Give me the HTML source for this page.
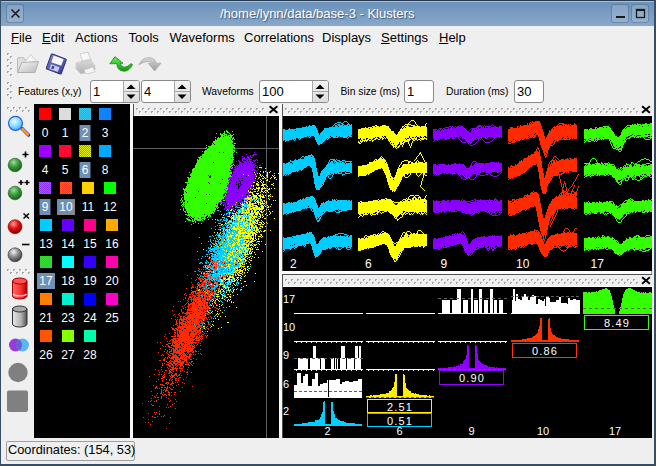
<!DOCTYPE html><html><head><meta charset="utf-8"><style>
*{margin:0;padding:0;box-sizing:border-box}
html,body{width:656px;height:466px;overflow:hidden;background:#efefef;font-family:"Liberation Sans", sans-serif;}
.a{position:absolute}
.t{position:absolute;white-space:pre;line-height:1}
</style></head><body>
<div class="a" style="left:0;top:0;width:656px;height:1px;background:#2a3a4e"></div><div class="a" style="left:0;top:0;width:1px;height:466px;background:#3a4d66"></div><div class="a" style="left:654px;top:0;width:2px;height:466px;background:#3a4d66"></div><div class="a" style="left:0;top:464px;width:656px;height:2px;background:#3a4d66"></div><div class="a" style="left:1px;top:1px;width:653px;height:25px;background:linear-gradient(#6a91ba,#88a8ca)"></div><div class="a" style="left:1px;top:1px;width:653px;height:1px;background:#a6bfda"></div><div class="a" style="left:6px;top:4px;width:18px;height:19px;border-radius:3px;background:rgba(255,255,255,0.15);border:1px solid rgba(40,60,90,0.35)"></div><div class="a" style="left:611px;top:4px;width:18px;height:19px;border-radius:3px;background:rgba(255,255,255,0.15);border:1px solid rgba(40,60,90,0.35)"></div><div class="a" style="left:631px;top:4px;width:18px;height:19px;border-radius:3px;background:rgba(255,255,255,0.15);border:1px solid rgba(40,60,90,0.35)"></div><svg class="a" style="left:0;top:0" width="656" height="26"><path d="M11.5 9.5 L19.5 17.5 M19.5 9.5 L11.5 17.5" stroke="#1a1a1a" stroke-width="1.6"/><rect x="616" y="16" width="9" height="2" fill="#1a1a1a"/><rect x="636.5" y="9.5" width="8" height="8" fill="none" stroke="#1a1a1a" stroke-width="1.3"/><rect x="636" y="9" width="9" height="2" fill="#1a1a1a"/></svg><div class="t" style="left:220px;top:7px;font-size:13px;color:#fff;text-shadow:1px 1px 1px rgba(0,0,0,0.45)">/home/lynn/data/base-3 - Klusters</div><div class="t" style="left:11px;top:31px;font-size:13px;color:#000"><u style="text-decoration:underline;text-underline-offset:1px">F</u>ile</div><div class="t" style="left:42px;top:31px;font-size:13px;color:#000"><u style="text-decoration:underline;text-underline-offset:1px">E</u>dit</div><div class="t" style="left:75px;top:31px;font-size:13px;color:#000">Actions</div><div class="t" style="left:128.5px;top:31px;font-size:13px;color:#000">Tools</div><div class="t" style="left:169.5px;top:31px;font-size:13px;color:#000">Waveforms</div><div class="t" style="left:244px;top:31px;font-size:13px;color:#000">Correlations</div><div class="t" style="left:322px;top:31px;font-size:13px;color:#000">Displays</div><div class="t" style="left:381px;top:31px;font-size:13px;color:#000"><u style="text-decoration:underline;text-underline-offset:1px">S</u>ettings</div><div class="t" style="left:439px;top:31px;font-size:13px;color:#000"><u style="text-decoration:underline;text-underline-offset:1px">H</u>elp</div><svg class="a" style="left:0;top:0" width="656" height="466"><path d="M7 53h2v1h-1v1h-1z" fill="#a4a4a4"/><path d="M8 55h1v-1h1v1h-1z" fill="#ffffff"/><path d="M10 56h2v1h-1v1h-1z" fill="#a4a4a4"/><path d="M11 58h1v-1h1v1h-1z" fill="#ffffff"/><path d="M7 59h2v1h-1v1h-1z" fill="#a4a4a4"/><path d="M8 61h1v-1h1v1h-1z" fill="#ffffff"/><path d="M10 62h2v1h-1v1h-1z" fill="#a4a4a4"/><path d="M11 64h1v-1h1v1h-1z" fill="#ffffff"/><path d="M7 65h2v1h-1v1h-1z" fill="#a4a4a4"/><path d="M8 67h1v-1h1v1h-1z" fill="#ffffff"/><path d="M10 68h2v1h-1v1h-1z" fill="#a4a4a4"/><path d="M11 70h1v-1h1v1h-1z" fill="#ffffff"/><path d="M7 71h2v1h-1v1h-1z" fill="#a4a4a4"/><path d="M8 73h1v-1h1v1h-1z" fill="#ffffff"/><path d="M10 74h2v1h-1v1h-1z" fill="#a4a4a4"/><path d="M11 76h1v-1h1v1h-1z" fill="#ffffff"/><path d="M7 82h2v1h-1v1h-1z" fill="#a4a4a4"/><path d="M8 84h1v-1h1v1h-1z" fill="#ffffff"/><path d="M10 85h2v1h-1v1h-1z" fill="#a4a4a4"/><path d="M11 87h1v-1h1v1h-1z" fill="#ffffff"/><path d="M7 88h2v1h-1v1h-1z" fill="#a4a4a4"/><path d="M8 90h1v-1h1v1h-1z" fill="#ffffff"/><path d="M10 91h2v1h-1v1h-1z" fill="#a4a4a4"/><path d="M11 93h1v-1h1v1h-1z" fill="#ffffff"/><path d="M7 94h2v1h-1v1h-1z" fill="#a4a4a4"/><path d="M8 96h1v-1h1v1h-1z" fill="#ffffff"/><path d="M10 97h2v1h-1v1h-1z" fill="#a4a4a4"/><path d="M11 99h1v-1h1v1h-1z" fill="#ffffff"/><path d="M7 107h2v1h-1v1h-1z" fill="#a4a4a4"/><path d="M8 109h1v-1h1v1h-1z" fill="#ffffff"/><path d="M10 110h2v1h-1v1h-1z" fill="#a4a4a4"/><path d="M11 112h1v-1h1v1h-1z" fill="#ffffff"/><path d="M13 107h2v1h-1v1h-1z" fill="#a4a4a4"/><path d="M14 109h1v-1h1v1h-1z" fill="#ffffff"/><path d="M16 110h2v1h-1v1h-1z" fill="#a4a4a4"/><path d="M17 112h1v-1h1v1h-1z" fill="#ffffff"/><path d="M19 107h2v1h-1v1h-1z" fill="#a4a4a4"/><path d="M20 109h1v-1h1v1h-1z" fill="#ffffff"/><path d="M22 110h2v1h-1v1h-1z" fill="#a4a4a4"/><path d="M23 112h1v-1h1v1h-1z" fill="#ffffff"/><path d="M25 107h2v1h-1v1h-1z" fill="#a4a4a4"/><path d="M26 109h1v-1h1v1h-1z" fill="#ffffff"/><path d="M28 110h2v1h-1v1h-1z" fill="#a4a4a4"/><path d="M29 112h1v-1h1v1h-1z" fill="#ffffff"/><path d="M7 269h2v1h-1v1h-1z" fill="#a4a4a4"/><path d="M8 271h1v-1h1v1h-1z" fill="#ffffff"/><path d="M10 272h2v1h-1v1h-1z" fill="#a4a4a4"/><path d="M11 274h1v-1h1v1h-1z" fill="#ffffff"/><path d="M13 269h2v1h-1v1h-1z" fill="#a4a4a4"/><path d="M14 271h1v-1h1v1h-1z" fill="#ffffff"/><path d="M16 272h2v1h-1v1h-1z" fill="#a4a4a4"/><path d="M17 274h1v-1h1v1h-1z" fill="#ffffff"/><path d="M19 269h2v1h-1v1h-1z" fill="#a4a4a4"/><path d="M20 271h1v-1h1v1h-1z" fill="#ffffff"/><path d="M22 272h2v1h-1v1h-1z" fill="#a4a4a4"/><path d="M23 274h1v-1h1v1h-1z" fill="#ffffff"/><path d="M25 269h2v1h-1v1h-1z" fill="#a4a4a4"/><path d="M26 271h1v-1h1v1h-1z" fill="#ffffff"/><path d="M28 272h2v1h-1v1h-1z" fill="#a4a4a4"/><path d="M29 274h1v-1h1v1h-1z" fill="#ffffff"/></svg><svg class="a" style="left:0;top:0" width="180" height="80">
<defs>
<linearGradient id="gfold" x1="0" y1="0" x2="1" y2="1"><stop offset="0" stop-color="#fafafa"/><stop offset="1" stop-color="#b8b8b8"/></linearGradient>
<linearGradient id="gflop" x1="0" y1="0" x2="1" y2="1"><stop offset="0" stop-color="#7b7fc8"/><stop offset="1" stop-color="#3a3f96"/></linearGradient>
<linearGradient id="ggreen" x1="0" y1="0" x2="0" y2="1"><stop offset="0" stop-color="#66ee55"/><stop offset="1" stop-color="#109a10"/></linearGradient>
<linearGradient id="ggray" x1="0" y1="0" x2="0" y2="1"><stop offset="0" stop-color="#d6d6d6"/><stop offset="1" stop-color="#9d9d9d"/></linearGradient>
</defs>
<!-- open folder -->
<path d="M17.5 58 L23.5 57.5 L25 60 L33 60 L33 72.5 L17.5 72.5 Z" fill="#dedede" stroke="#bdbdbd" stroke-width="1"/>
<path d="M23 64 L31 54.5 L35.5 60.5 L27 67 Z" fill="#f6f6f6" stroke="#c6c6c6" stroke-width="0.8"/>
<path d="M17.5 72.5 L22 62.5 L38.5 61.5 L35 72.5 Z" fill="url(#gfold)" stroke="#b0b0b0" stroke-width="1"/>
<!-- floppy -->
<g transform="rotate(20 56.3 64)">
<rect x="48.3" y="56" width="16" height="16" rx="1" fill="url(#gflop)" stroke="#2c2f78" stroke-width="1"/>
<rect x="51" y="57" width="10.5" height="7" fill="#f6f6fc"/>
<rect x="51.5" y="66" width="9" height="5" fill="#c9cbe8"/>
<rect x="53" y="67" width="2.5" height="3" fill="#40448f"/>
</g>
<!-- printer -->
<path d="M80 54 L88 52 L91 60 L83 62 Z" fill="#f7f7f7" stroke="#c8c8c8" stroke-width="0.8"/>
<path d="M76 63 L90 59 L95 66 L95 70 L81 74 L76 69 Z" fill="url(#ggray)" opacity="0.75" stroke="#c0c0c0" stroke-width="0.8"/>
<path d="M84 70 L93 67 L95 72 L86 74 Z" fill="#f5f5f5" stroke="#c8c8c8" stroke-width="0.8"/>
<!-- undo green -->
<path d="M109.8 63.8 L115 56.6 L123 63.2 L120.5 63.4 Q120.8 67.2 124.5 67.2 Q128 67 131 63.6 L132.6 64.6 Q129.5 71.2 124 71.2 Q117.2 71 116.8 63.6 Z" fill="url(#ggreen)" stroke="#0c7a0c" stroke-width="0.7"/>
<!-- redo gray -->
<path d="M139 64.8 Q142 57.6 149 57.6 Q155 57.8 156.2 63.2 L161 63.2 L154.6 71 L148.2 63.2 L152 63.2 Q151 61.3 148.6 61.3 Q143.5 61.5 139 64.8 Z" fill="url(#ggray)" stroke="#a8a8a8" stroke-width="0.7"/>
</svg><div class="t" style="left:18px;top:87px;font-size:10.3px;color:#000">Features (x,y)</div><div class="t" style="left:202px;top:87px;font-size:10.3px;color:#000">Waveforms</div><div class="t" style="left:340.5px;top:87px;font-size:10.3px;color:#000">Bin size (ms)</div><div class="t" style="left:446px;top:87px;font-size:10.3px;color:#000">Duration (ms)</div><div class="a" style="left:90px;top:80px;width:50px;height:23px;background:#fff;border:1px solid #8a8a8a;border-radius:3px"></div><div class="a" style="left:123px;top:81px;width:16px;height:21px;background:linear-gradient(#f4f4f4,#dcdcdc);border-left:1px solid #a8a8a8;border-radius:0 2px 2px 0"></div><div class="a" style="left:123px;top:91px;width:16px;height:1px;background:#a8a8a8"></div><svg class="a" style="left:0;top:0" width="656" height="110"><path d="M126.5 89 L135.5 89 L131 84.5 Z" fill="#000"/><path d="M126.5 94.5 L135.5 94.5 L131 99 Z" fill="#000"/></svg><div class="t" style="left:93px;top:85px;font-size:13px;color:#000">1</div><div class="a" style="left:141px;top:80px;width:50px;height:23px;background:#fff;border:1px solid #8a8a8a;border-radius:3px"></div><div class="a" style="left:174px;top:81px;width:16px;height:21px;background:linear-gradient(#f4f4f4,#dcdcdc);border-left:1px solid #a8a8a8;border-radius:0 2px 2px 0"></div><div class="a" style="left:174px;top:91px;width:16px;height:1px;background:#a8a8a8"></div><svg class="a" style="left:0;top:0" width="656" height="110"><path d="M177.5 89 L186.5 89 L182 84.5 Z" fill="#000"/><path d="M177.5 94.5 L186.5 94.5 L182 99 Z" fill="#000"/></svg><div class="t" style="left:144px;top:85px;font-size:13px;color:#000">4</div><div class="a" style="left:259px;top:80px;width:70px;height:23px;background:#fff;border:1px solid #8a8a8a;border-radius:3px"></div><div class="a" style="left:312px;top:81px;width:16px;height:21px;background:linear-gradient(#f4f4f4,#dcdcdc);border-left:1px solid #a8a8a8;border-radius:0 2px 2px 0"></div><div class="a" style="left:312px;top:91px;width:16px;height:1px;background:#a8a8a8"></div><svg class="a" style="left:0;top:0" width="656" height="110"><path d="M315.5 89 L324.5 89 L320 84.5 Z" fill="#000"/><path d="M315.5 94.5 L324.5 94.5 L320 99 Z" fill="#000"/></svg><div class="t" style="left:262px;top:85px;font-size:13px;color:#000">100</div><div class="a" style="left:404px;top:80px;width:30px;height:23px;background:#fff;border:1px solid #8a8a8a;border-radius:3px"></div><div class="t" style="left:407px;top:85px;font-size:13px;color:#000">1</div><div class="a" style="left:514px;top:80px;width:30px;height:23px;background:#fff;border:1px solid #8a8a8a;border-radius:3px"></div><div class="t" style="left:517px;top:85px;font-size:13px;color:#000">30</div><div class="a" style="left:6px;top:441px;width:129px;height:20px;border:1px solid #a0a0a0;border-radius:2px"></div><div class="t" style="left:8px;top:444px;font-size:12.8px;color:#000">Coordinates: (154, 53)</div><div class="a" style="left:34px;top:104px;width:96px;height:334px;background:#000"></div><svg class="a" style="left:0;top:0" width="140" height="440"><defs><pattern id="p2" x="0" y="0" width="2" height="2" patternUnits="userSpaceOnUse"><rect width="2" height="2" fill="#7890a8"/><rect width="1" height="1" fill="#33c8f0"/><rect x="1" y="1" width="1" height="1" fill="#33c8f0"/></pattern><pattern id="p6" x="0" y="0" width="2" height="2" patternUnits="userSpaceOnUse"><rect width="2" height="2" fill="#7890a8"/><rect width="1" height="1" fill="#e6f000"/><rect x="1" y="1" width="1" height="1" fill="#e6f000"/></pattern><pattern id="p9" x="0" y="0" width="2" height="2" patternUnits="userSpaceOnUse"><rect width="2" height="2" fill="#7890a8"/><rect width="1" height="1" fill="#8a2cff"/><rect x="1" y="1" width="1" height="1" fill="#8a2cff"/></pattern><pattern id="p10" x="0" y="0" width="2" height="2" patternUnits="userSpaceOnUse"><rect width="2" height="2" fill="#7890a8"/><rect width="1" height="1" fill="#ff3a1a"/><rect x="1" y="1" width="1" height="1" fill="#ff3a1a"/></pattern><pattern id="p17" x="0" y="0" width="2" height="2" patternUnits="userSpaceOnUse"><rect width="2" height="2" fill="#7890a8"/><rect width="1" height="1" fill="#33dd33"/><rect x="1" y="1" width="1" height="1" fill="#33dd33"/></pattern></defs><rect x="39.0" y="108" width="12" height="12" fill="#ff0000"/><rect x="59.0" y="108" width="12" height="12" fill="#dcdcdc"/><rect x="79.0" y="108" width="12" height="12" fill="url(#p2)"/><rect x="79.5" y="125" width="11" height="16" fill="#6f8fb4"/><rect x="99.0" y="108" width="12" height="12" fill="#0a84ff"/><rect x="39.0" y="145" width="12" height="12" fill="#a000ff"/><rect x="59.0" y="145" width="12" height="12" fill="#ff0a32"/><rect x="79.0" y="145" width="12" height="12" fill="url(#p6)"/><rect x="79.5" y="162" width="11" height="16" fill="#6f8fb4"/><rect x="99.0" y="145" width="12" height="12" fill="#00aaff"/><rect x="39.0" y="182" width="12" height="12" fill="url(#p9)"/><rect x="39.5" y="199" width="11" height="16" fill="#6f8fb4"/><rect x="60.0" y="182" width="12" height="12" fill="url(#p10)"/><rect x="57.0" y="199" width="18" height="16" fill="#6f8fb4"/><rect x="57.5" y="199.5" width="17" height="15" fill="none" stroke="#c07030" stroke-width="1" stroke-dasharray="1 1"/><rect x="82.0" y="182" width="12" height="12" fill="#ffd000"/><rect x="104.0" y="182" width="12" height="12" fill="#00ff00"/><rect x="40.0" y="219" width="12" height="12" fill="#00ccff"/><rect x="62.0" y="219" width="12" height="12" fill="#6400ff"/><rect x="84.0" y="219" width="12" height="12" fill="#ff0088"/><rect x="106.0" y="219" width="12" height="12" fill="#ffaa00"/><rect x="40.0" y="256" width="12" height="12" fill="url(#p17)"/><rect x="37.0" y="273" width="18" height="16" fill="#6f8fb4"/><rect x="62.0" y="256" width="12" height="12" fill="#00ffff"/><rect x="84.0" y="256" width="12" height="12" fill="#3300ff"/><rect x="106.0" y="256" width="12" height="12" fill="#ff00aa"/><rect x="40.0" y="293" width="12" height="12" fill="#ff8000"/><rect x="62.0" y="293" width="12" height="12" fill="#00f0d0"/><rect x="84.0" y="293" width="12" height="12" fill="#0000ff"/><rect x="106.0" y="293" width="12" height="12" fill="#ff00cc"/><rect x="40.0" y="330" width="12" height="12" fill="#ff5500"/><rect x="62.0" y="330" width="12" height="12" fill="#88ff00"/><rect x="84.0" y="330" width="12" height="12" fill="#00ffaa"/></svg><div class="t" style="left:25.0px;width:40px;text-align:center;top:127px;font-size:12px;color:#fff">0</div><div class="t" style="left:45.0px;width:40px;text-align:center;top:127px;font-size:12px;color:#fff">1</div><div class="t" style="left:65.0px;width:40px;text-align:center;top:127px;font-size:12px;color:#fff">2</div><div class="t" style="left:85.0px;width:40px;text-align:center;top:127px;font-size:12px;color:#fff">3</div><div class="t" style="left:25.0px;width:40px;text-align:center;top:164px;font-size:12px;color:#fff">4</div><div class="t" style="left:45.0px;width:40px;text-align:center;top:164px;font-size:12px;color:#fff">5</div><div class="t" style="left:65.0px;width:40px;text-align:center;top:164px;font-size:12px;color:#fff">6</div><div class="t" style="left:85.0px;width:40px;text-align:center;top:164px;font-size:12px;color:#fff">8</div><div class="t" style="left:25.0px;width:40px;text-align:center;top:201px;font-size:12px;color:#fff">9</div><div class="t" style="left:46.0px;width:40px;text-align:center;top:201px;font-size:12px;color:#fff">10</div><div class="t" style="left:68.0px;width:40px;text-align:center;top:201px;font-size:12px;color:#fff">11</div><div class="t" style="left:90.0px;width:40px;text-align:center;top:201px;font-size:12px;color:#fff">12</div><div class="t" style="left:26.0px;width:40px;text-align:center;top:238px;font-size:12px;color:#fff">13</div><div class="t" style="left:48.0px;width:40px;text-align:center;top:238px;font-size:12px;color:#fff">14</div><div class="t" style="left:70.0px;width:40px;text-align:center;top:238px;font-size:12px;color:#fff">15</div><div class="t" style="left:92.0px;width:40px;text-align:center;top:238px;font-size:12px;color:#fff">16</div><div class="t" style="left:26.0px;width:40px;text-align:center;top:275px;font-size:12px;color:#fff">17</div><div class="t" style="left:48.0px;width:40px;text-align:center;top:275px;font-size:12px;color:#fff">18</div><div class="t" style="left:70.0px;width:40px;text-align:center;top:275px;font-size:12px;color:#fff">19</div><div class="t" style="left:92.0px;width:40px;text-align:center;top:275px;font-size:12px;color:#fff">20</div><div class="t" style="left:26.0px;width:40px;text-align:center;top:312px;font-size:12px;color:#fff">21</div><div class="t" style="left:48.0px;width:40px;text-align:center;top:312px;font-size:12px;color:#fff">23</div><div class="t" style="left:70.0px;width:40px;text-align:center;top:312px;font-size:12px;color:#fff">24</div><div class="t" style="left:92.0px;width:40px;text-align:center;top:312px;font-size:12px;color:#fff">25</div><div class="t" style="left:26.0px;width:40px;text-align:center;top:349px;font-size:12px;color:#fff">26</div><div class="t" style="left:48.0px;width:40px;text-align:center;top:349px;font-size:12px;color:#fff">27</div><div class="t" style="left:70.0px;width:40px;text-align:center;top:349px;font-size:12px;color:#fff">28</div><svg class="a" style="left:0;top:100px" width="34" height="320">
<defs>
<radialGradient id="gball" cx="0.4" cy="0.3" r="0.7"><stop offset="0" stop-color="#9fdc9f"/><stop offset="0.5" stop-color="#3a9a3a"/><stop offset="1" stop-color="#1d5e1d"/></radialGradient>
<radialGradient id="rball" cx="0.4" cy="0.3" r="0.7"><stop offset="0" stop-color="#ff9a9a"/><stop offset="0.5" stop-color="#e01010"/><stop offset="1" stop-color="#8a0000"/></radialGradient>
<radialGradient id="wball" cx="0.4" cy="0.3" r="0.7"><stop offset="0" stop-color="#f4f4f4"/><stop offset="0.5" stop-color="#8c8c8c"/><stop offset="1" stop-color="#3c3c3c"/></radialGradient>
<radialGradient id="mag" cx="0.4" cy="0.35" r="0.7"><stop offset="0" stop-color="#e8fbff"/><stop offset="0.6" stop-color="#7fd6ff"/><stop offset="1" stop-color="#3aa0f0"/></radialGradient>
<linearGradient id="cylr" x1="0" x2="1"><stop offset="0" stop-color="#ff6a6a"/><stop offset="0.6" stop-color="#ff2a2a"/><stop offset="1" stop-color="#a00000"/></linearGradient>
<linearGradient id="cylg" x1="0" x2="1"><stop offset="0" stop-color="#e8e8e8"/><stop offset="0.6" stop-color="#b0b0b0"/><stop offset="1" stop-color="#505050"/></linearGradient>
</defs>
<!-- magnifier (y offset 100) -->
<line x1="22" y1="28.5" x2="28.5" y2="35" stroke="#2a2ae0" stroke-width="3.5" stroke-linecap="round"/>
<line x1="22.5" y1="29" x2="28" y2="34.5" stroke="#f0a020" stroke-width="2.5" stroke-linecap="round"/>
<circle cx="15.5" cy="23.3" r="7" fill="url(#mag)" stroke="#2a5ae8" stroke-width="1.2"/>
<!-- + -->
<path d="M25.5 51.5 V57.5 M22.5 54.5 H28.5" stroke="#000" stroke-width="1.6"/>
<circle cx="15" cy="65" r="6.8" fill="url(#gball)" stroke="#1a5a1a" stroke-width="0.6"/>
<!-- ++ -->
<path d="M21 80 V85 M18.5 82.5 H23.5 M27 80 V85 M24.5 82.5 H29.5" stroke="#000" stroke-width="1.5"/>
<circle cx="15" cy="93" r="6.8" fill="url(#gball)" stroke="#1a5a1a" stroke-width="0.6"/>
<!-- x -->
<path d="M23.5 113.5 L29 118.5 M29 113.5 L23.5 118.5" stroke="#000" stroke-width="1.5"/>
<circle cx="15" cy="126.7" r="7" fill="url(#rball)" stroke="#8a0000" stroke-width="0.6"/>
<!-- - -->
<path d="M22 144.5 H29.5" stroke="#000" stroke-width="1.6"/>
<circle cx="15" cy="154.8" r="7" fill="url(#wball)" stroke="#333" stroke-width="0.6"/>
<!-- red cylinder y 277.8-299.5 -->
<path d="M12.5 181 V196 A7.2 3 0 0 0 27 196 V181 Z" fill="url(#cylr)" stroke="#a00000" stroke-width="1"/>
<ellipse cx="19.75" cy="181" rx="7.2" ry="3" fill="#ff5050" stroke="#a00000" stroke-width="1"/>
<path d="M13 194 A7 2.5 0 0 0 26.5 194" fill="none" stroke="#ffd0d0" stroke-width="1.5"/>
<!-- gray cylinder -->
<path d="M12.5 209 V224 A7.2 3 0 0 0 27 224 V209 Z" fill="url(#cylg)" stroke="#303030" stroke-width="1"/>
<ellipse cx="19.75" cy="209" rx="7.2" ry="3" fill="#a8a8a8" stroke="#303030" stroke-width="1"/>
<!-- venn -->
<circle cx="15.5" cy="245" r="6.5" fill="#9a3ad8"/>
<circle cx="22.5" cy="245" r="6.5" fill="#4aaef0" opacity="0.9"/>
<path d="M19 239.5 A6.5 6.5 0 0 1 19 250.5 A6.5 6.5 0 0 1 19 239.5 Z" fill="#6a60d0"/>
<!-- gray circle -->
<circle cx="18" cy="272.5" r="9.7" fill="#808080"/>
<!-- gray rounded square -->
<rect x="7" y="290.4" width="21" height="21.5" rx="2" fill="#808080"/>
</svg><svg class="a" style="left:0;top:0" width="656" height="466"><rect x="133" y="104" width="1" height="334" fill="#505050"/><rect x="134" y="115" width="145" height="1" fill="#ffffff"/><path d="M136 108h2v1h-1v1h-1z" fill="#a4a4a4"/><path d="M137 110h1v-1h1v1h-1z" fill="#ffffff"/><path d="M142 108h2v1h-1v1h-1z" fill="#a4a4a4"/><path d="M143 110h1v-1h1v1h-1z" fill="#ffffff"/><path d="M148 108h2v1h-1v1h-1z" fill="#a4a4a4"/><path d="M149 110h1v-1h1v1h-1z" fill="#ffffff"/><path d="M154 108h2v1h-1v1h-1z" fill="#a4a4a4"/><path d="M155 110h1v-1h1v1h-1z" fill="#ffffff"/><path d="M160 108h2v1h-1v1h-1z" fill="#a4a4a4"/><path d="M161 110h1v-1h1v1h-1z" fill="#ffffff"/><path d="M166 108h2v1h-1v1h-1z" fill="#a4a4a4"/><path d="M167 110h1v-1h1v1h-1z" fill="#ffffff"/><path d="M172 108h2v1h-1v1h-1z" fill="#a4a4a4"/><path d="M173 110h1v-1h1v1h-1z" fill="#ffffff"/><path d="M178 108h2v1h-1v1h-1z" fill="#a4a4a4"/><path d="M179 110h1v-1h1v1h-1z" fill="#ffffff"/><path d="M184 108h2v1h-1v1h-1z" fill="#a4a4a4"/><path d="M185 110h1v-1h1v1h-1z" fill="#ffffff"/><path d="M190 108h2v1h-1v1h-1z" fill="#a4a4a4"/><path d="M191 110h1v-1h1v1h-1z" fill="#ffffff"/><path d="M196 108h2v1h-1v1h-1z" fill="#a4a4a4"/><path d="M197 110h1v-1h1v1h-1z" fill="#ffffff"/><path d="M202 108h2v1h-1v1h-1z" fill="#a4a4a4"/><path d="M203 110h1v-1h1v1h-1z" fill="#ffffff"/><path d="M208 108h2v1h-1v1h-1z" fill="#a4a4a4"/><path d="M209 110h1v-1h1v1h-1z" fill="#ffffff"/><path d="M214 108h2v1h-1v1h-1z" fill="#a4a4a4"/><path d="M215 110h1v-1h1v1h-1z" fill="#ffffff"/><path d="M220 108h2v1h-1v1h-1z" fill="#a4a4a4"/><path d="M221 110h1v-1h1v1h-1z" fill="#ffffff"/><path d="M226 108h2v1h-1v1h-1z" fill="#a4a4a4"/><path d="M227 110h1v-1h1v1h-1z" fill="#ffffff"/><path d="M232 108h2v1h-1v1h-1z" fill="#a4a4a4"/><path d="M233 110h1v-1h1v1h-1z" fill="#ffffff"/><path d="M238 108h2v1h-1v1h-1z" fill="#a4a4a4"/><path d="M239 110h1v-1h1v1h-1z" fill="#ffffff"/><path d="M244 108h2v1h-1v1h-1z" fill="#a4a4a4"/><path d="M245 110h1v-1h1v1h-1z" fill="#ffffff"/><path d="M250 108h2v1h-1v1h-1z" fill="#a4a4a4"/><path d="M251 110h1v-1h1v1h-1z" fill="#ffffff"/><path d="M256 108h2v1h-1v1h-1z" fill="#a4a4a4"/><path d="M257 110h1v-1h1v1h-1z" fill="#ffffff"/><path d="M262 108h2v1h-1v1h-1z" fill="#a4a4a4"/><path d="M263 110h1v-1h1v1h-1z" fill="#ffffff"/><path d="M139 111h2v1h-1v1h-1z" fill="#a4a4a4"/><path d="M140 113h1v-1h1v1h-1z" fill="#ffffff"/><path d="M145 111h2v1h-1v1h-1z" fill="#a4a4a4"/><path d="M146 113h1v-1h1v1h-1z" fill="#ffffff"/><path d="M151 111h2v1h-1v1h-1z" fill="#a4a4a4"/><path d="M152 113h1v-1h1v1h-1z" fill="#ffffff"/><path d="M157 111h2v1h-1v1h-1z" fill="#a4a4a4"/><path d="M158 113h1v-1h1v1h-1z" fill="#ffffff"/><path d="M163 111h2v1h-1v1h-1z" fill="#a4a4a4"/><path d="M164 113h1v-1h1v1h-1z" fill="#ffffff"/><path d="M169 111h2v1h-1v1h-1z" fill="#a4a4a4"/><path d="M170 113h1v-1h1v1h-1z" fill="#ffffff"/><path d="M175 111h2v1h-1v1h-1z" fill="#a4a4a4"/><path d="M176 113h1v-1h1v1h-1z" fill="#ffffff"/><path d="M181 111h2v1h-1v1h-1z" fill="#a4a4a4"/><path d="M182 113h1v-1h1v1h-1z" fill="#ffffff"/><path d="M187 111h2v1h-1v1h-1z" fill="#a4a4a4"/><path d="M188 113h1v-1h1v1h-1z" fill="#ffffff"/><path d="M193 111h2v1h-1v1h-1z" fill="#a4a4a4"/><path d="M194 113h1v-1h1v1h-1z" fill="#ffffff"/><path d="M199 111h2v1h-1v1h-1z" fill="#a4a4a4"/><path d="M200 113h1v-1h1v1h-1z" fill="#ffffff"/><path d="M205 111h2v1h-1v1h-1z" fill="#a4a4a4"/><path d="M206 113h1v-1h1v1h-1z" fill="#ffffff"/><path d="M211 111h2v1h-1v1h-1z" fill="#a4a4a4"/><path d="M212 113h1v-1h1v1h-1z" fill="#ffffff"/><path d="M217 111h2v1h-1v1h-1z" fill="#a4a4a4"/><path d="M218 113h1v-1h1v1h-1z" fill="#ffffff"/><path d="M223 111h2v1h-1v1h-1z" fill="#a4a4a4"/><path d="M224 113h1v-1h1v1h-1z" fill="#ffffff"/><path d="M229 111h2v1h-1v1h-1z" fill="#a4a4a4"/><path d="M230 113h1v-1h1v1h-1z" fill="#ffffff"/><path d="M235 111h2v1h-1v1h-1z" fill="#a4a4a4"/><path d="M236 113h1v-1h1v1h-1z" fill="#ffffff"/><path d="M241 111h2v1h-1v1h-1z" fill="#a4a4a4"/><path d="M242 113h1v-1h1v1h-1z" fill="#ffffff"/><path d="M247 111h2v1h-1v1h-1z" fill="#a4a4a4"/><path d="M248 113h1v-1h1v1h-1z" fill="#ffffff"/><path d="M253 111h2v1h-1v1h-1z" fill="#a4a4a4"/><path d="M254 113h1v-1h1v1h-1z" fill="#ffffff"/><path d="M259 111h2v1h-1v1h-1z" fill="#a4a4a4"/><path d="M260 113h1v-1h1v1h-1z" fill="#ffffff"/><path d="M270.3 106.8 L276.7 112.2 M276.7 106.8 L270.3 112.2" stroke="#000" stroke-width="1.9" stroke-linecap="square" fill="none"/><rect x="282" y="104" width="1" height="167" fill="#505050"/><rect x="283" y="115" width="369" height="1" fill="#ffffff"/><path d="M285 108h2v1h-1v1h-1z" fill="#a4a4a4"/><path d="M286 110h1v-1h1v1h-1z" fill="#ffffff"/><path d="M291 108h2v1h-1v1h-1z" fill="#a4a4a4"/><path d="M292 110h1v-1h1v1h-1z" fill="#ffffff"/><path d="M297 108h2v1h-1v1h-1z" fill="#a4a4a4"/><path d="M298 110h1v-1h1v1h-1z" fill="#ffffff"/><path d="M303 108h2v1h-1v1h-1z" fill="#a4a4a4"/><path d="M304 110h1v-1h1v1h-1z" fill="#ffffff"/><path d="M309 108h2v1h-1v1h-1z" fill="#a4a4a4"/><path d="M310 110h1v-1h1v1h-1z" fill="#ffffff"/><path d="M315 108h2v1h-1v1h-1z" fill="#a4a4a4"/><path d="M316 110h1v-1h1v1h-1z" fill="#ffffff"/><path d="M321 108h2v1h-1v1h-1z" fill="#a4a4a4"/><path d="M322 110h1v-1h1v1h-1z" fill="#ffffff"/><path d="M327 108h2v1h-1v1h-1z" fill="#a4a4a4"/><path d="M328 110h1v-1h1v1h-1z" fill="#ffffff"/><path d="M333 108h2v1h-1v1h-1z" fill="#a4a4a4"/><path d="M334 110h1v-1h1v1h-1z" fill="#ffffff"/><path d="M339 108h2v1h-1v1h-1z" fill="#a4a4a4"/><path d="M340 110h1v-1h1v1h-1z" fill="#ffffff"/><path d="M345 108h2v1h-1v1h-1z" fill="#a4a4a4"/><path d="M346 110h1v-1h1v1h-1z" fill="#ffffff"/><path d="M351 108h2v1h-1v1h-1z" fill="#a4a4a4"/><path d="M352 110h1v-1h1v1h-1z" fill="#ffffff"/><path d="M357 108h2v1h-1v1h-1z" fill="#a4a4a4"/><path d="M358 110h1v-1h1v1h-1z" fill="#ffffff"/><path d="M363 108h2v1h-1v1h-1z" fill="#a4a4a4"/><path d="M364 110h1v-1h1v1h-1z" fill="#ffffff"/><path d="M369 108h2v1h-1v1h-1z" fill="#a4a4a4"/><path d="M370 110h1v-1h1v1h-1z" fill="#ffffff"/><path d="M375 108h2v1h-1v1h-1z" fill="#a4a4a4"/><path d="M376 110h1v-1h1v1h-1z" fill="#ffffff"/><path d="M381 108h2v1h-1v1h-1z" fill="#a4a4a4"/><path d="M382 110h1v-1h1v1h-1z" fill="#ffffff"/><path d="M387 108h2v1h-1v1h-1z" fill="#a4a4a4"/><path d="M388 110h1v-1h1v1h-1z" fill="#ffffff"/><path d="M393 108h2v1h-1v1h-1z" fill="#a4a4a4"/><path d="M394 110h1v-1h1v1h-1z" fill="#ffffff"/><path d="M399 108h2v1h-1v1h-1z" fill="#a4a4a4"/><path d="M400 110h1v-1h1v1h-1z" fill="#ffffff"/><path d="M405 108h2v1h-1v1h-1z" fill="#a4a4a4"/><path d="M406 110h1v-1h1v1h-1z" fill="#ffffff"/><path d="M411 108h2v1h-1v1h-1z" fill="#a4a4a4"/><path d="M412 110h1v-1h1v1h-1z" fill="#ffffff"/><path d="M417 108h2v1h-1v1h-1z" fill="#a4a4a4"/><path d="M418 110h1v-1h1v1h-1z" fill="#ffffff"/><path d="M423 108h2v1h-1v1h-1z" fill="#a4a4a4"/><path d="M424 110h1v-1h1v1h-1z" fill="#ffffff"/><path d="M429 108h2v1h-1v1h-1z" fill="#a4a4a4"/><path d="M430 110h1v-1h1v1h-1z" fill="#ffffff"/><path d="M435 108h2v1h-1v1h-1z" fill="#a4a4a4"/><path d="M436 110h1v-1h1v1h-1z" fill="#ffffff"/><path d="M441 108h2v1h-1v1h-1z" fill="#a4a4a4"/><path d="M442 110h1v-1h1v1h-1z" fill="#ffffff"/><path d="M447 108h2v1h-1v1h-1z" fill="#a4a4a4"/><path d="M448 110h1v-1h1v1h-1z" fill="#ffffff"/><path d="M453 108h2v1h-1v1h-1z" fill="#a4a4a4"/><path d="M454 110h1v-1h1v1h-1z" fill="#ffffff"/><path d="M459 108h2v1h-1v1h-1z" fill="#a4a4a4"/><path d="M460 110h1v-1h1v1h-1z" fill="#ffffff"/><path d="M465 108h2v1h-1v1h-1z" fill="#a4a4a4"/><path d="M466 110h1v-1h1v1h-1z" fill="#ffffff"/><path d="M471 108h2v1h-1v1h-1z" fill="#a4a4a4"/><path d="M472 110h1v-1h1v1h-1z" fill="#ffffff"/><path d="M477 108h2v1h-1v1h-1z" fill="#a4a4a4"/><path d="M478 110h1v-1h1v1h-1z" fill="#ffffff"/><path d="M483 108h2v1h-1v1h-1z" fill="#a4a4a4"/><path d="M484 110h1v-1h1v1h-1z" fill="#ffffff"/><path d="M489 108h2v1h-1v1h-1z" fill="#a4a4a4"/><path d="M490 110h1v-1h1v1h-1z" fill="#ffffff"/><path d="M495 108h2v1h-1v1h-1z" fill="#a4a4a4"/><path d="M496 110h1v-1h1v1h-1z" fill="#ffffff"/><path d="M501 108h2v1h-1v1h-1z" fill="#a4a4a4"/><path d="M502 110h1v-1h1v1h-1z" fill="#ffffff"/><path d="M507 108h2v1h-1v1h-1z" fill="#a4a4a4"/><path d="M508 110h1v-1h1v1h-1z" fill="#ffffff"/><path d="M513 108h2v1h-1v1h-1z" fill="#a4a4a4"/><path d="M514 110h1v-1h1v1h-1z" fill="#ffffff"/><path d="M519 108h2v1h-1v1h-1z" fill="#a4a4a4"/><path d="M520 110h1v-1h1v1h-1z" fill="#ffffff"/><path d="M525 108h2v1h-1v1h-1z" fill="#a4a4a4"/><path d="M526 110h1v-1h1v1h-1z" fill="#ffffff"/><path d="M531 108h2v1h-1v1h-1z" fill="#a4a4a4"/><path d="M532 110h1v-1h1v1h-1z" fill="#ffffff"/><path d="M537 108h2v1h-1v1h-1z" fill="#a4a4a4"/><path d="M538 110h1v-1h1v1h-1z" fill="#ffffff"/><path d="M543 108h2v1h-1v1h-1z" fill="#a4a4a4"/><path d="M544 110h1v-1h1v1h-1z" fill="#ffffff"/><path d="M549 108h2v1h-1v1h-1z" fill="#a4a4a4"/><path d="M550 110h1v-1h1v1h-1z" fill="#ffffff"/><path d="M555 108h2v1h-1v1h-1z" fill="#a4a4a4"/><path d="M556 110h1v-1h1v1h-1z" fill="#ffffff"/><path d="M561 108h2v1h-1v1h-1z" fill="#a4a4a4"/><path d="M562 110h1v-1h1v1h-1z" fill="#ffffff"/><path d="M567 108h2v1h-1v1h-1z" fill="#a4a4a4"/><path d="M568 110h1v-1h1v1h-1z" fill="#ffffff"/><path d="M573 108h2v1h-1v1h-1z" fill="#a4a4a4"/><path d="M574 110h1v-1h1v1h-1z" fill="#ffffff"/><path d="M579 108h2v1h-1v1h-1z" fill="#a4a4a4"/><path d="M580 110h1v-1h1v1h-1z" fill="#ffffff"/><path d="M585 108h2v1h-1v1h-1z" fill="#a4a4a4"/><path d="M586 110h1v-1h1v1h-1z" fill="#ffffff"/><path d="M591 108h2v1h-1v1h-1z" fill="#a4a4a4"/><path d="M592 110h1v-1h1v1h-1z" fill="#ffffff"/><path d="M597 108h2v1h-1v1h-1z" fill="#a4a4a4"/><path d="M598 110h1v-1h1v1h-1z" fill="#ffffff"/><path d="M603 108h2v1h-1v1h-1z" fill="#a4a4a4"/><path d="M604 110h1v-1h1v1h-1z" fill="#ffffff"/><path d="M609 108h2v1h-1v1h-1z" fill="#a4a4a4"/><path d="M610 110h1v-1h1v1h-1z" fill="#ffffff"/><path d="M615 108h2v1h-1v1h-1z" fill="#a4a4a4"/><path d="M616 110h1v-1h1v1h-1z" fill="#ffffff"/><path d="M621 108h2v1h-1v1h-1z" fill="#a4a4a4"/><path d="M622 110h1v-1h1v1h-1z" fill="#ffffff"/><path d="M627 108h2v1h-1v1h-1z" fill="#a4a4a4"/><path d="M628 110h1v-1h1v1h-1z" fill="#ffffff"/><path d="M633 108h2v1h-1v1h-1z" fill="#a4a4a4"/><path d="M634 110h1v-1h1v1h-1z" fill="#ffffff"/><path d="M288 111h2v1h-1v1h-1z" fill="#a4a4a4"/><path d="M289 113h1v-1h1v1h-1z" fill="#ffffff"/><path d="M294 111h2v1h-1v1h-1z" fill="#a4a4a4"/><path d="M295 113h1v-1h1v1h-1z" fill="#ffffff"/><path d="M300 111h2v1h-1v1h-1z" fill="#a4a4a4"/><path d="M301 113h1v-1h1v1h-1z" fill="#ffffff"/><path d="M306 111h2v1h-1v1h-1z" fill="#a4a4a4"/><path d="M307 113h1v-1h1v1h-1z" fill="#ffffff"/><path d="M312 111h2v1h-1v1h-1z" fill="#a4a4a4"/><path d="M313 113h1v-1h1v1h-1z" fill="#ffffff"/><path d="M318 111h2v1h-1v1h-1z" fill="#a4a4a4"/><path d="M319 113h1v-1h1v1h-1z" fill="#ffffff"/><path d="M324 111h2v1h-1v1h-1z" fill="#a4a4a4"/><path d="M325 113h1v-1h1v1h-1z" fill="#ffffff"/><path d="M330 111h2v1h-1v1h-1z" fill="#a4a4a4"/><path d="M331 113h1v-1h1v1h-1z" fill="#ffffff"/><path d="M336 111h2v1h-1v1h-1z" fill="#a4a4a4"/><path d="M337 113h1v-1h1v1h-1z" fill="#ffffff"/><path d="M342 111h2v1h-1v1h-1z" fill="#a4a4a4"/><path d="M343 113h1v-1h1v1h-1z" fill="#ffffff"/><path d="M348 111h2v1h-1v1h-1z" fill="#a4a4a4"/><path d="M349 113h1v-1h1v1h-1z" fill="#ffffff"/><path d="M354 111h2v1h-1v1h-1z" fill="#a4a4a4"/><path d="M355 113h1v-1h1v1h-1z" fill="#ffffff"/><path d="M360 111h2v1h-1v1h-1z" fill="#a4a4a4"/><path d="M361 113h1v-1h1v1h-1z" fill="#ffffff"/><path d="M366 111h2v1h-1v1h-1z" fill="#a4a4a4"/><path d="M367 113h1v-1h1v1h-1z" fill="#ffffff"/><path d="M372 111h2v1h-1v1h-1z" fill="#a4a4a4"/><path d="M373 113h1v-1h1v1h-1z" fill="#ffffff"/><path d="M378 111h2v1h-1v1h-1z" fill="#a4a4a4"/><path d="M379 113h1v-1h1v1h-1z" fill="#ffffff"/><path d="M384 111h2v1h-1v1h-1z" fill="#a4a4a4"/><path d="M385 113h1v-1h1v1h-1z" fill="#ffffff"/><path d="M390 111h2v1h-1v1h-1z" fill="#a4a4a4"/><path d="M391 113h1v-1h1v1h-1z" fill="#ffffff"/><path d="M396 111h2v1h-1v1h-1z" fill="#a4a4a4"/><path d="M397 113h1v-1h1v1h-1z" fill="#ffffff"/><path d="M402 111h2v1h-1v1h-1z" fill="#a4a4a4"/><path d="M403 113h1v-1h1v1h-1z" fill="#ffffff"/><path d="M408 111h2v1h-1v1h-1z" fill="#a4a4a4"/><path d="M409 113h1v-1h1v1h-1z" fill="#ffffff"/><path d="M414 111h2v1h-1v1h-1z" fill="#a4a4a4"/><path d="M415 113h1v-1h1v1h-1z" fill="#ffffff"/><path d="M420 111h2v1h-1v1h-1z" fill="#a4a4a4"/><path d="M421 113h1v-1h1v1h-1z" fill="#ffffff"/><path d="M426 111h2v1h-1v1h-1z" fill="#a4a4a4"/><path d="M427 113h1v-1h1v1h-1z" fill="#ffffff"/><path d="M432 111h2v1h-1v1h-1z" fill="#a4a4a4"/><path d="M433 113h1v-1h1v1h-1z" fill="#ffffff"/><path d="M438 111h2v1h-1v1h-1z" fill="#a4a4a4"/><path d="M439 113h1v-1h1v1h-1z" fill="#ffffff"/><path d="M444 111h2v1h-1v1h-1z" fill="#a4a4a4"/><path d="M445 113h1v-1h1v1h-1z" fill="#ffffff"/><path d="M450 111h2v1h-1v1h-1z" fill="#a4a4a4"/><path d="M451 113h1v-1h1v1h-1z" fill="#ffffff"/><path d="M456 111h2v1h-1v1h-1z" fill="#a4a4a4"/><path d="M457 113h1v-1h1v1h-1z" fill="#ffffff"/><path d="M462 111h2v1h-1v1h-1z" fill="#a4a4a4"/><path d="M463 113h1v-1h1v1h-1z" fill="#ffffff"/><path d="M468 111h2v1h-1v1h-1z" fill="#a4a4a4"/><path d="M469 113h1v-1h1v1h-1z" fill="#ffffff"/><path d="M474 111h2v1h-1v1h-1z" fill="#a4a4a4"/><path d="M475 113h1v-1h1v1h-1z" fill="#ffffff"/><path d="M480 111h2v1h-1v1h-1z" fill="#a4a4a4"/><path d="M481 113h1v-1h1v1h-1z" fill="#ffffff"/><path d="M486 111h2v1h-1v1h-1z" fill="#a4a4a4"/><path d="M487 113h1v-1h1v1h-1z" fill="#ffffff"/><path d="M492 111h2v1h-1v1h-1z" fill="#a4a4a4"/><path d="M493 113h1v-1h1v1h-1z" fill="#ffffff"/><path d="M498 111h2v1h-1v1h-1z" fill="#a4a4a4"/><path d="M499 113h1v-1h1v1h-1z" fill="#ffffff"/><path d="M504 111h2v1h-1v1h-1z" fill="#a4a4a4"/><path d="M505 113h1v-1h1v1h-1z" fill="#ffffff"/><path d="M510 111h2v1h-1v1h-1z" fill="#a4a4a4"/><path d="M511 113h1v-1h1v1h-1z" fill="#ffffff"/><path d="M516 111h2v1h-1v1h-1z" fill="#a4a4a4"/><path d="M517 113h1v-1h1v1h-1z" fill="#ffffff"/><path d="M522 111h2v1h-1v1h-1z" fill="#a4a4a4"/><path d="M523 113h1v-1h1v1h-1z" fill="#ffffff"/><path d="M528 111h2v1h-1v1h-1z" fill="#a4a4a4"/><path d="M529 113h1v-1h1v1h-1z" fill="#ffffff"/><path d="M534 111h2v1h-1v1h-1z" fill="#a4a4a4"/><path d="M535 113h1v-1h1v1h-1z" fill="#ffffff"/><path d="M540 111h2v1h-1v1h-1z" fill="#a4a4a4"/><path d="M541 113h1v-1h1v1h-1z" fill="#ffffff"/><path d="M546 111h2v1h-1v1h-1z" fill="#a4a4a4"/><path d="M547 113h1v-1h1v1h-1z" fill="#ffffff"/><path d="M552 111h2v1h-1v1h-1z" fill="#a4a4a4"/><path d="M553 113h1v-1h1v1h-1z" fill="#ffffff"/><path d="M558 111h2v1h-1v1h-1z" fill="#a4a4a4"/><path d="M559 113h1v-1h1v1h-1z" fill="#ffffff"/><path d="M564 111h2v1h-1v1h-1z" fill="#a4a4a4"/><path d="M565 113h1v-1h1v1h-1z" fill="#ffffff"/><path d="M570 111h2v1h-1v1h-1z" fill="#a4a4a4"/><path d="M571 113h1v-1h1v1h-1z" fill="#ffffff"/><path d="M576 111h2v1h-1v1h-1z" fill="#a4a4a4"/><path d="M577 113h1v-1h1v1h-1z" fill="#ffffff"/><path d="M582 111h2v1h-1v1h-1z" fill="#a4a4a4"/><path d="M583 113h1v-1h1v1h-1z" fill="#ffffff"/><path d="M588 111h2v1h-1v1h-1z" fill="#a4a4a4"/><path d="M589 113h1v-1h1v1h-1z" fill="#ffffff"/><path d="M594 111h2v1h-1v1h-1z" fill="#a4a4a4"/><path d="M595 113h1v-1h1v1h-1z" fill="#ffffff"/><path d="M600 111h2v1h-1v1h-1z" fill="#a4a4a4"/><path d="M601 113h1v-1h1v1h-1z" fill="#ffffff"/><path d="M606 111h2v1h-1v1h-1z" fill="#a4a4a4"/><path d="M607 113h1v-1h1v1h-1z" fill="#ffffff"/><path d="M612 111h2v1h-1v1h-1z" fill="#a4a4a4"/><path d="M613 113h1v-1h1v1h-1z" fill="#ffffff"/><path d="M618 111h2v1h-1v1h-1z" fill="#a4a4a4"/><path d="M619 113h1v-1h1v1h-1z" fill="#ffffff"/><path d="M624 111h2v1h-1v1h-1z" fill="#a4a4a4"/><path d="M625 113h1v-1h1v1h-1z" fill="#ffffff"/><path d="M630 111h2v1h-1v1h-1z" fill="#a4a4a4"/><path d="M631 113h1v-1h1v1h-1z" fill="#ffffff"/><path d="M636 111h2v1h-1v1h-1z" fill="#a4a4a4"/><path d="M637 113h1v-1h1v1h-1z" fill="#ffffff"/><path d="M642.8 106.8 L649.2 112.2 M649.2 106.8 L642.8 112.2" stroke="#000" stroke-width="1.9" stroke-linecap="square" fill="none"/><rect x="282" y="271" width="370" height="3" fill="#ffffff"/><rect x="282" y="274" width="370" height="1" fill="#505050"/><rect x="651" y="271" width="1" height="3" fill="#909090"/><rect x="282" y="274" width="1" height="164" fill="#505050"/><rect x="283" y="286" width="369" height="1" fill="#ffffff"/><path d="M285 279h2v1h-1v1h-1z" fill="#a4a4a4"/><path d="M286 281h1v-1h1v1h-1z" fill="#ffffff"/><path d="M291 279h2v1h-1v1h-1z" fill="#a4a4a4"/><path d="M292 281h1v-1h1v1h-1z" fill="#ffffff"/><path d="M297 279h2v1h-1v1h-1z" fill="#a4a4a4"/><path d="M298 281h1v-1h1v1h-1z" fill="#ffffff"/><path d="M303 279h2v1h-1v1h-1z" fill="#a4a4a4"/><path d="M304 281h1v-1h1v1h-1z" fill="#ffffff"/><path d="M309 279h2v1h-1v1h-1z" fill="#a4a4a4"/><path d="M310 281h1v-1h1v1h-1z" fill="#ffffff"/><path d="M315 279h2v1h-1v1h-1z" fill="#a4a4a4"/><path d="M316 281h1v-1h1v1h-1z" fill="#ffffff"/><path d="M321 279h2v1h-1v1h-1z" fill="#a4a4a4"/><path d="M322 281h1v-1h1v1h-1z" fill="#ffffff"/><path d="M327 279h2v1h-1v1h-1z" fill="#a4a4a4"/><path d="M328 281h1v-1h1v1h-1z" fill="#ffffff"/><path d="M333 279h2v1h-1v1h-1z" fill="#a4a4a4"/><path d="M334 281h1v-1h1v1h-1z" fill="#ffffff"/><path d="M339 279h2v1h-1v1h-1z" fill="#a4a4a4"/><path d="M340 281h1v-1h1v1h-1z" fill="#ffffff"/><path d="M345 279h2v1h-1v1h-1z" fill="#a4a4a4"/><path d="M346 281h1v-1h1v1h-1z" fill="#ffffff"/><path d="M351 279h2v1h-1v1h-1z" fill="#a4a4a4"/><path d="M352 281h1v-1h1v1h-1z" fill="#ffffff"/><path d="M357 279h2v1h-1v1h-1z" fill="#a4a4a4"/><path d="M358 281h1v-1h1v1h-1z" fill="#ffffff"/><path d="M363 279h2v1h-1v1h-1z" fill="#a4a4a4"/><path d="M364 281h1v-1h1v1h-1z" fill="#ffffff"/><path d="M369 279h2v1h-1v1h-1z" fill="#a4a4a4"/><path d="M370 281h1v-1h1v1h-1z" fill="#ffffff"/><path d="M375 279h2v1h-1v1h-1z" fill="#a4a4a4"/><path d="M376 281h1v-1h1v1h-1z" fill="#ffffff"/><path d="M381 279h2v1h-1v1h-1z" fill="#a4a4a4"/><path d="M382 281h1v-1h1v1h-1z" fill="#ffffff"/><path d="M387 279h2v1h-1v1h-1z" fill="#a4a4a4"/><path d="M388 281h1v-1h1v1h-1z" fill="#ffffff"/><path d="M393 279h2v1h-1v1h-1z" fill="#a4a4a4"/><path d="M394 281h1v-1h1v1h-1z" fill="#ffffff"/><path d="M399 279h2v1h-1v1h-1z" fill="#a4a4a4"/><path d="M400 281h1v-1h1v1h-1z" fill="#ffffff"/><path d="M405 279h2v1h-1v1h-1z" fill="#a4a4a4"/><path d="M406 281h1v-1h1v1h-1z" fill="#ffffff"/><path d="M411 279h2v1h-1v1h-1z" fill="#a4a4a4"/><path d="M412 281h1v-1h1v1h-1z" fill="#ffffff"/><path d="M417 279h2v1h-1v1h-1z" fill="#a4a4a4"/><path d="M418 281h1v-1h1v1h-1z" fill="#ffffff"/><path d="M423 279h2v1h-1v1h-1z" fill="#a4a4a4"/><path d="M424 281h1v-1h1v1h-1z" fill="#ffffff"/><path d="M429 279h2v1h-1v1h-1z" fill="#a4a4a4"/><path d="M430 281h1v-1h1v1h-1z" fill="#ffffff"/><path d="M435 279h2v1h-1v1h-1z" fill="#a4a4a4"/><path d="M436 281h1v-1h1v1h-1z" fill="#ffffff"/><path d="M441 279h2v1h-1v1h-1z" fill="#a4a4a4"/><path d="M442 281h1v-1h1v1h-1z" fill="#ffffff"/><path d="M447 279h2v1h-1v1h-1z" fill="#a4a4a4"/><path d="M448 281h1v-1h1v1h-1z" fill="#ffffff"/><path d="M453 279h2v1h-1v1h-1z" fill="#a4a4a4"/><path d="M454 281h1v-1h1v1h-1z" fill="#ffffff"/><path d="M459 279h2v1h-1v1h-1z" fill="#a4a4a4"/><path d="M460 281h1v-1h1v1h-1z" fill="#ffffff"/><path d="M465 279h2v1h-1v1h-1z" fill="#a4a4a4"/><path d="M466 281h1v-1h1v1h-1z" fill="#ffffff"/><path d="M471 279h2v1h-1v1h-1z" fill="#a4a4a4"/><path d="M472 281h1v-1h1v1h-1z" fill="#ffffff"/><path d="M477 279h2v1h-1v1h-1z" fill="#a4a4a4"/><path d="M478 281h1v-1h1v1h-1z" fill="#ffffff"/><path d="M483 279h2v1h-1v1h-1z" fill="#a4a4a4"/><path d="M484 281h1v-1h1v1h-1z" fill="#ffffff"/><path d="M489 279h2v1h-1v1h-1z" fill="#a4a4a4"/><path d="M490 281h1v-1h1v1h-1z" fill="#ffffff"/><path d="M495 279h2v1h-1v1h-1z" fill="#a4a4a4"/><path d="M496 281h1v-1h1v1h-1z" fill="#ffffff"/><path d="M501 279h2v1h-1v1h-1z" fill="#a4a4a4"/><path d="M502 281h1v-1h1v1h-1z" fill="#ffffff"/><path d="M507 279h2v1h-1v1h-1z" fill="#a4a4a4"/><path d="M508 281h1v-1h1v1h-1z" fill="#ffffff"/><path d="M513 279h2v1h-1v1h-1z" fill="#a4a4a4"/><path d="M514 281h1v-1h1v1h-1z" fill="#ffffff"/><path d="M519 279h2v1h-1v1h-1z" fill="#a4a4a4"/><path d="M520 281h1v-1h1v1h-1z" fill="#ffffff"/><path d="M525 279h2v1h-1v1h-1z" fill="#a4a4a4"/><path d="M526 281h1v-1h1v1h-1z" fill="#ffffff"/><path d="M531 279h2v1h-1v1h-1z" fill="#a4a4a4"/><path d="M532 281h1v-1h1v1h-1z" fill="#ffffff"/><path d="M537 279h2v1h-1v1h-1z" fill="#a4a4a4"/><path d="M538 281h1v-1h1v1h-1z" fill="#ffffff"/><path d="M543 279h2v1h-1v1h-1z" fill="#a4a4a4"/><path d="M544 281h1v-1h1v1h-1z" fill="#ffffff"/><path d="M549 279h2v1h-1v1h-1z" fill="#a4a4a4"/><path d="M550 281h1v-1h1v1h-1z" fill="#ffffff"/><path d="M555 279h2v1h-1v1h-1z" fill="#a4a4a4"/><path d="M556 281h1v-1h1v1h-1z" fill="#ffffff"/><path d="M561 279h2v1h-1v1h-1z" fill="#a4a4a4"/><path d="M562 281h1v-1h1v1h-1z" fill="#ffffff"/><path d="M567 279h2v1h-1v1h-1z" fill="#a4a4a4"/><path d="M568 281h1v-1h1v1h-1z" fill="#ffffff"/><path d="M573 279h2v1h-1v1h-1z" fill="#a4a4a4"/><path d="M574 281h1v-1h1v1h-1z" fill="#ffffff"/><path d="M579 279h2v1h-1v1h-1z" fill="#a4a4a4"/><path d="M580 281h1v-1h1v1h-1z" fill="#ffffff"/><path d="M585 279h2v1h-1v1h-1z" fill="#a4a4a4"/><path d="M586 281h1v-1h1v1h-1z" fill="#ffffff"/><path d="M591 279h2v1h-1v1h-1z" fill="#a4a4a4"/><path d="M592 281h1v-1h1v1h-1z" fill="#ffffff"/><path d="M597 279h2v1h-1v1h-1z" fill="#a4a4a4"/><path d="M598 281h1v-1h1v1h-1z" fill="#ffffff"/><path d="M603 279h2v1h-1v1h-1z" fill="#a4a4a4"/><path d="M604 281h1v-1h1v1h-1z" fill="#ffffff"/><path d="M609 279h2v1h-1v1h-1z" fill="#a4a4a4"/><path d="M610 281h1v-1h1v1h-1z" fill="#ffffff"/><path d="M615 279h2v1h-1v1h-1z" fill="#a4a4a4"/><path d="M616 281h1v-1h1v1h-1z" fill="#ffffff"/><path d="M621 279h2v1h-1v1h-1z" fill="#a4a4a4"/><path d="M622 281h1v-1h1v1h-1z" fill="#ffffff"/><path d="M627 279h2v1h-1v1h-1z" fill="#a4a4a4"/><path d="M628 281h1v-1h1v1h-1z" fill="#ffffff"/><path d="M633 279h2v1h-1v1h-1z" fill="#a4a4a4"/><path d="M634 281h1v-1h1v1h-1z" fill="#ffffff"/><path d="M288 282h2v1h-1v1h-1z" fill="#a4a4a4"/><path d="M289 284h1v-1h1v1h-1z" fill="#ffffff"/><path d="M294 282h2v1h-1v1h-1z" fill="#a4a4a4"/><path d="M295 284h1v-1h1v1h-1z" fill="#ffffff"/><path d="M300 282h2v1h-1v1h-1z" fill="#a4a4a4"/><path d="M301 284h1v-1h1v1h-1z" fill="#ffffff"/><path d="M306 282h2v1h-1v1h-1z" fill="#a4a4a4"/><path d="M307 284h1v-1h1v1h-1z" fill="#ffffff"/><path d="M312 282h2v1h-1v1h-1z" fill="#a4a4a4"/><path d="M313 284h1v-1h1v1h-1z" fill="#ffffff"/><path d="M318 282h2v1h-1v1h-1z" fill="#a4a4a4"/><path d="M319 284h1v-1h1v1h-1z" fill="#ffffff"/><path d="M324 282h2v1h-1v1h-1z" fill="#a4a4a4"/><path d="M325 284h1v-1h1v1h-1z" fill="#ffffff"/><path d="M330 282h2v1h-1v1h-1z" fill="#a4a4a4"/><path d="M331 284h1v-1h1v1h-1z" fill="#ffffff"/><path d="M336 282h2v1h-1v1h-1z" fill="#a4a4a4"/><path d="M337 284h1v-1h1v1h-1z" fill="#ffffff"/><path d="M342 282h2v1h-1v1h-1z" fill="#a4a4a4"/><path d="M343 284h1v-1h1v1h-1z" fill="#ffffff"/><path d="M348 282h2v1h-1v1h-1z" fill="#a4a4a4"/><path d="M349 284h1v-1h1v1h-1z" fill="#ffffff"/><path d="M354 282h2v1h-1v1h-1z" fill="#a4a4a4"/><path d="M355 284h1v-1h1v1h-1z" fill="#ffffff"/><path d="M360 282h2v1h-1v1h-1z" fill="#a4a4a4"/><path d="M361 284h1v-1h1v1h-1z" fill="#ffffff"/><path d="M366 282h2v1h-1v1h-1z" fill="#a4a4a4"/><path d="M367 284h1v-1h1v1h-1z" fill="#ffffff"/><path d="M372 282h2v1h-1v1h-1z" fill="#a4a4a4"/><path d="M373 284h1v-1h1v1h-1z" fill="#ffffff"/><path d="M378 282h2v1h-1v1h-1z" fill="#a4a4a4"/><path d="M379 284h1v-1h1v1h-1z" fill="#ffffff"/><path d="M384 282h2v1h-1v1h-1z" fill="#a4a4a4"/><path d="M385 284h1v-1h1v1h-1z" fill="#ffffff"/><path d="M390 282h2v1h-1v1h-1z" fill="#a4a4a4"/><path d="M391 284h1v-1h1v1h-1z" fill="#ffffff"/><path d="M396 282h2v1h-1v1h-1z" fill="#a4a4a4"/><path d="M397 284h1v-1h1v1h-1z" fill="#ffffff"/><path d="M402 282h2v1h-1v1h-1z" fill="#a4a4a4"/><path d="M403 284h1v-1h1v1h-1z" fill="#ffffff"/><path d="M408 282h2v1h-1v1h-1z" fill="#a4a4a4"/><path d="M409 284h1v-1h1v1h-1z" fill="#ffffff"/><path d="M414 282h2v1h-1v1h-1z" fill="#a4a4a4"/><path d="M415 284h1v-1h1v1h-1z" fill="#ffffff"/><path d="M420 282h2v1h-1v1h-1z" fill="#a4a4a4"/><path d="M421 284h1v-1h1v1h-1z" fill="#ffffff"/><path d="M426 282h2v1h-1v1h-1z" fill="#a4a4a4"/><path d="M427 284h1v-1h1v1h-1z" fill="#ffffff"/><path d="M432 282h2v1h-1v1h-1z" fill="#a4a4a4"/><path d="M433 284h1v-1h1v1h-1z" fill="#ffffff"/><path d="M438 282h2v1h-1v1h-1z" fill="#a4a4a4"/><path d="M439 284h1v-1h1v1h-1z" fill="#ffffff"/><path d="M444 282h2v1h-1v1h-1z" fill="#a4a4a4"/><path d="M445 284h1v-1h1v1h-1z" fill="#ffffff"/><path d="M450 282h2v1h-1v1h-1z" fill="#a4a4a4"/><path d="M451 284h1v-1h1v1h-1z" fill="#ffffff"/><path d="M456 282h2v1h-1v1h-1z" fill="#a4a4a4"/><path d="M457 284h1v-1h1v1h-1z" fill="#ffffff"/><path d="M462 282h2v1h-1v1h-1z" fill="#a4a4a4"/><path d="M463 284h1v-1h1v1h-1z" fill="#ffffff"/><path d="M468 282h2v1h-1v1h-1z" fill="#a4a4a4"/><path d="M469 284h1v-1h1v1h-1z" fill="#ffffff"/><path d="M474 282h2v1h-1v1h-1z" fill="#a4a4a4"/><path d="M475 284h1v-1h1v1h-1z" fill="#ffffff"/><path d="M480 282h2v1h-1v1h-1z" fill="#a4a4a4"/><path d="M481 284h1v-1h1v1h-1z" fill="#ffffff"/><path d="M486 282h2v1h-1v1h-1z" fill="#a4a4a4"/><path d="M487 284h1v-1h1v1h-1z" fill="#ffffff"/><path d="M492 282h2v1h-1v1h-1z" fill="#a4a4a4"/><path d="M493 284h1v-1h1v1h-1z" fill="#ffffff"/><path d="M498 282h2v1h-1v1h-1z" fill="#a4a4a4"/><path d="M499 284h1v-1h1v1h-1z" fill="#ffffff"/><path d="M504 282h2v1h-1v1h-1z" fill="#a4a4a4"/><path d="M505 284h1v-1h1v1h-1z" fill="#ffffff"/><path d="M510 282h2v1h-1v1h-1z" fill="#a4a4a4"/><path d="M511 284h1v-1h1v1h-1z" fill="#ffffff"/><path d="M516 282h2v1h-1v1h-1z" fill="#a4a4a4"/><path d="M517 284h1v-1h1v1h-1z" fill="#ffffff"/><path d="M522 282h2v1h-1v1h-1z" fill="#a4a4a4"/><path d="M523 284h1v-1h1v1h-1z" fill="#ffffff"/><path d="M528 282h2v1h-1v1h-1z" fill="#a4a4a4"/><path d="M529 284h1v-1h1v1h-1z" fill="#ffffff"/><path d="M534 282h2v1h-1v1h-1z" fill="#a4a4a4"/><path d="M535 284h1v-1h1v1h-1z" fill="#ffffff"/><path d="M540 282h2v1h-1v1h-1z" fill="#a4a4a4"/><path d="M541 284h1v-1h1v1h-1z" fill="#ffffff"/><path d="M546 282h2v1h-1v1h-1z" fill="#a4a4a4"/><path d="M547 284h1v-1h1v1h-1z" fill="#ffffff"/><path d="M552 282h2v1h-1v1h-1z" fill="#a4a4a4"/><path d="M553 284h1v-1h1v1h-1z" fill="#ffffff"/><path d="M558 282h2v1h-1v1h-1z" fill="#a4a4a4"/><path d="M559 284h1v-1h1v1h-1z" fill="#ffffff"/><path d="M564 282h2v1h-1v1h-1z" fill="#a4a4a4"/><path d="M565 284h1v-1h1v1h-1z" fill="#ffffff"/><path d="M570 282h2v1h-1v1h-1z" fill="#a4a4a4"/><path d="M571 284h1v-1h1v1h-1z" fill="#ffffff"/><path d="M576 282h2v1h-1v1h-1z" fill="#a4a4a4"/><path d="M577 284h1v-1h1v1h-1z" fill="#ffffff"/><path d="M582 282h2v1h-1v1h-1z" fill="#a4a4a4"/><path d="M583 284h1v-1h1v1h-1z" fill="#ffffff"/><path d="M588 282h2v1h-1v1h-1z" fill="#a4a4a4"/><path d="M589 284h1v-1h1v1h-1z" fill="#ffffff"/><path d="M594 282h2v1h-1v1h-1z" fill="#a4a4a4"/><path d="M595 284h1v-1h1v1h-1z" fill="#ffffff"/><path d="M600 282h2v1h-1v1h-1z" fill="#a4a4a4"/><path d="M601 284h1v-1h1v1h-1z" fill="#ffffff"/><path d="M606 282h2v1h-1v1h-1z" fill="#a4a4a4"/><path d="M607 284h1v-1h1v1h-1z" fill="#ffffff"/><path d="M612 282h2v1h-1v1h-1z" fill="#a4a4a4"/><path d="M613 284h1v-1h1v1h-1z" fill="#ffffff"/><path d="M618 282h2v1h-1v1h-1z" fill="#a4a4a4"/><path d="M619 284h1v-1h1v1h-1z" fill="#ffffff"/><path d="M624 282h2v1h-1v1h-1z" fill="#a4a4a4"/><path d="M625 284h1v-1h1v1h-1z" fill="#ffffff"/><path d="M630 282h2v1h-1v1h-1z" fill="#a4a4a4"/><path d="M631 284h1v-1h1v1h-1z" fill="#ffffff"/><path d="M636 282h2v1h-1v1h-1z" fill="#a4a4a4"/><path d="M637 284h1v-1h1v1h-1z" fill="#ffffff"/><path d="M642.8 277.8 L649.2 283.2 M649.2 277.8 L642.8 283.2" stroke="#000" stroke-width="1.9" stroke-linecap="square" fill="none"/><rect x="130" y="104" width="3" height="334" fill="#f8f8f8"/><rect x="279" y="104" width="3" height="334" fill="#f8f8f8"/></svg><div class="a" style="left:133px;top:116px;width:146px;height:322px;background:#000"></div><div class="a" style="left:283px;top:116px;width:369px;height:155px;background:#000"></div><div class="a" style="left:283px;top:287px;width:369px;height:151px;background:#000"></div><svg class="a" style="left:0;top:0" width="656" height="466" shape-rendering="crispEdges"><rect x="133" y="148" width="146" height="1" fill="#606060"/><rect x="266" y="116" width="1" height="322" fill="#606060"/><path fill="#ffff00" d="M411 120h3v1h-3zM410 121h1v1h-1zM414 121h1v1h-1zM409 122h1v1h-1zM415 122h1v1h-1zM408 123h1v1h-1zM415 123h1v1h-1zM426 123h1v1h-1zM405 124h6v1h-6zM416 124h1v1h-1zM425 124h1v1h-1zM375 125h2v1h-2zM382 125h4v1h-4zM404 125h1v1h-1zM407 125h1v1h-1zM411 125h4v1h-4zM417 125h1v1h-1zM425 125h1v1h-1zM372 126h3v1h-3zM376 126h3v1h-3zM380 126h9v1h-9zM402 126h2v1h-2zM405 126h4v1h-4zM413 126h7v1h-7zM421 126h5v1h-5zM365 127h1v1h-1zM368 127h4v1h-4zM373 127h16v1h-16zM402 127h1v1h-1zM404 127h1v1h-1zM406 127h21v1h-21zM361 128h8v1h-8zM370 128h20v1h-20zM401 128h1v1h-1zM403 128h24v1h-24zM358 129h33v1h-33zM400 129h27v1h-27zM358 130h33v1h-33zM400 130h27v1h-27zM358 131h36v1h-36zM399 131h28v1h-28zM358 132h36v1h-36zM398 132h29v1h-29zM358 133h37v1h-37zM398 133h29v1h-29zM358 134h38v1h-38zM397 134h30v1h-30zM358 135h69v1h-69zM358 136h24v1h-24zM383 136h1v1h-1zM386 136h23v1h-23zM410 136h6v1h-6zM417 136h3v1h-3zM421 136h3v1h-3zM426 136h1v1h-1zM358 137h17v1h-17zM376 137h1v1h-1zM379 137h4v1h-4zM384 137h1v1h-1zM386 137h23v1h-23zM410 137h2v1h-2zM414 137h1v1h-1zM416 137h1v1h-1zM419 137h1v1h-1zM422 137h1v1h-1zM424 137h1v1h-1zM358 138h2v1h-2zM361 138h5v1h-5zM368 138h5v1h-5zM375 138h3v1h-3zM380 138h1v1h-1zM382 138h2v1h-2zM385 138h1v1h-1zM387 138h18v1h-18zM406 138h1v1h-1zM409 138h1v1h-1zM411 138h6v1h-6zM420 138h7v1h-7zM361 139h2v1h-2zM365 139h1v1h-1zM367 139h2v1h-2zM371 139h1v1h-1zM374 139h2v1h-2zM378 139h2v1h-2zM382 139h1v1h-1zM388 139h18v1h-18zM407 139h4v1h-4zM412 139h2v1h-2zM415 139h2v1h-2zM418 139h2v1h-2zM421 139h3v1h-3zM426 139h1v1h-1zM360 140h1v1h-1zM362 140h6v1h-6zM369 140h2v1h-2zM372 140h2v1h-2zM388 140h22v1h-22zM413 140h2v1h-2zM417 140h1v1h-1zM420 140h1v1h-1zM358 141h1v1h-1zM360 141h3v1h-3zM364 141h1v1h-1zM366 141h1v1h-1zM372 141h1v1h-1zM389 141h1v1h-1zM391 141h12v1h-12zM404 141h5v1h-5zM412 141h1v1h-1zM358 142h2v1h-2zM361 142h1v1h-1zM390 142h9v1h-9zM400 142h2v1h-2zM403 142h2v1h-2zM408 142h1v1h-1zM412 142h1v1h-1zM359 143h2v1h-2zM390 143h1v1h-1zM392 143h1v1h-1zM394 143h5v1h-5zM400 143h4v1h-4zM408 143h1v1h-1zM411 143h1v1h-1zM391 144h7v1h-7zM400 144h2v1h-2zM403 144h1v1h-1zM409 144h1v1h-1zM411 144h1v1h-1zM392 145h2v1h-2zM395 145h2v1h-2zM399 145h1v1h-1zM402 145h1v1h-1zM409 145h1v1h-1zM411 145h1v1h-1zM393 146h4v1h-4zM398 146h2v1h-2zM402 146h1v1h-1zM410 146h1v1h-1zM393 147h1v1h-1zM395 147h1v1h-1zM397 147h2v1h-2zM410 147h1v1h-1zM396 148h1v1h-1zM420 152h1v1h-1zM419 153h2v1h-2zM419 154h1v1h-1zM421 154h1v1h-1zM418 155h1v1h-1zM421 155h1v1h-1zM381 156h1v1h-1zM417 156h1v1h-1zM422 156h1v1h-1zM380 157h1v1h-1zM382 157h1v1h-1zM416 157h1v1h-1zM422 157h1v1h-1zM379 158h3v1h-3zM383 158h1v1h-1zM416 158h1v1h-1zM423 158h1v1h-1zM375 159h2v1h-2zM378 159h7v1h-7zM415 159h1v1h-1zM423 159h1v1h-1zM374 160h1v1h-1zM376 160h10v1h-10zM404 160h4v1h-4zM414 160h1v1h-1zM417 160h1v1h-1zM424 160h1v1h-1zM373 161h13v1h-13zM402 161h2v1h-2zM408 161h3v1h-3zM416 161h1v1h-1zM418 161h1v1h-1zM424 161h1v1h-1zM369 162h16v1h-16zM386 162h1v1h-1zM401 162h1v1h-1zM408 162h2v1h-2zM411 162h2v1h-2zM415 162h2v1h-2zM418 162h5v1h-5zM425 162h2v1h-2zM369 163h18v1h-18zM401 163h1v1h-1zM408 163h1v1h-1zM411 163h16v1h-16zM367 164h21v1h-21zM400 164h1v1h-1zM403 164h24v1h-24zM362 165h26v1h-26zM399 165h1v1h-1zM402 165h25v1h-25zM358 166h30v1h-30zM399 166h1v1h-1zM402 166h25v1h-25zM259 167h3v1h-3zM358 167h31v1h-31zM398 167h1v1h-1zM401 167h26v1h-26zM265 168h1v1h-1zM358 168h23v1h-23zM382 168h7v1h-7zM398 168h29v1h-29zM358 169h20v1h-20zM383 169h6v1h-6zM397 169h30v1h-30zM358 170h17v1h-17zM383 170h7v1h-7zM397 170h30v1h-30zM260 171h1v1h-1zM263 171h1v1h-1zM265 171h1v1h-1zM270 171h1v1h-1zM358 171h16v1h-16zM384 171h6v1h-6zM397 171h30v1h-30zM254 172h1v1h-1zM263 172h1v1h-1zM267 172h1v1h-1zM269 172h1v1h-1zM358 172h14v1h-14zM384 172h6v1h-6zM396 172h31v1h-31zM257 173h1v1h-1zM259 173h1v1h-1zM267 173h1v1h-1zM274 173h1v1h-1zM278 173h1v1h-1zM358 173h12v1h-12zM385 173h6v1h-6zM396 173h13v1h-13zM410 173h1v1h-1zM416 173h1v1h-1zM421 173h1v1h-1zM423 173h2v1h-2zM243 174h1v1h-1zM255 174h1v1h-1zM260 174h1v1h-1zM267 174h1v1h-1zM358 174h9v1h-9zM368 174h1v1h-1zM385 174h6v1h-6zM396 174h9v1h-9zM407 174h1v1h-1zM410 174h1v1h-1zM416 174h1v1h-1zM420 174h1v1h-1zM423 174h2v1h-2zM248 175h1v1h-1zM260 175h1v1h-1zM262 175h1v1h-1zM266 175h2v1h-2zM272 175h1v1h-1zM274 175h1v1h-1zM358 175h8v1h-8zM386 175h5v1h-5zM395 175h10v1h-10zM409 175h1v1h-1zM417 175h1v1h-1zM419 175h1v1h-1zM423 175h1v1h-1zM425 175h2v1h-2zM256 176h1v1h-1zM261 176h1v1h-1zM263 176h1v1h-1zM267 176h1v1h-1zM273 176h1v1h-1zM358 176h1v1h-1zM386 176h6v1h-6zM395 176h8v1h-8zM404 176h1v1h-1zM408 176h1v1h-1zM418 176h1v1h-1zM423 176h1v1h-1zM259 177h1v1h-1zM264 177h1v1h-1zM267 177h1v1h-1zM271 177h1v1h-1zM274 177h2v1h-2zM386 177h4v1h-4zM391 177h2v1h-2zM394 177h8v1h-8zM405 177h3v1h-3zM423 177h1v1h-1zM255 178h1v1h-1zM258 178h1v1h-1zM262 178h2v1h-2zM265 178h1v1h-1zM270 178h1v1h-1zM274 178h1v1h-1zM387 178h15v1h-15zM422 178h1v1h-1zM260 179h1v1h-1zM267 179h1v1h-1zM276 179h1v1h-1zM387 179h6v1h-6zM394 179h8v1h-8zM422 179h1v1h-1zM261 180h1v1h-1zM266 180h2v1h-2zM387 180h14v1h-14zM422 180h1v1h-1zM257 181h1v1h-1zM260 181h1v1h-1zM263 181h1v1h-1zM269 181h1v1h-1zM387 181h14v1h-14zM421 181h1v1h-1zM253 182h2v1h-2zM258 182h1v1h-1zM261 182h1v1h-1zM263 182h1v1h-1zM388 182h12v1h-12zM421 182h1v1h-1zM256 183h2v1h-2zM262 183h1v1h-1zM273 183h1v1h-1zM388 183h12v1h-12zM421 183h1v1h-1zM256 184h3v1h-3zM262 184h4v1h-4zM271 184h2v1h-2zM388 184h11v1h-11zM421 184h1v1h-1zM251 185h1v1h-1zM253 185h1v1h-1zM257 185h2v1h-2zM261 185h3v1h-3zM266 185h1v1h-1zM273 185h1v1h-1zM389 185h10v1h-10zM420 185h1v1h-1zM253 186h1v1h-1zM263 186h1v1h-1zM267 186h1v1h-1zM389 186h9v1h-9zM420 186h1v1h-1zM256 187h1v1h-1zM258 187h2v1h-2zM262 187h1v1h-1zM264 187h1v1h-1zM389 187h8v1h-8zM421 187h1v1h-1zM250 188h1v1h-1zM253 188h1v1h-1zM256 188h4v1h-4zM261 188h5v1h-5zM267 188h1v1h-1zM269 188h1v1h-1zM271 188h1v1h-1zM274 188h1v1h-1zM390 188h7v1h-7zM422 188h1v1h-1zM252 189h1v1h-1zM254 189h2v1h-2zM258 189h1v1h-1zM261 189h2v1h-2zM268 189h2v1h-2zM390 189h6v1h-6zM423 189h1v1h-1zM248 190h1v1h-1zM258 190h1v1h-1zM261 190h1v1h-1zM265 190h3v1h-3zM392 190h4v1h-4zM424 190h1v1h-1zM248 191h1v1h-1zM250 191h1v1h-1zM254 191h2v1h-2zM257 191h1v1h-1zM261 191h2v1h-2zM264 191h1v1h-1zM267 191h1v1h-1zM392 191h1v1h-1zM394 191h1v1h-1zM249 192h4v1h-4zM260 192h1v1h-1zM263 192h1v1h-1zM265 192h1v1h-1zM268 192h1v1h-1zM252 193h1v1h-1zM256 193h3v1h-3zM252 194h2v1h-2zM257 194h1v1h-1zM260 194h1v1h-1zM262 194h1v1h-1zM270 194h1v1h-1zM249 195h2v1h-2zM253 195h4v1h-4zM258 195h3v1h-3zM263 195h1v1h-1zM265 195h1v1h-1zM268 195h2v1h-2zM410 195h4v1h-4zM415 195h4v1h-4zM426 195h1v1h-1zM247 196h1v1h-1zM253 196h4v1h-4zM259 196h5v1h-5zM268 196h1v1h-1zM270 196h1v1h-1zM272 196h1v1h-1zM409 196h1v1h-1zM414 196h1v1h-1zM419 196h1v1h-1zM425 196h1v1h-1zM247 197h2v1h-2zM251 197h1v1h-1zM254 197h4v1h-4zM260 197h1v1h-1zM262 197h3v1h-3zM408 197h1v1h-1zM413 197h3v1h-3zM418 197h3v1h-3zM425 197h1v1h-1zM245 198h7v1h-7zM253 198h2v1h-2zM256 198h1v1h-1zM260 198h1v1h-1zM268 198h1v1h-1zM385 198h2v1h-2zM406 198h1v1h-1zM408 198h1v1h-1zM412 198h2v1h-2zM415 198h2v1h-2zM418 198h1v1h-1zM420 198h1v1h-1zM424 198h1v1h-1zM248 199h2v1h-2zM252 199h1v1h-1zM256 199h1v1h-1zM260 199h2v1h-2zM269 199h1v1h-1zM378 199h1v1h-1zM381 199h4v1h-4zM386 199h5v1h-5zM403 199h3v1h-3zM407 199h4v1h-4zM412 199h2v1h-2zM415 199h4v1h-4zM420 199h6v1h-6zM247 200h1v1h-1zM250 200h1v1h-1zM255 200h1v1h-1zM257 200h1v1h-1zM260 200h2v1h-2zM264 200h1v1h-1zM273 200h1v1h-1zM275 200h1v1h-1zM373 200h5v1h-5zM379 200h13v1h-13zM402 200h1v1h-1zM405 200h3v1h-3zM410 200h17v1h-17zM244 201h1v1h-1zM246 201h1v1h-1zM249 201h1v1h-1zM254 201h1v1h-1zM256 201h3v1h-3zM262 201h1v1h-1zM264 201h1v1h-1zM266 201h1v1h-1zM360 201h2v1h-2zM368 201h26v1h-26zM400 201h2v1h-2zM403 201h24v1h-24zM236 202h1v1h-1zM246 202h2v1h-2zM249 202h2v1h-2zM255 202h1v1h-1zM257 202h4v1h-4zM262 202h1v1h-1zM266 202h1v1h-1zM358 202h2v1h-2zM361 202h32v1h-32zM394 202h30v1h-30zM425 202h2v1h-2zM240 203h1v1h-1zM242 203h1v1h-1zM244 203h1v1h-1zM247 203h1v1h-1zM249 203h2v1h-2zM252 203h4v1h-4zM258 203h1v1h-1zM260 203h5v1h-5zM266 203h1v1h-1zM358 203h36v1h-36zM398 203h29v1h-29zM235 204h1v1h-1zM241 204h3v1h-3zM248 204h5v1h-5zM258 204h1v1h-1zM260 204h1v1h-1zM271 204h1v1h-1zM358 204h37v1h-37zM397 204h30v1h-30zM242 205h3v1h-3zM247 205h4v1h-4zM252 205h5v1h-5zM261 205h2v1h-2zM264 205h1v1h-1zM267 205h1v1h-1zM358 205h69v1h-69zM232 206h1v1h-1zM245 206h1v1h-1zM247 206h1v1h-1zM249 206h4v1h-4zM256 206h2v1h-2zM261 206h3v1h-3zM265 206h1v1h-1zM268 206h1v1h-1zM270 206h1v1h-1zM358 206h69v1h-69zM242 207h2v1h-2zM248 207h2v1h-2zM253 207h5v1h-5zM259 207h1v1h-1zM261 207h3v1h-3zM267 207h2v1h-2zM358 207h69v1h-69zM241 208h3v1h-3zM247 208h2v1h-2zM250 208h5v1h-5zM256 208h8v1h-8zM358 208h69v1h-69zM231 209h1v1h-1zM242 209h1v1h-1zM247 209h2v1h-2zM250 209h2v1h-2zM253 209h10v1h-10zM266 209h1v1h-1zM268 209h1v1h-1zM358 209h69v1h-69zM230 210h2v1h-2zM239 210h1v1h-1zM242 210h2v1h-2zM245 210h2v1h-2zM248 210h2v1h-2zM252 210h1v1h-1zM254 210h2v1h-2zM259 210h1v1h-1zM264 210h1v1h-1zM358 210h20v1h-20zM379 210h48v1h-48zM234 211h1v1h-1zM238 211h3v1h-3zM242 211h1v1h-1zM246 211h1v1h-1zM248 211h1v1h-1zM251 211h2v1h-2zM254 211h2v1h-2zM257 211h2v1h-2zM260 211h2v1h-2zM263 211h1v1h-1zM269 211h1v1h-1zM272 211h1v1h-1zM358 211h22v1h-22zM384 211h3v1h-3zM388 211h15v1h-15zM405 211h22v1h-22zM229 212h1v1h-1zM236 212h1v1h-1zM239 212h1v1h-1zM242 212h8v1h-8zM251 212h1v1h-1zM254 212h5v1h-5zM261 212h2v1h-2zM270 212h1v1h-1zM358 212h17v1h-17zM377 212h2v1h-2zM380 212h1v1h-1zM382 212h2v1h-2zM389 212h14v1h-14zM404 212h2v1h-2zM408 212h1v1h-1zM414 212h1v1h-1zM416 212h3v1h-3zM421 212h1v1h-1zM424 212h1v1h-1zM426 212h1v1h-1zM229 213h1v1h-1zM232 213h2v1h-2zM235 213h1v1h-1zM238 213h1v1h-1zM241 213h2v1h-2zM245 213h1v1h-1zM247 213h1v1h-1zM250 213h4v1h-4zM255 213h3v1h-3zM259 213h1v1h-1zM266 213h1v1h-1zM270 213h1v1h-1zM358 213h6v1h-6zM365 213h2v1h-2zM368 213h1v1h-1zM370 213h3v1h-3zM376 213h2v1h-2zM381 213h1v1h-1zM390 213h12v1h-12zM403 213h2v1h-2zM406 213h2v1h-2zM409 213h1v1h-1zM411 213h1v1h-1zM413 213h1v1h-1zM417 213h1v1h-1zM419 213h1v1h-1zM421 213h3v1h-3zM425 213h1v1h-1zM221 214h1v1h-1zM235 214h1v1h-1zM246 214h1v1h-1zM249 214h4v1h-4zM255 214h3v1h-3zM259 214h2v1h-2zM262 214h1v1h-1zM265 214h1v1h-1zM269 214h1v1h-1zM359 214h2v1h-2zM363 214h5v1h-5zM370 214h1v1h-1zM372 214h4v1h-4zM377 214h1v1h-1zM392 214h8v1h-8zM401 214h3v1h-3zM405 214h1v1h-1zM409 214h2v1h-2zM412 214h1v1h-1zM420 214h1v1h-1zM422 214h1v1h-1zM426 214h1v1h-1zM223 215h1v1h-1zM232 215h2v1h-2zM236 215h1v1h-1zM238 215h2v1h-2zM241 215h2v1h-2zM244 215h1v1h-1zM246 215h1v1h-1zM248 215h1v1h-1zM251 215h2v1h-2zM254 215h1v1h-1zM260 215h1v1h-1zM262 215h1v1h-1zM267 215h1v1h-1zM360 215h2v1h-2zM363 215h1v1h-1zM371 215h1v1h-1zM393 215h6v1h-6zM402 215h1v1h-1zM228 216h2v1h-2zM231 216h1v1h-1zM233 216h1v1h-1zM236 216h1v1h-1zM238 216h3v1h-3zM243 216h1v1h-1zM245 216h1v1h-1zM249 216h2v1h-2zM252 216h5v1h-5zM259 216h2v1h-2zM263 216h1v1h-1zM359 216h1v1h-1zM362 216h1v1h-1zM394 216h4v1h-4zM402 216h1v1h-1zM222 217h1v1h-1zM232 217h2v1h-2zM236 217h2v1h-2zM239 217h2v1h-2zM242 217h3v1h-3zM246 217h1v1h-1zM249 217h3v1h-3zM253 217h2v1h-2zM256 217h1v1h-1zM260 217h1v1h-1zM262 217h1v1h-1zM358 217h1v1h-1zM394 217h1v1h-1zM396 217h1v1h-1zM400 217h2v1h-2zM231 218h3v1h-3zM235 218h1v1h-1zM238 218h2v1h-2zM242 218h3v1h-3zM246 218h1v1h-1zM249 218h2v1h-2zM252 218h1v1h-1zM254 218h1v1h-1zM258 218h2v1h-2zM264 218h2v1h-2zM274 218h1v1h-1zM395 218h2v1h-2zM399 218h1v1h-1zM215 219h1v1h-1zM233 219h3v1h-3zM237 219h3v1h-3zM241 219h2v1h-2zM244 219h1v1h-1zM246 219h5v1h-5zM253 219h1v1h-1zM255 219h1v1h-1zM257 219h1v1h-1zM397 219h2v1h-2zM238 220h1v1h-1zM241 220h2v1h-2zM244 220h1v1h-1zM247 220h5v1h-5zM255 220h4v1h-4zM261 220h1v1h-1zM397 220h1v1h-1zM229 221h3v1h-3zM239 221h3v1h-3zM243 221h1v1h-1zM246 221h1v1h-1zM250 221h1v1h-1zM252 221h3v1h-3zM256 221h2v1h-2zM262 221h1v1h-1zM228 222h1v1h-1zM233 222h1v1h-1zM238 222h1v1h-1zM243 222h1v1h-1zM245 222h3v1h-3zM250 222h1v1h-1zM252 222h4v1h-4zM257 222h1v1h-1zM259 222h3v1h-3zM263 222h1v1h-1zM266 222h1v1h-1zM225 223h1v1h-1zM232 223h7v1h-7zM240 223h2v1h-2zM243 223h3v1h-3zM249 223h3v1h-3zM253 223h1v1h-1zM256 223h2v1h-2zM261 223h1v1h-1zM264 223h1v1h-1zM221 224h2v1h-2zM230 224h1v1h-1zM235 224h1v1h-1zM237 224h2v1h-2zM243 224h2v1h-2zM246 224h2v1h-2zM249 224h4v1h-4zM254 224h1v1h-1zM258 224h3v1h-3zM262 224h2v1h-2zM227 225h1v1h-1zM231 225h1v1h-1zM235 225h2v1h-2zM238 225h1v1h-1zM240 225h3v1h-3zM244 225h6v1h-6zM251 225h2v1h-2zM255 225h1v1h-1zM231 226h1v1h-1zM233 226h2v1h-2zM237 226h2v1h-2zM240 226h2v1h-2zM243 226h1v1h-1zM245 226h2v1h-2zM249 226h1v1h-1zM251 226h2v1h-2zM255 226h2v1h-2zM260 226h3v1h-3zM265 226h1v1h-1zM228 227h1v1h-1zM233 227h2v1h-2zM237 227h1v1h-1zM239 227h1v1h-1zM242 227h2v1h-2zM247 227h1v1h-1zM249 227h1v1h-1zM251 227h1v1h-1zM253 227h5v1h-5zM262 227h1v1h-1zM232 228h7v1h-7zM240 228h5v1h-5zM247 228h1v1h-1zM249 228h1v1h-1zM251 228h1v1h-1zM253 228h2v1h-2zM256 228h2v1h-2zM259 228h2v1h-2zM220 229h1v1h-1zM223 229h1v1h-1zM226 229h1v1h-1zM229 229h1v1h-1zM231 229h1v1h-1zM233 229h4v1h-4zM238 229h2v1h-2zM242 229h1v1h-1zM245 229h2v1h-2zM248 229h3v1h-3zM252 229h1v1h-1zM254 229h1v1h-1zM256 229h3v1h-3zM223 230h1v1h-1zM225 230h1v1h-1zM227 230h1v1h-1zM229 230h1v1h-1zM236 230h1v1h-1zM239 230h4v1h-4zM244 230h1v1h-1zM247 230h4v1h-4zM253 230h2v1h-2zM256 230h2v1h-2zM260 230h1v1h-1zM264 230h2v1h-2zM270 230h1v1h-1zM418 230h3v1h-3zM227 231h1v1h-1zM234 231h1v1h-1zM238 231h3v1h-3zM245 231h1v1h-1zM247 231h3v1h-3zM251 231h2v1h-2zM255 231h2v1h-2zM258 231h2v1h-2zM261 231h1v1h-1zM263 231h2v1h-2zM382 231h2v1h-2zM407 231h3v1h-3zM417 231h1v1h-1zM421 231h1v1h-1zM214 232h1v1h-1zM217 232h1v1h-1zM220 232h1v1h-1zM228 232h2v1h-2zM232 232h1v1h-1zM238 232h3v1h-3zM242 232h5v1h-5zM248 232h1v1h-1zM250 232h5v1h-5zM256 232h2v1h-2zM259 232h1v1h-1zM381 232h1v1h-1zM384 232h2v1h-2zM403 232h2v1h-2zM406 232h1v1h-1zM410 232h1v1h-1zM417 232h1v1h-1zM422 232h1v1h-1zM224 233h1v1h-1zM232 233h2v1h-2zM235 233h1v1h-1zM238 233h7v1h-7zM246 233h5v1h-5zM252 233h4v1h-4zM378 233h1v1h-1zM380 233h1v1h-1zM382 233h6v1h-6zM402 233h1v1h-1zM405 233h2v1h-2zM411 233h1v1h-1zM413 233h2v1h-2zM416 233h2v1h-2zM423 233h1v1h-1zM227 234h1v1h-1zM230 234h1v1h-1zM236 234h2v1h-2zM239 234h2v1h-2zM243 234h1v1h-1zM248 234h2v1h-2zM252 234h2v1h-2zM255 234h2v1h-2zM260 234h2v1h-2zM373 234h3v1h-3zM377 234h1v1h-1zM379 234h10v1h-10zM402 234h1v1h-1zM405 234h3v1h-3zM410 234h17v1h-17zM219 235h1v1h-1zM225 235h1v1h-1zM227 235h1v1h-1zM230 235h4v1h-4zM235 235h5v1h-5zM242 235h2v1h-2zM245 235h5v1h-5zM251 235h3v1h-3zM255 235h1v1h-1zM261 235h1v1h-1zM365 235h2v1h-2zM370 235h4v1h-4zM375 235h15v1h-15zM401 235h1v1h-1zM404 235h23v1h-23zM227 236h5v1h-5zM236 236h1v1h-1zM238 236h3v1h-3zM242 236h9v1h-9zM255 236h1v1h-1zM258 236h3v1h-3zM262 236h1v1h-1zM364 236h1v1h-1zM367 236h23v1h-23zM401 236h1v1h-1zM404 236h4v1h-4zM409 236h18v1h-18zM226 237h1v1h-1zM228 237h1v1h-1zM231 237h1v1h-1zM234 237h1v1h-1zM238 237h1v1h-1zM244 237h1v1h-1zM246 237h2v1h-2zM250 237h2v1h-2zM253 237h1v1h-1zM364 237h1v1h-1zM366 237h1v1h-1zM368 237h23v1h-23zM400 237h1v1h-1zM402 237h25v1h-25zM214 238h1v1h-1zM220 238h1v1h-1zM228 238h1v1h-1zM233 238h4v1h-4zM238 238h1v1h-1zM241 238h1v1h-1zM243 238h6v1h-6zM250 238h4v1h-4zM255 238h1v1h-1zM258 238h1v1h-1zM358 238h2v1h-2zM361 238h3v1h-3zM365 238h26v1h-26zM400 238h27v1h-27zM219 239h1v1h-1zM224 239h1v1h-1zM227 239h2v1h-2zM234 239h1v1h-1zM237 239h6v1h-6zM250 239h1v1h-1zM252 239h2v1h-2zM256 239h1v1h-1zM258 239h1v1h-1zM358 239h34v1h-34zM399 239h28v1h-28zM224 240h1v1h-1zM227 240h1v1h-1zM229 240h1v1h-1zM232 240h1v1h-1zM235 240h1v1h-1zM237 240h3v1h-3zM244 240h3v1h-3zM248 240h1v1h-1zM251 240h2v1h-2zM254 240h2v1h-2zM358 240h34v1h-34zM399 240h28v1h-28zM228 241h1v1h-1zM233 241h1v1h-1zM238 241h2v1h-2zM241 241h1v1h-1zM243 241h2v1h-2zM247 241h2v1h-2zM250 241h4v1h-4zM257 241h3v1h-3zM261 241h1v1h-1zM358 241h35v1h-35zM398 241h29v1h-29zM222 242h1v1h-1zM228 242h1v1h-1zM231 242h1v1h-1zM234 242h1v1h-1zM236 242h3v1h-3zM241 242h1v1h-1zM246 242h2v1h-2zM249 242h3v1h-3zM358 242h36v1h-36zM396 242h31v1h-31zM216 243h1v1h-1zM226 243h1v1h-1zM229 243h2v1h-2zM233 243h1v1h-1zM235 243h1v1h-1zM237 243h1v1h-1zM239 243h1v1h-1zM243 243h2v1h-2zM248 243h1v1h-1zM252 243h1v1h-1zM258 243h1v1h-1zM358 243h35v1h-35zM394 243h2v1h-2zM397 243h30v1h-30zM214 244h1v1h-1zM220 244h1v1h-1zM225 244h1v1h-1zM228 244h1v1h-1zM232 244h3v1h-3zM237 244h3v1h-3zM241 244h6v1h-6zM248 244h1v1h-1zM251 244h1v1h-1zM254 244h1v1h-1zM256 244h1v1h-1zM259 244h1v1h-1zM265 244h1v1h-1zM358 244h24v1h-24zM385 244h9v1h-9zM396 244h31v1h-31zM215 245h1v1h-1zM227 245h1v1h-1zM229 245h2v1h-2zM232 245h3v1h-3zM238 245h2v1h-2zM242 245h1v1h-1zM246 245h3v1h-3zM250 245h1v1h-1zM252 245h1v1h-1zM254 245h2v1h-2zM358 245h21v1h-21zM387 245h7v1h-7zM396 245h31v1h-31zM211 246h1v1h-1zM218 246h1v1h-1zM224 246h1v1h-1zM227 246h1v1h-1zM230 246h1v1h-1zM232 246h1v1h-1zM240 246h1v1h-1zM243 246h1v1h-1zM246 246h3v1h-3zM253 246h1v1h-1zM358 246h18v1h-18zM387 246h26v1h-26zM414 246h4v1h-4zM419 246h2v1h-2zM423 246h2v1h-2zM221 247h2v1h-2zM225 247h1v1h-1zM231 247h1v1h-1zM233 247h2v1h-2zM236 247h1v1h-1zM239 247h8v1h-8zM251 247h1v1h-1zM255 247h1v1h-1zM257 247h1v1h-1zM358 247h16v1h-16zM388 247h23v1h-23zM423 247h1v1h-1zM231 248h1v1h-1zM233 248h1v1h-1zM236 248h2v1h-2zM239 248h1v1h-1zM241 248h2v1h-2zM244 248h2v1h-2zM247 248h4v1h-4zM252 248h1v1h-1zM358 248h9v1h-9zM368 248h1v1h-1zM388 248h16v1h-16zM203 249h1v1h-1zM211 249h1v1h-1zM222 249h2v1h-2zM230 249h1v1h-1zM233 249h2v1h-2zM236 249h2v1h-2zM239 249h1v1h-1zM242 249h1v1h-1zM244 249h2v1h-2zM248 249h1v1h-1zM250 249h1v1h-1zM252 249h1v1h-1zM256 249h1v1h-1zM258 249h1v1h-1zM358 249h6v1h-6zM389 249h15v1h-15zM224 250h1v1h-1zM226 250h1v1h-1zM232 250h1v1h-1zM235 250h1v1h-1zM238 250h3v1h-3zM243 250h1v1h-1zM245 250h3v1h-3zM250 250h1v1h-1zM358 250h3v1h-3zM389 250h14v1h-14zM226 251h1v1h-1zM229 251h2v1h-2zM232 251h4v1h-4zM237 251h1v1h-1zM239 251h1v1h-1zM241 251h1v1h-1zM243 251h1v1h-1zM245 251h3v1h-3zM249 251h2v1h-2zM252 251h1v1h-1zM262 251h1v1h-1zM389 251h13v1h-13zM230 252h3v1h-3zM236 252h1v1h-1zM239 252h3v1h-3zM243 252h3v1h-3zM249 252h1v1h-1zM251 252h1v1h-1zM254 252h1v1h-1zM389 252h11v1h-11zM401 252h1v1h-1zM211 253h1v1h-1zM217 253h1v1h-1zM219 253h1v1h-1zM224 253h1v1h-1zM228 253h2v1h-2zM232 253h1v1h-1zM237 253h1v1h-1zM239 253h1v1h-1zM241 253h1v1h-1zM245 253h1v1h-1zM247 253h1v1h-1zM249 253h3v1h-3zM390 253h11v1h-11zM215 254h1v1h-1zM225 254h1v1h-1zM228 254h3v1h-3zM232 254h1v1h-1zM235 254h2v1h-2zM244 254h5v1h-5zM255 254h1v1h-1zM390 254h9v1h-9zM400 254h1v1h-1zM222 255h1v1h-1zM227 255h1v1h-1zM230 255h2v1h-2zM233 255h1v1h-1zM235 255h1v1h-1zM237 255h1v1h-1zM242 255h1v1h-1zM245 255h1v1h-1zM391 255h9v1h-9zM223 256h2v1h-2zM228 256h2v1h-2zM233 256h3v1h-3zM238 256h1v1h-1zM241 256h1v1h-1zM243 256h1v1h-1zM246 256h1v1h-1zM250 256h1v1h-1zM252 256h1v1h-1zM391 256h7v1h-7zM399 256h1v1h-1zM209 257h1v1h-1zM221 257h1v1h-1zM225 257h1v1h-1zM227 257h2v1h-2zM233 257h2v1h-2zM236 257h2v1h-2zM239 257h1v1h-1zM241 257h1v1h-1zM245 257h1v1h-1zM249 257h1v1h-1zM254 257h1v1h-1zM258 257h1v1h-1zM392 257h7v1h-7zM227 258h2v1h-2zM230 258h2v1h-2zM238 258h3v1h-3zM243 258h2v1h-2zM247 258h1v1h-1zM251 258h1v1h-1zM393 258h5v1h-5zM217 259h1v1h-1zM225 259h1v1h-1zM230 259h3v1h-3zM239 259h7v1h-7zM249 259h1v1h-1zM393 259h1v1h-1zM396 259h2v1h-2zM221 260h1v1h-1zM224 260h1v1h-1zM228 260h2v1h-2zM231 260h1v1h-1zM234 260h2v1h-2zM238 260h1v1h-1zM240 260h2v1h-2zM245 260h2v1h-2zM250 260h2v1h-2zM394 260h1v1h-1zM396 260h1v1h-1zM219 261h1v1h-1zM226 261h1v1h-1zM231 261h2v1h-2zM234 261h2v1h-2zM238 261h1v1h-1zM245 261h1v1h-1zM394 261h2v1h-2zM234 262h1v1h-1zM237 262h1v1h-1zM242 262h1v1h-1zM249 262h1v1h-1zM214 263h1v1h-1zM217 263h1v1h-1zM239 263h4v1h-4zM246 263h1v1h-1zM209 264h1v1h-1zM219 264h1v1h-1zM226 264h1v1h-1zM228 264h3v1h-3zM234 264h1v1h-1zM240 264h1v1h-1zM242 264h1v1h-1zM244 264h1v1h-1zM250 264h1v1h-1zM221 265h1v1h-1zM228 265h1v1h-1zM232 265h1v1h-1zM240 265h1v1h-1zM205 266h1v1h-1zM221 266h2v1h-2zM227 266h3v1h-3zM239 266h2v1h-2zM242 266h3v1h-3zM247 266h2v1h-2zM208 267h1v1h-1zM224 267h1v1h-1zM226 267h1v1h-1zM229 267h1v1h-1zM231 267h1v1h-1zM233 267h1v1h-1zM235 267h3v1h-3zM239 267h1v1h-1zM247 267h1v1h-1zM207 268h1v1h-1zM217 268h1v1h-1zM225 268h1v1h-1zM229 268h1v1h-1zM233 268h2v1h-2zM236 268h2v1h-2zM244 268h2v1h-2zM249 268h1v1h-1zM217 269h1v1h-1zM227 269h1v1h-1zM230 269h1v1h-1zM234 269h1v1h-1zM237 269h1v1h-1zM239 269h2v1h-2zM243 269h1v1h-1zM245 269h1v1h-1zM247 269h1v1h-1zM223 270h1v1h-1zM229 270h1v1h-1zM233 270h1v1h-1zM236 270h3v1h-3zM240 270h3v1h-3zM245 270h1v1h-1zM248 270h1v1h-1zM206 271h1v1h-1zM208 271h1v1h-1zM213 271h1v1h-1zM219 271h1v1h-1zM232 271h1v1h-1zM235 271h1v1h-1zM239 271h2v1h-2zM242 271h1v1h-1zM213 272h1v1h-1zM227 272h1v1h-1zM231 272h1v1h-1zM233 272h2v1h-2zM236 272h1v1h-1zM238 272h2v1h-2zM242 272h1v1h-1zM244 272h1v1h-1zM247 272h1v1h-1zM201 273h1v1h-1zM204 273h1v1h-1zM215 273h1v1h-1zM218 273h1v1h-1zM223 273h3v1h-3zM228 273h3v1h-3zM237 273h1v1h-1zM240 273h2v1h-2zM255 273h1v1h-1zM213 274h1v1h-1zM219 274h1v1h-1zM221 274h1v1h-1zM226 274h1v1h-1zM228 274h1v1h-1zM231 274h3v1h-3zM235 274h1v1h-1zM238 274h1v1h-1zM242 274h1v1h-1zM208 275h1v1h-1zM221 275h1v1h-1zM235 275h1v1h-1zM238 275h3v1h-3zM245 275h1v1h-1zM219 276h1v1h-1zM221 276h1v1h-1zM227 276h1v1h-1zM229 276h2v1h-2zM232 276h1v1h-1zM241 276h1v1h-1zM244 276h1v1h-1zM229 277h5v1h-5zM237 277h2v1h-2zM240 277h1v1h-1zM223 278h3v1h-3zM228 278h2v1h-2zM233 278h2v1h-2zM237 278h1v1h-1zM241 278h1v1h-1zM213 279h1v1h-1zM220 279h2v1h-2zM224 279h1v1h-1zM226 279h4v1h-4zM231 279h1v1h-1zM234 279h1v1h-1zM236 279h1v1h-1zM238 279h1v1h-1zM221 280h2v1h-2zM225 280h1v1h-1zM229 280h1v1h-1zM231 280h1v1h-1zM234 280h2v1h-2zM237 280h1v1h-1zM240 280h1v1h-1zM221 281h2v1h-2zM229 281h1v1h-1zM232 281h3v1h-3zM244 281h2v1h-2zM254 281h1v1h-1zM227 282h1v1h-1zM229 282h1v1h-1zM220 283h1v1h-1zM228 283h1v1h-1zM230 283h1v1h-1zM233 283h1v1h-1zM238 283h1v1h-1zM241 283h1v1h-1zM211 284h1v1h-1zM219 284h4v1h-4zM227 284h1v1h-1zM230 284h1v1h-1zM234 284h1v1h-1zM207 285h1v1h-1zM214 285h1v1h-1zM224 285h1v1h-1zM235 285h1v1h-1zM246 285h1v1h-1zM223 286h2v1h-2zM227 286h1v1h-1zM243 286h1v1h-1zM224 287h2v1h-2zM227 287h2v1h-2zM233 287h1v1h-1zM225 288h1v1h-1zM228 288h1v1h-1zM199 289h1v1h-1zM221 289h2v1h-2zM228 289h1v1h-1zM230 289h1v1h-1zM234 289h1v1h-1zM236 289h1v1h-1zM241 289h1v1h-1zM198 290h1v1h-1zM216 290h1v1h-1zM218 290h1v1h-1zM220 290h1v1h-1zM223 290h1v1h-1zM228 290h2v1h-2zM233 290h1v1h-1zM219 291h2v1h-2zM223 291h1v1h-1zM233 291h1v1h-1zM206 292h1v1h-1zM218 292h1v1h-1zM226 292h1v1h-1zM232 292h1v1h-1zM220 293h1v1h-1zM223 293h1v1h-1zM211 294h1v1h-1zM216 294h3v1h-3zM221 294h1v1h-1zM228 294h1v1h-1zM230 294h1v1h-1zM237 294h1v1h-1zM222 295h2v1h-2zM233 295h1v1h-1zM209 296h1v1h-1zM216 296h3v1h-3zM224 296h2v1h-2zM229 296h2v1h-2zM222 297h1v1h-1zM226 297h2v1h-2zM230 297h1v1h-1zM222 298h1v1h-1zM212 299h1v1h-1zM216 299h2v1h-2zM224 299h1v1h-1zM228 299h1v1h-1zM230 299h1v1h-1zM213 300h1v1h-1zM215 300h1v1h-1zM218 300h1v1h-1zM227 300h1v1h-1zM229 300h1v1h-1zM212 301h1v1h-1zM219 301h1v1h-1zM227 301h1v1h-1zM231 301h1v1h-1zM214 302h1v1h-1zM231 302h1v1h-1zM233 302h1v1h-1zM212 303h1v1h-1zM215 303h1v1h-1zM219 304h1v1h-1zM222 304h1v1h-1zM211 305h1v1h-1zM216 305h1v1h-1zM221 305h1v1h-1zM219 306h1v1h-1zM229 306h1v1h-1zM236 307h1v1h-1zM209 308h1v1h-1zM220 310h1v1h-1zM207 311h1v1h-1zM212 311h1v1h-1zM217 311h1v1h-1zM208 312h1v1h-1zM211 312h1v1h-1zM222 312h1v1h-1zM217 313h1v1h-1zM216 314h1v1h-1zM218 314h1v1h-1zM205 315h1v1h-1zM217 316h1v1h-1zM220 316h1v1h-1zM225 316h1v1h-1zM215 318h1v1h-1zM218 319h1v1h-1zM213 321h1v1h-1zM227 322h2v1h-2zM204 323h1v1h-1zM212 324h1v1h-1zM213 325h1v1h-1zM203 326h2v1h-2zM211 326h1v1h-1zM221 327h1v1h-1zM200 328h1v1h-1zM204 328h1v1h-1zM218 328h1v1h-1zM202 331h1v1h-1zM207 331h1v1h-1z"/><path fill="#00ccff" d="M344 121h3v1h-3zM337 122h4v1h-4zM343 122h1v1h-1zM347 122h1v1h-1zM335 123h2v1h-2zM341 123h2v1h-2zM348 123h1v1h-1zM334 124h1v1h-1zM337 124h3v1h-3zM342 124h2v1h-2zM347 124h3v1h-3zM351 124h1v1h-1zM309 125h1v1h-1zM312 125h3v1h-3zM333 125h1v1h-1zM335 125h2v1h-2zM338 125h5v1h-5zM344 125h4v1h-4zM349 125h3v1h-3zM306 126h1v1h-1zM308 126h8v1h-8zM332 126h1v1h-1zM335 126h3v1h-3zM339 126h13v1h-13zM302 127h14v1h-14zM329 127h23v1h-23zM289 128h1v1h-1zM296 128h21v1h-21zM324 128h28v1h-28zM283 129h2v1h-2zM288 129h29v1h-29zM324 129h28v1h-28zM283 130h12v1h-12zM296 130h22v1h-22zM323 130h29v1h-29zM283 131h35v1h-35zM322 131h30v1h-30zM283 132h35v1h-35zM321 132h31v1h-31zM283 133h36v1h-36zM320 133h32v1h-32zM283 134h36v1h-36zM320 134h32v1h-32zM283 135h68v1h-68zM283 136h24v1h-24zM308 136h1v1h-1zM310 136h1v1h-1zM314 136h16v1h-16zM331 136h5v1h-5zM337 136h2v1h-2zM340 136h8v1h-8zM349 136h3v1h-3zM283 137h21v1h-21zM309 137h1v1h-1zM315 137h16v1h-16zM333 137h5v1h-5zM343 137h4v1h-4zM348 137h1v1h-1zM283 138h13v1h-13zM298 138h1v1h-1zM300 138h1v1h-1zM315 138h12v1h-12zM328 138h1v1h-1zM347 138h1v1h-1zM283 139h9v1h-9zM293 139h1v1h-1zM295 139h1v1h-1zM299 139h1v1h-1zM315 139h11v1h-11zM327 139h1v1h-1zM283 140h1v1h-1zM285 140h4v1h-4zM294 140h1v1h-1zM316 140h9v1h-9zM285 141h1v1h-1zM316 141h8v1h-8zM317 142h6v1h-6zM317 143h5v1h-5zM318 144h2v1h-2zM311 154h1v1h-1zM308 155h5v1h-5zM302 156h2v1h-2zM305 156h6v1h-6zM312 156h2v1h-2zM301 157h1v1h-1zM304 157h10v1h-10zM300 158h1v1h-1zM304 158h11v1h-11zM295 159h1v1h-1zM298 159h17v1h-17zM330 159h5v1h-5zM336 159h1v1h-1zM290 160h1v1h-1zM294 160h21v1h-21zM329 160h1v1h-1zM333 160h3v1h-3zM337 160h3v1h-3zM342 160h3v1h-3zM290 161h25v1h-25zM329 161h1v1h-1zM331 161h2v1h-2zM334 161h3v1h-3zM339 161h3v1h-3zM345 161h7v1h-7zM288 162h2v1h-2zM292 162h24v1h-24zM328 162h1v1h-1zM330 162h3v1h-3zM334 162h1v1h-1zM336 162h3v1h-3zM340 162h1v1h-1zM342 162h2v1h-2zM345 162h1v1h-1zM350 162h1v1h-1zM283 163h2v1h-2zM286 163h6v1h-6zM293 163h23v1h-23zM328 163h6v1h-6zM335 163h10v1h-10zM346 163h6v1h-6zM283 164h33v1h-33zM327 164h25v1h-25zM283 165h33v1h-33zM326 165h26v1h-26zM283 166h24v1h-24zM310 166h6v1h-6zM326 166h26v1h-26zM283 167h23v1h-23zM311 167h5v1h-5zM325 167h27v1h-27zM283 168h21v1h-21zM312 168h5v1h-5zM324 168h28v1h-28zM283 169h20v1h-20zM312 169h5v1h-5zM323 169h29v1h-29zM283 170h16v1h-16zM301 170h1v1h-1zM312 170h5v1h-5zM322 170h30v1h-30zM283 171h13v1h-13zM297 171h1v1h-1zM312 171h5v1h-5zM321 171h24v1h-24zM346 171h6v1h-6zM283 172h9v1h-9zM313 172h5v1h-5zM321 172h18v1h-18zM341 172h1v1h-1zM345 172h1v1h-1zM350 172h2v1h-2zM283 173h8v1h-8zM313 173h5v1h-5zM320 173h10v1h-10zM331 173h3v1h-3zM335 173h2v1h-2zM338 173h4v1h-4zM345 173h5v1h-5zM283 174h2v1h-2zM286 174h1v1h-1zM288 174h1v1h-1zM313 174h5v1h-5zM320 174h11v1h-11zM333 174h1v1h-1zM342 174h3v1h-3zM283 175h1v1h-1zM285 175h1v1h-1zM313 175h5v1h-5zM320 175h8v1h-8zM332 175h1v1h-1zM342 175h1v1h-1zM313 176h14v1h-14zM328 176h1v1h-1zM332 176h1v1h-1zM313 177h13v1h-13zM328 177h1v1h-1zM331 177h1v1h-1zM314 178h12v1h-12zM329 178h2v1h-2zM314 179h12v1h-12zM314 180h11v1h-11zM314 181h11v1h-11zM314 182h10v1h-10zM314 183h10v1h-10zM315 184h7v1h-7zM323 184h1v1h-1zM315 185h8v1h-8zM315 186h7v1h-7zM315 187h6v1h-6zM316 188h4v1h-4zM316 189h4v1h-4zM242 195h1v1h-1zM251 196h2v1h-2zM310 196h3v1h-3zM249 197h2v1h-2zM253 197h1v1h-1zM306 197h8v1h-8zM244 198h1v1h-1zM257 198h3v1h-3zM303 198h1v1h-1zM305 198h10v1h-10zM244 199h4v1h-4zM250 199h2v1h-2zM253 199h3v1h-3zM258 199h1v1h-1zM300 199h1v1h-1zM302 199h13v1h-13zM332 199h1v1h-1zM334 199h1v1h-1zM336 199h1v1h-1zM244 200h1v1h-1zM251 200h2v1h-2zM254 200h1v1h-1zM258 200h1v1h-1zM263 200h1v1h-1zM298 200h18v1h-18zM328 200h1v1h-1zM332 200h4v1h-4zM337 200h10v1h-10zM348 200h2v1h-2zM351 200h1v1h-1zM245 201h1v1h-1zM248 201h1v1h-1zM250 201h2v1h-2zM260 201h2v1h-2zM297 201h19v1h-19zM326 201h26v1h-26zM242 202h1v1h-1zM265 202h1v1h-1zM288 202h2v1h-2zM291 202h1v1h-1zM293 202h23v1h-23zM323 202h1v1h-1zM325 202h27v1h-27zM228 203h1v1h-1zM246 203h1v1h-1zM251 203h1v1h-1zM256 203h1v1h-1zM283 203h2v1h-2zM286 203h31v1h-31zM321 203h31v1h-31zM244 204h4v1h-4zM253 204h1v1h-1zM261 204h1v1h-1zM263 204h1v1h-1zM265 204h1v1h-1zM283 204h34v1h-34zM321 204h31v1h-31zM223 205h1v1h-1zM245 205h2v1h-2zM283 205h35v1h-35zM320 205h32v1h-32zM236 206h1v1h-1zM241 206h2v1h-2zM244 206h1v1h-1zM246 206h1v1h-1zM248 206h1v1h-1zM253 206h1v1h-1zM255 206h1v1h-1zM260 206h1v1h-1zM283 206h25v1h-25zM309 206h9v1h-9zM320 206h32v1h-32zM235 207h1v1h-1zM237 207h3v1h-3zM244 207h1v1h-1zM246 207h2v1h-2zM250 207h1v1h-1zM252 207h1v1h-1zM258 207h1v1h-1zM283 207h35v1h-35zM319 207h33v1h-33zM240 208h1v1h-1zM244 208h2v1h-2zM249 208h1v1h-1zM255 208h1v1h-1zM283 208h22v1h-22zM306 208h1v1h-1zM310 208h1v1h-1zM312 208h40v1h-40zM227 209h1v1h-1zM232 209h1v1h-1zM235 209h1v1h-1zM238 209h4v1h-4zM243 209h4v1h-4zM249 209h1v1h-1zM283 209h19v1h-19zM311 209h1v1h-1zM313 209h25v1h-25zM339 209h13v1h-13zM217 210h2v1h-2zM226 210h1v1h-1zM228 210h1v1h-1zM233 210h1v1h-1zM237 210h2v1h-2zM240 210h2v1h-2zM244 210h1v1h-1zM247 210h1v1h-1zM251 210h1v1h-1zM256 210h1v1h-1zM261 210h1v1h-1zM283 210h18v1h-18zM311 210h1v1h-1zM313 210h22v1h-22zM338 210h1v1h-1zM341 210h6v1h-6zM220 211h1v1h-1zM241 211h1v1h-1zM243 211h2v1h-2zM247 211h1v1h-1zM249 211h1v1h-1zM283 211h13v1h-13zM312 211h14v1h-14zM328 211h5v1h-5zM335 211h1v1h-1zM339 211h3v1h-3zM228 212h1v1h-1zM230 212h1v1h-1zM232 212h1v1h-1zM237 212h2v1h-2zM240 212h2v1h-2zM252 212h2v1h-2zM283 212h9v1h-9zM293 212h1v1h-1zM314 212h9v1h-9zM324 212h1v1h-1zM336 212h4v1h-4zM226 213h2v1h-2zM234 213h1v1h-1zM237 213h1v1h-1zM239 213h1v1h-1zM243 213h2v1h-2zM246 213h1v1h-1zM248 213h2v1h-2zM258 213h1v1h-1zM283 213h3v1h-3zM287 213h2v1h-2zM314 213h10v1h-10zM224 214h1v1h-1zM226 214h1v1h-1zM229 214h1v1h-1zM233 214h1v1h-1zM236 214h1v1h-1zM238 214h1v1h-1zM243 214h3v1h-3zM248 214h1v1h-1zM253 214h1v1h-1zM283 214h1v1h-1zM286 214h1v1h-1zM314 214h9v1h-9zM229 215h1v1h-1zM234 215h2v1h-2zM237 215h1v1h-1zM240 215h1v1h-1zM243 215h1v1h-1zM245 215h1v1h-1zM247 215h1v1h-1zM249 215h2v1h-2zM256 215h2v1h-2zM315 215h7v1h-7zM227 216h1v1h-1zM234 216h2v1h-2zM237 216h1v1h-1zM241 216h2v1h-2zM244 216h1v1h-1zM246 216h3v1h-3zM251 216h1v1h-1zM258 216h1v1h-1zM315 216h5v1h-5zM321 216h1v1h-1zM223 217h2v1h-2zM230 217h2v1h-2zM234 217h2v1h-2zM238 217h1v1h-1zM241 217h1v1h-1zM245 217h1v1h-1zM247 217h2v1h-2zM255 217h1v1h-1zM257 217h1v1h-1zM315 217h2v1h-2zM318 217h1v1h-1zM320 217h1v1h-1zM224 218h1v1h-1zM226 218h1v1h-1zM234 218h1v1h-1zM236 218h2v1h-2zM241 218h1v1h-1zM248 218h1v1h-1zM251 218h1v1h-1zM253 218h1v1h-1zM316 218h2v1h-2zM319 218h2v1h-2zM212 219h1v1h-1zM217 219h1v1h-1zM220 219h2v1h-2zM223 219h1v1h-1zM226 219h2v1h-2zM231 219h1v1h-1zM236 219h1v1h-1zM240 219h1v1h-1zM243 219h1v1h-1zM245 219h1v1h-1zM251 219h2v1h-2zM316 219h1v1h-1zM319 219h1v1h-1zM217 220h2v1h-2zM220 220h1v1h-1zM223 220h5v1h-5zM229 220h3v1h-3zM233 220h1v1h-1zM235 220h3v1h-3zM239 220h2v1h-2zM243 220h1v1h-1zM246 220h1v1h-1zM252 220h3v1h-3zM317 220h3v1h-3zM222 221h1v1h-1zM226 221h1v1h-1zM228 221h1v1h-1zM233 221h6v1h-6zM242 221h1v1h-1zM244 221h2v1h-2zM247 221h1v1h-1zM249 221h1v1h-1zM251 221h1v1h-1zM317 221h2v1h-2zM215 222h1v1h-1zM225 222h1v1h-1zM227 222h1v1h-1zM229 222h4v1h-4zM234 222h4v1h-4zM239 222h4v1h-4zM244 222h1v1h-1zM248 222h2v1h-2zM218 223h3v1h-3zM226 223h4v1h-4zM239 223h1v1h-1zM242 223h1v1h-1zM246 223h3v1h-3zM252 223h1v1h-1zM254 223h2v1h-2zM267 223h1v1h-1zM224 224h1v1h-1zM226 224h1v1h-1zM228 224h2v1h-2zM231 224h4v1h-4zM236 224h1v1h-1zM239 224h4v1h-4zM245 224h1v1h-1zM248 224h1v1h-1zM217 225h1v1h-1zM219 225h3v1h-3zM223 225h1v1h-1zM225 225h1v1h-1zM228 225h1v1h-1zM230 225h1v1h-1zM232 225h3v1h-3zM237 225h1v1h-1zM239 225h1v1h-1zM243 225h1v1h-1zM250 225h1v1h-1zM253 225h1v1h-1zM256 225h1v1h-1zM260 225h1v1h-1zM215 226h1v1h-1zM222 226h1v1h-1zM226 226h2v1h-2zM229 226h2v1h-2zM232 226h1v1h-1zM235 226h2v1h-2zM239 226h1v1h-1zM242 226h1v1h-1zM244 226h1v1h-1zM247 226h2v1h-2zM253 226h2v1h-2zM219 227h2v1h-2zM223 227h2v1h-2zM226 227h2v1h-2zM229 227h4v1h-4zM235 227h2v1h-2zM238 227h1v1h-1zM240 227h2v1h-2zM244 227h3v1h-3zM248 227h1v1h-1zM250 227h1v1h-1zM252 227h1v1h-1zM259 227h1v1h-1zM211 228h1v1h-1zM221 228h4v1h-4zM227 228h1v1h-1zM229 228h3v1h-3zM239 228h1v1h-1zM245 228h2v1h-2zM248 228h1v1h-1zM252 228h1v1h-1zM215 229h1v1h-1zM218 229h2v1h-2zM224 229h2v1h-2zM227 229h2v1h-2zM232 229h1v1h-1zM237 229h1v1h-1zM240 229h2v1h-2zM243 229h2v1h-2zM247 229h1v1h-1zM251 229h1v1h-1zM220 230h1v1h-1zM226 230h1v1h-1zM228 230h1v1h-1zM230 230h1v1h-1zM232 230h4v1h-4zM237 230h2v1h-2zM243 230h1v1h-1zM245 230h2v1h-2zM251 230h2v1h-2zM255 230h1v1h-1zM258 230h1v1h-1zM222 231h3v1h-3zM226 231h1v1h-1zM228 231h6v1h-6zM235 231h3v1h-3zM241 231h4v1h-4zM246 231h1v1h-1zM250 231h1v1h-1zM223 232h2v1h-2zM226 232h2v1h-2zM230 232h2v1h-2zM233 232h5v1h-5zM241 232h1v1h-1zM247 232h1v1h-1zM249 232h1v1h-1zM307 232h1v1h-1zM309 232h3v1h-3zM217 233h1v1h-1zM219 233h2v1h-2zM222 233h2v1h-2zM226 233h6v1h-6zM234 233h1v1h-1zM236 233h2v1h-2zM245 233h1v1h-1zM251 233h1v1h-1zM306 233h6v1h-6zM338 233h6v1h-6zM216 234h1v1h-1zM218 234h2v1h-2zM221 234h1v1h-1zM223 234h4v1h-4zM228 234h2v1h-2zM231 234h5v1h-5zM238 234h1v1h-1zM241 234h2v1h-2zM244 234h2v1h-2zM247 234h1v1h-1zM250 234h1v1h-1zM301 234h12v1h-12zM335 234h3v1h-3zM344 234h3v1h-3zM212 235h1v1h-1zM215 235h1v1h-1zM217 235h2v1h-2zM220 235h1v1h-1zM222 235h2v1h-2zM226 235h1v1h-1zM228 235h2v1h-2zM234 235h1v1h-1zM240 235h2v1h-2zM244 235h1v1h-1zM250 235h1v1h-1zM296 235h18v1h-18zM333 235h3v1h-3zM340 235h1v1h-1zM347 235h2v1h-2zM350 235h2v1h-2zM209 236h2v1h-2zM213 236h1v1h-1zM218 236h9v1h-9zM232 236h4v1h-4zM237 236h1v1h-1zM241 236h1v1h-1zM251 236h1v1h-1zM253 236h1v1h-1zM292 236h22v1h-22zM328 236h1v1h-1zM330 236h15v1h-15zM346 236h2v1h-2zM349 236h3v1h-3zM199 237h1v1h-1zM216 237h1v1h-1zM218 237h3v1h-3zM222 237h4v1h-4zM227 237h1v1h-1zM229 237h2v1h-2zM232 237h2v1h-2zM235 237h3v1h-3zM239 237h5v1h-5zM245 237h1v1h-1zM248 237h2v1h-2zM255 237h1v1h-1zM261 237h1v1h-1zM283 237h1v1h-1zM287 237h5v1h-5zM293 237h22v1h-22zM323 237h3v1h-3zM327 237h25v1h-25zM216 238h1v1h-1zM221 238h3v1h-3zM225 238h3v1h-3zM229 238h4v1h-4zM237 238h1v1h-1zM239 238h2v1h-2zM242 238h1v1h-1zM249 238h1v1h-1zM283 238h32v1h-32zM322 238h30v1h-30zM210 239h1v1h-1zM217 239h1v1h-1zM221 239h3v1h-3zM226 239h1v1h-1zM229 239h5v1h-5zM235 239h2v1h-2zM243 239h3v1h-3zM248 239h1v1h-1zM283 239h32v1h-32zM321 239h31v1h-31zM210 240h1v1h-1zM213 240h1v1h-1zM215 240h1v1h-1zM218 240h1v1h-1zM221 240h3v1h-3zM225 240h2v1h-2zM228 240h1v1h-1zM230 240h2v1h-2zM233 240h2v1h-2zM236 240h1v1h-1zM240 240h4v1h-4zM247 240h1v1h-1zM249 240h1v1h-1zM283 240h32v1h-32zM320 240h32v1h-32zM208 241h1v1h-1zM210 241h1v1h-1zM215 241h4v1h-4zM220 241h4v1h-4zM225 241h3v1h-3zM229 241h4v1h-4zM234 241h4v1h-4zM240 241h1v1h-1zM242 241h1v1h-1zM246 241h1v1h-1zM249 241h1v1h-1zM283 241h24v1h-24zM308 241h8v1h-8zM319 241h33v1h-33zM211 242h1v1h-1zM215 242h1v1h-1zM218 242h4v1h-4zM223 242h5v1h-5zM229 242h2v1h-2zM232 242h2v1h-2zM235 242h1v1h-1zM239 242h2v1h-2zM242 242h4v1h-4zM256 242h1v1h-1zM283 242h33v1h-33zM319 242h33v1h-33zM201 243h1v1h-1zM212 243h2v1h-2zM215 243h1v1h-1zM218 243h8v1h-8zM227 243h2v1h-2zM231 243h2v1h-2zM234 243h1v1h-1zM236 243h1v1h-1zM238 243h1v1h-1zM240 243h3v1h-3zM245 243h2v1h-2zM249 243h1v1h-1zM283 243h26v1h-26zM310 243h6v1h-6zM318 243h34v1h-34zM210 244h1v1h-1zM213 244h1v1h-1zM216 244h2v1h-2zM219 244h1v1h-1zM221 244h4v1h-4zM226 244h2v1h-2zM229 244h3v1h-3zM235 244h2v1h-2zM240 244h1v1h-1zM247 244h1v1h-1zM249 244h2v1h-2zM253 244h1v1h-1zM255 244h1v1h-1zM283 244h11v1h-11zM295 244h11v1h-11zM311 244h41v1h-41zM211 245h1v1h-1zM216 245h2v1h-2zM219 245h2v1h-2zM222 245h5v1h-5zM228 245h1v1h-1zM231 245h1v1h-1zM235 245h3v1h-3zM240 245h2v1h-2zM243 245h2v1h-2zM251 245h1v1h-1zM283 245h7v1h-7zM291 245h1v1h-1zM293 245h9v1h-9zM303 245h1v1h-1zM305 245h1v1h-1zM311 245h41v1h-41zM213 246h2v1h-2zM216 246h2v1h-2zM220 246h4v1h-4zM225 246h2v1h-2zM228 246h2v1h-2zM231 246h1v1h-1zM233 246h7v1h-7zM241 246h2v1h-2zM244 246h2v1h-2zM283 246h15v1h-15zM304 246h1v1h-1zM312 246h36v1h-36zM349 246h3v1h-3zM208 247h1v1h-1zM210 247h1v1h-1zM214 247h7v1h-7zM223 247h2v1h-2zM226 247h5v1h-5zM232 247h1v1h-1zM235 247h1v1h-1zM237 247h2v1h-2zM248 247h1v1h-1zM283 247h11v1h-11zM295 247h2v1h-2zM312 247h20v1h-20zM335 247h1v1h-1zM337 247h1v1h-1zM342 247h2v1h-2zM346 247h5v1h-5zM208 248h3v1h-3zM212 248h19v1h-19zM232 248h1v1h-1zM234 248h2v1h-2zM238 248h1v1h-1zM240 248h1v1h-1zM243 248h1v1h-1zM246 248h1v1h-1zM283 248h9v1h-9zM294 248h1v1h-1zM312 248h16v1h-16zM329 248h2v1h-2zM336 248h1v1h-1zM338 248h1v1h-1zM341 248h1v1h-1zM346 248h1v1h-1zM350 248h1v1h-1zM210 249h1v1h-1zM212 249h7v1h-7zM220 249h2v1h-2zM224 249h6v1h-6zM231 249h2v1h-2zM235 249h1v1h-1zM238 249h1v1h-1zM240 249h2v1h-2zM243 249h1v1h-1zM246 249h2v1h-2zM251 249h1v1h-1zM257 249h1v1h-1zM283 249h2v1h-2zM290 249h1v1h-1zM312 249h14v1h-14zM338 249h3v1h-3zM347 249h3v1h-3zM206 250h1v1h-1zM209 250h2v1h-2zM212 250h3v1h-3zM217 250h7v1h-7zM225 250h1v1h-1zM227 250h5v1h-5zM233 250h2v1h-2zM237 250h1v1h-1zM241 250h2v1h-2zM244 250h1v1h-1zM248 250h1v1h-1zM284 250h1v1h-1zM313 250h9v1h-9zM197 251h1v1h-1zM208 251h1v1h-1zM210 251h2v1h-2zM213 251h13v1h-13zM227 251h2v1h-2zM231 251h1v1h-1zM236 251h1v1h-1zM238 251h1v1h-1zM240 251h1v1h-1zM242 251h1v1h-1zM283 251h1v1h-1zM313 251h9v1h-9zM208 252h1v1h-1zM214 252h3v1h-3zM218 252h9v1h-9zM228 252h2v1h-2zM233 252h3v1h-3zM237 252h2v1h-2zM242 252h1v1h-1zM246 252h2v1h-2zM313 252h8v1h-8zM210 253h1v1h-1zM212 253h1v1h-1zM216 253h1v1h-1zM218 253h1v1h-1zM220 253h4v1h-4zM225 253h3v1h-3zM230 253h2v1h-2zM233 253h4v1h-4zM238 253h1v1h-1zM240 253h1v1h-1zM244 253h1v1h-1zM314 253h7v1h-7zM206 254h2v1h-2zM209 254h1v1h-1zM212 254h3v1h-3zM217 254h8v1h-8zM226 254h2v1h-2zM231 254h1v1h-1zM233 254h2v1h-2zM237 254h7v1h-7zM250 254h1v1h-1zM314 254h6v1h-6zM211 255h2v1h-2zM214 255h8v1h-8zM223 255h4v1h-4zM228 255h2v1h-2zM232 255h1v1h-1zM234 255h1v1h-1zM236 255h1v1h-1zM238 255h3v1h-3zM244 255h1v1h-1zM314 255h5v1h-5zM202 256h1v1h-1zM205 256h1v1h-1zM207 256h1v1h-1zM211 256h12v1h-12zM225 256h3v1h-3zM230 256h3v1h-3zM236 256h2v1h-2zM240 256h1v1h-1zM242 256h1v1h-1zM245 256h1v1h-1zM247 256h1v1h-1zM315 256h3v1h-3zM212 257h1v1h-1zM214 257h3v1h-3zM218 257h3v1h-3zM222 257h3v1h-3zM226 257h1v1h-1zM229 257h4v1h-4zM235 257h1v1h-1zM238 257h1v1h-1zM240 257h1v1h-1zM242 257h1v1h-1zM244 257h1v1h-1zM248 257h1v1h-1zM315 257h1v1h-1zM201 258h1v1h-1zM209 258h1v1h-1zM211 258h16v1h-16zM229 258h1v1h-1zM232 258h6v1h-6zM242 258h1v1h-1zM198 259h1v1h-1zM211 259h4v1h-4zM216 259h1v1h-1zM218 259h7v1h-7zM226 259h4v1h-4zM233 259h6v1h-6zM206 260h1v1h-1zM213 260h4v1h-4zM219 260h2v1h-2zM222 260h2v1h-2zM225 260h3v1h-3zM230 260h1v1h-1zM232 260h2v1h-2zM237 260h1v1h-1zM242 260h2v1h-2zM211 261h1v1h-1zM215 261h4v1h-4zM222 261h4v1h-4zM227 261h4v1h-4zM233 261h1v1h-1zM236 261h2v1h-2zM239 261h6v1h-6zM248 261h1v1h-1zM200 262h2v1h-2zM205 262h2v1h-2zM208 262h1v1h-1zM210 262h1v1h-1zM213 262h1v1h-1zM215 262h1v1h-1zM218 262h4v1h-4zM223 262h1v1h-1zM225 262h4v1h-4zM230 262h4v1h-4zM235 262h2v1h-2zM239 262h3v1h-3zM243 262h2v1h-2zM199 263h1v1h-1zM202 263h1v1h-1zM206 263h1v1h-1zM210 263h1v1h-1zM212 263h1v1h-1zM215 263h2v1h-2zM219 263h2v1h-2zM222 263h2v1h-2zM225 263h1v1h-1zM227 263h12v1h-12zM244 263h1v1h-1zM210 264h1v1h-1zM213 264h1v1h-1zM215 264h1v1h-1zM217 264h2v1h-2zM220 264h3v1h-3zM224 264h2v1h-2zM227 264h1v1h-1zM231 264h3v1h-3zM237 264h3v1h-3zM243 264h1v1h-1zM204 265h3v1h-3zM208 265h2v1h-2zM211 265h1v1h-1zM213 265h5v1h-5zM219 265h2v1h-2zM222 265h5v1h-5zM229 265h3v1h-3zM233 265h7v1h-7zM241 265h1v1h-1zM203 266h1v1h-1zM207 266h1v1h-1zM209 266h1v1h-1zM212 266h2v1h-2zM215 266h1v1h-1zM217 266h3v1h-3zM223 266h1v1h-1zM226 266h1v1h-1zM230 266h9v1h-9zM241 266h1v1h-1zM250 266h1v1h-1zM205 267h3v1h-3zM210 267h1v1h-1zM212 267h1v1h-1zM216 267h3v1h-3zM220 267h4v1h-4zM225 267h1v1h-1zM227 267h2v1h-2zM230 267h1v1h-1zM232 267h1v1h-1zM234 267h1v1h-1zM238 267h1v1h-1zM241 267h1v1h-1zM243 267h1v1h-1zM206 268h1v1h-1zM210 268h3v1h-3zM215 268h1v1h-1zM218 268h7v1h-7zM226 268h3v1h-3zM230 268h3v1h-3zM235 268h1v1h-1zM241 268h1v1h-1zM248 268h1v1h-1zM208 269h2v1h-2zM211 269h4v1h-4zM216 269h1v1h-1zM218 269h3v1h-3zM224 269h3v1h-3zM229 269h1v1h-1zM231 269h3v1h-3zM235 269h1v1h-1zM198 270h1v1h-1zM213 270h4v1h-4zM218 270h1v1h-1zM220 270h3v1h-3zM224 270h5v1h-5zM230 270h1v1h-1zM232 270h1v1h-1zM234 270h2v1h-2zM239 270h1v1h-1zM195 271h1v1h-1zM207 271h1v1h-1zM209 271h3v1h-3zM215 271h1v1h-1zM218 271h1v1h-1zM220 271h1v1h-1zM222 271h2v1h-2zM225 271h3v1h-3zM229 271h3v1h-3zM233 271h2v1h-2zM236 271h2v1h-2zM241 271h1v1h-1zM201 272h1v1h-1zM211 272h2v1h-2zM214 272h1v1h-1zM218 272h9v1h-9zM228 272h3v1h-3zM232 272h1v1h-1zM235 272h1v1h-1zM203 273h1v1h-1zM206 273h3v1h-3zM216 273h2v1h-2zM219 273h4v1h-4zM226 273h2v1h-2zM231 273h3v1h-3zM235 273h1v1h-1zM239 273h1v1h-1zM244 273h1v1h-1zM197 274h1v1h-1zM210 274h1v1h-1zM212 274h1v1h-1zM214 274h5v1h-5zM220 274h1v1h-1zM222 274h3v1h-3zM229 274h2v1h-2zM237 274h1v1h-1zM209 275h2v1h-2zM212 275h4v1h-4zM217 275h3v1h-3zM222 275h1v1h-1zM224 275h4v1h-4zM229 275h2v1h-2zM232 275h2v1h-2zM236 275h1v1h-1zM200 276h1v1h-1zM202 276h2v1h-2zM205 276h1v1h-1zM207 276h2v1h-2zM211 276h8v1h-8zM223 276h1v1h-1zM225 276h1v1h-1zM231 276h1v1h-1zM233 276h1v1h-1zM209 277h1v1h-1zM211 277h6v1h-6zM219 277h2v1h-2zM223 277h3v1h-3zM228 277h1v1h-1zM236 277h1v1h-1zM204 278h1v1h-1zM208 278h2v1h-2zM211 278h3v1h-3zM216 278h2v1h-2zM219 278h2v1h-2zM227 278h1v1h-1zM232 278h1v1h-1zM240 278h1v1h-1zM203 279h1v1h-1zM205 279h3v1h-3zM209 279h3v1h-3zM214 279h3v1h-3zM219 279h1v1h-1zM222 279h2v1h-2zM225 279h1v1h-1zM230 279h1v1h-1zM232 279h2v1h-2zM205 280h1v1h-1zM209 280h1v1h-1zM211 280h2v1h-2zM214 280h1v1h-1zM216 280h1v1h-1zM218 280h3v1h-3zM223 280h1v1h-1zM228 280h1v1h-1zM232 280h1v1h-1zM200 281h1v1h-1zM204 281h2v1h-2zM214 281h1v1h-1zM218 281h3v1h-3zM224 281h1v1h-1zM227 281h2v1h-2zM230 281h2v1h-2zM237 281h1v1h-1zM198 282h1v1h-1zM206 282h1v1h-1zM215 282h1v1h-1zM217 282h1v1h-1zM220 282h4v1h-4zM225 282h2v1h-2zM228 282h1v1h-1zM230 282h2v1h-2zM236 282h3v1h-3zM211 283h1v1h-1zM214 283h3v1h-3zM221 283h3v1h-3zM225 283h1v1h-1zM227 283h1v1h-1zM236 283h1v1h-1zM206 284h1v1h-1zM210 284h1v1h-1zM216 284h2v1h-2zM223 284h2v1h-2zM226 284h1v1h-1zM228 284h2v1h-2zM236 284h1v1h-1zM198 285h1v1h-1zM202 285h1v1h-1zM209 285h1v1h-1zM213 285h1v1h-1zM216 285h2v1h-2zM220 285h1v1h-1zM223 285h1v1h-1zM225 285h1v1h-1zM232 285h1v1h-1zM237 285h1v1h-1zM197 286h1v1h-1zM202 286h1v1h-1zM206 286h1v1h-1zM214 286h4v1h-4zM219 286h1v1h-1zM222 286h1v1h-1zM225 286h2v1h-2zM230 286h1v1h-1zM206 287h1v1h-1zM214 287h1v1h-1zM223 287h1v1h-1zM226 287h1v1h-1zM229 287h1v1h-1zM241 287h1v1h-1zM204 288h1v1h-1zM208 288h1v1h-1zM211 288h4v1h-4zM219 288h1v1h-1zM223 288h1v1h-1zM226 288h1v1h-1zM232 288h1v1h-1zM237 288h1v1h-1zM210 289h1v1h-1zM214 289h1v1h-1zM218 289h2v1h-2zM224 289h1v1h-1zM233 289h1v1h-1zM240 289h1v1h-1zM199 290h1v1h-1zM203 290h1v1h-1zM207 290h1v1h-1zM214 290h1v1h-1zM226 290h2v1h-2zM230 290h1v1h-1zM240 290h1v1h-1zM195 291h1v1h-1zM204 291h2v1h-2zM207 291h1v1h-1zM209 291h1v1h-1zM214 291h2v1h-2zM218 291h1v1h-1zM222 291h1v1h-1zM224 291h1v1h-1zM226 291h1v1h-1zM229 291h1v1h-1zM231 291h1v1h-1zM217 292h1v1h-1zM220 292h2v1h-2zM224 292h1v1h-1zM229 292h1v1h-1zM205 293h1v1h-1zM207 293h1v1h-1zM210 293h1v1h-1zM212 293h1v1h-1zM214 293h2v1h-2zM214 294h1v1h-1zM222 294h1v1h-1zM224 294h1v1h-1zM227 294h1v1h-1zM201 295h1v1h-1zM204 295h1v1h-1zM210 295h1v1h-1zM212 295h2v1h-2zM217 295h1v1h-1zM224 295h2v1h-2zM202 296h1v1h-1zM214 296h1v1h-1zM219 296h1v1h-1zM222 296h1v1h-1zM210 297h1v1h-1zM217 297h1v1h-1zM219 298h1v1h-1zM221 298h1v1h-1zM198 299h1v1h-1zM207 299h1v1h-1zM209 299h1v1h-1zM210 300h2v1h-2zM220 300h1v1h-1zM225 300h1v1h-1zM199 301h1v1h-1zM215 301h1v1h-1zM221 301h1v1h-1zM207 302h1v1h-1zM222 302h1v1h-1zM194 303h1v1h-1zM202 303h1v1h-1zM204 303h1v1h-1zM199 304h1v1h-1zM210 304h1v1h-1zM204 305h1v1h-1zM210 305h1v1h-1zM213 305h1v1h-1zM217 305h1v1h-1zM213 306h1v1h-1zM208 307h1v1h-1zM223 307h1v1h-1zM226 307h1v1h-1zM219 308h1v1h-1zM195 309h1v1h-1zM218 309h1v1h-1zM207 310h1v1h-1zM209 310h2v1h-2zM215 310h1v1h-1zM224 310h1v1h-1zM209 312h1v1h-1zM205 313h1v1h-1zM210 313h1v1h-1zM219 313h1v1h-1zM215 315h1v1h-1zM214 316h1v1h-1zM213 318h1v1h-1zM203 320h1v1h-1zM211 321h1v1h-1zM208 322h1v1h-1zM194 324h1v1h-1zM202 324h1v1h-1zM195 326h1v1h-1zM210 327h1v1h-1zM207 335h1v1h-1z"/><path fill="#ff2a00" d="M532 121h1v1h-1zM535 121h5v1h-5zM530 122h1v1h-1zM532 122h8v1h-8zM527 123h1v1h-1zM529 123h1v1h-1zM531 123h1v1h-1zM533 123h8v1h-8zM559 123h5v1h-5zM574 123h1v1h-1zM527 124h1v1h-1zM529 124h12v1h-12zM558 124h1v1h-1zM562 124h5v1h-5zM568 124h1v1h-1zM570 124h1v1h-1zM574 124h2v1h-2zM520 125h1v1h-1zM523 125h18v1h-18zM557 125h1v1h-1zM559 125h3v1h-3zM563 125h1v1h-1zM565 125h5v1h-5zM571 125h6v1h-6zM517 126h2v1h-2zM520 126h22v1h-22zM554 126h1v1h-1zM556 126h21v1h-21zM510 127h3v1h-3zM517 127h1v1h-1zM519 127h23v1h-23zM553 127h24v1h-24zM510 128h32v1h-32zM552 128h1v1h-1zM554 128h23v1h-23zM508 129h35v1h-35zM551 129h26v1h-26zM508 130h35v1h-35zM549 130h1v1h-1zM551 130h26v1h-26zM508 131h35v1h-35zM549 131h28v1h-28zM508 132h36v1h-36zM549 132h28v1h-28zM508 133h27v1h-27zM536 133h8v1h-8zM548 133h29v1h-29zM508 134h26v1h-26zM535 134h9v1h-9zM548 134h29v1h-29zM508 135h20v1h-20zM529 135h7v1h-7zM538 135h6v1h-6zM547 135h30v1h-30zM508 136h21v1h-21zM530 136h3v1h-3zM534 136h2v1h-2zM538 136h7v1h-7zM547 136h20v1h-20zM568 136h9v1h-9zM508 137h20v1h-20zM529 137h3v1h-3zM533 137h2v1h-2zM539 137h6v1h-6zM546 137h12v1h-12zM559 137h4v1h-4zM564 137h13v1h-13zM508 138h17v1h-17zM526 138h3v1h-3zM539 138h6v1h-6zM546 138h16v1h-16zM563 138h2v1h-2zM566 138h1v1h-1zM569 138h2v1h-2zM572 138h1v1h-1zM574 138h3v1h-3zM508 139h5v1h-5zM514 139h7v1h-7zM522 139h2v1h-2zM539 139h31v1h-31zM508 140h7v1h-7zM516 140h4v1h-4zM539 140h15v1h-15zM555 140h4v1h-4zM509 141h2v1h-2zM512 141h4v1h-4zM540 141h13v1h-13zM554 141h2v1h-2zM557 141h1v1h-1zM508 142h1v1h-1zM511 142h4v1h-4zM540 142h13v1h-13zM554 142h1v1h-1zM508 143h3v1h-3zM540 143h12v1h-12zM554 143h1v1h-1zM540 144h11v1h-11zM553 144h1v1h-1zM541 145h12v1h-12zM541 146h9v1h-9zM537 147h1v1h-1zM541 147h9v1h-9zM537 148h2v1h-2zM542 148h7v1h-7zM536 149h1v1h-1zM538 149h1v1h-1zM542 149h7v1h-7zM536 150h1v1h-1zM539 150h1v1h-1zM543 150h5v1h-5zM535 151h3v1h-3zM539 151h1v1h-1zM543 151h5v1h-5zM534 152h6v1h-6zM543 152h2v1h-2zM546 152h2v1h-2zM534 153h6v1h-6zM544 153h2v1h-2zM547 153h1v1h-1zM531 154h9v1h-9zM544 154h3v1h-3zM528 155h1v1h-1zM530 155h10v1h-10zM544 155h1v1h-1zM546 155h1v1h-1zM528 156h13v1h-13zM545 156h2v1h-2zM554 156h2v1h-2zM527 157h14v1h-14zM545 157h1v1h-1zM553 157h1v1h-1zM556 157h1v1h-1zM524 158h17v1h-17zM553 158h1v1h-1zM557 158h1v1h-1zM567 158h1v1h-1zM569 158h2v1h-2zM574 158h3v1h-3zM523 159h18v1h-18zM552 159h1v1h-1zM555 159h1v1h-1zM558 159h1v1h-1zM561 159h3v1h-3zM565 159h4v1h-4zM570 159h7v1h-7zM521 160h1v1h-1zM523 160h18v1h-18zM551 160h4v1h-4zM556 160h1v1h-1zM559 160h18v1h-18zM519 161h23v1h-23zM550 161h2v1h-2zM553 161h2v1h-2zM556 161h21v1h-21zM519 162h23v1h-23zM549 162h1v1h-1zM551 162h1v1h-1zM553 162h24v1h-24zM518 163h24v1h-24zM549 163h1v1h-1zM551 163h26v1h-26zM515 164h1v1h-1zM517 164h19v1h-19zM537 164h5v1h-5zM548 164h1v1h-1zM550 164h27v1h-27zM511 165h1v1h-1zM515 165h18v1h-18zM537 165h5v1h-5zM548 165h1v1h-1zM550 165h1v1h-1zM552 165h25v1h-25zM510 166h22v1h-22zM537 166h5v1h-5zM548 166h1v1h-1zM550 166h27v1h-27zM508 167h1v1h-1zM510 167h1v1h-1zM512 167h18v1h-18zM538 167h4v1h-4zM548 167h29v1h-29zM508 168h21v1h-21zM538 168h5v1h-5zM547 168h30v1h-30zM508 169h20v1h-20zM538 169h5v1h-5zM547 169h30v1h-30zM508 170h19v1h-19zM538 170h5v1h-5zM547 170h30v1h-30zM508 171h18v1h-18zM538 171h5v1h-5zM546 171h23v1h-23zM572 171h5v1h-5zM508 172h17v1h-17zM539 172h4v1h-4zM546 172h13v1h-13zM563 172h2v1h-2zM566 172h1v1h-1zM568 172h1v1h-1zM508 173h15v1h-15zM539 173h5v1h-5zM546 173h13v1h-13zM561 173h3v1h-3zM508 174h13v1h-13zM539 174h5v1h-5zM546 174h16v1h-16zM578 174h1v1h-1zM508 175h12v1h-12zM539 175h5v1h-5zM545 175h13v1h-13zM559 175h1v1h-1zM577 175h1v1h-1zM508 176h9v1h-9zM539 176h5v1h-5zM545 176h8v1h-8zM559 176h1v1h-1zM577 176h1v1h-1zM508 177h6v1h-6zM539 177h5v1h-5zM545 177h6v1h-6zM552 177h1v1h-1zM559 177h1v1h-1zM576 177h1v1h-1zM509 178h2v1h-2zM512 178h1v1h-1zM539 178h13v1h-13zM559 178h1v1h-1zM576 178h1v1h-1zM508 179h1v1h-1zM540 179h12v1h-12zM560 179h1v1h-1zM575 179h1v1h-1zM540 180h11v1h-11zM560 180h1v1h-1zM575 180h1v1h-1zM540 181h10v1h-10zM560 181h1v1h-1zM564 181h1v1h-1zM574 181h1v1h-1zM540 182h10v1h-10zM560 182h1v1h-1zM564 182h1v1h-1zM573 182h1v1h-1zM540 183h9v1h-9zM561 183h1v1h-1zM564 183h2v1h-2zM573 183h1v1h-1zM540 184h8v1h-8zM561 184h1v1h-1zM563 184h1v1h-1zM565 184h1v1h-1zM572 184h1v1h-1zM540 185h8v1h-8zM561 185h1v1h-1zM563 185h1v1h-1zM565 185h1v1h-1zM572 185h1v1h-1zM574 185h1v1h-1zM541 186h7v1h-7zM561 186h1v1h-1zM563 186h1v1h-1zM565 186h1v1h-1zM571 186h1v1h-1zM574 186h1v1h-1zM578 186h1v1h-1zM541 187h6v1h-6zM562 187h2v1h-2zM566 187h1v1h-1zM570 187h1v1h-1zM573 187h1v1h-1zM578 187h1v1h-1zM541 188h6v1h-6zM562 188h1v1h-1zM566 188h1v1h-1zM569 188h1v1h-1zM573 188h1v1h-1zM577 188h1v1h-1zM541 189h6v1h-6zM562 189h1v1h-1zM566 189h1v1h-1zM568 189h1v1h-1zM572 189h1v1h-1zM577 189h1v1h-1zM542 190h5v1h-5zM562 190h2v1h-2zM566 190h1v1h-1zM568 190h1v1h-1zM572 190h1v1h-1zM577 190h1v1h-1zM533 191h1v1h-1zM542 191h5v1h-5zM562 191h4v1h-4zM567 191h1v1h-1zM571 191h3v1h-3zM576 191h1v1h-1zM531 192h2v1h-2zM534 192h3v1h-3zM542 192h4v1h-4zM561 192h4v1h-4zM566 192h2v1h-2zM571 192h1v1h-1zM574 192h3v1h-3zM530 193h8v1h-8zM543 193h3v1h-3zM560 193h2v1h-2zM563 193h1v1h-1zM565 193h7v1h-7zM574 193h3v1h-3zM527 194h1v1h-1zM530 194h9v1h-9zM559 194h1v1h-1zM561 194h1v1h-1zM563 194h6v1h-6zM570 194h7v1h-7zM524 195h15v1h-15zM559 195h7v1h-7zM567 195h5v1h-5zM573 195h1v1h-1zM575 195h2v1h-2zM524 196h1v1h-1zM526 196h13v1h-13zM556 196h1v1h-1zM558 196h18v1h-18zM523 197h3v1h-3zM527 197h12v1h-12zM555 197h22v1h-22zM519 198h21v1h-21zM554 198h23v1h-23zM512 199h3v1h-3zM516 199h24v1h-24zM552 199h25v1h-25zM508 200h1v1h-1zM512 200h1v1h-1zM514 200h3v1h-3zM518 200h22v1h-22zM552 200h25v1h-25zM508 201h4v1h-4zM514 201h26v1h-26zM551 201h26v1h-26zM508 202h3v1h-3zM512 202h28v1h-28zM551 202h26v1h-26zM508 203h6v1h-6zM515 203h26v1h-26zM550 203h27v1h-27zM508 204h33v1h-33zM549 204h28v1h-28zM508 205h33v1h-33zM549 205h28v1h-28zM508 206h26v1h-26zM535 206h6v1h-6zM548 206h29v1h-29zM508 207h22v1h-22zM536 207h5v1h-5zM548 207h29v1h-29zM508 208h21v1h-21zM536 208h6v1h-6zM548 208h13v1h-13zM562 208h2v1h-2zM565 208h3v1h-3zM571 208h3v1h-3zM575 208h2v1h-2zM508 209h17v1h-17zM526 209h1v1h-1zM536 209h6v1h-6zM547 209h11v1h-11zM564 209h1v1h-1zM574 209h1v1h-1zM508 210h14v1h-14zM525 210h1v1h-1zM536 210h6v1h-6zM547 210h9v1h-9zM557 210h1v1h-1zM508 211h10v1h-10zM519 211h2v1h-2zM537 211h5v1h-5zM547 211h9v1h-9zM557 211h1v1h-1zM508 212h11v1h-11zM537 212h5v1h-5zM546 212h9v1h-9zM557 212h1v1h-1zM508 213h8v1h-8zM537 213h5v1h-5zM546 213h9v1h-9zM556 213h1v1h-1zM508 214h1v1h-1zM510 214h5v1h-5zM537 214h6v1h-6zM546 214h8v1h-8zM556 214h1v1h-1zM509 215h3v1h-3zM537 215h6v1h-6zM545 215h7v1h-7zM553 215h1v1h-1zM555 215h1v1h-1zM537 216h6v1h-6zM545 216h6v1h-6zM552 216h1v1h-1zM555 216h1v1h-1zM538 217h5v1h-5zM545 217h6v1h-6zM552 217h1v1h-1zM554 217h1v1h-1zM538 218h12v1h-12zM552 218h1v1h-1zM554 218h1v1h-1zM538 219h12v1h-12zM551 219h1v1h-1zM553 219h1v1h-1zM538 220h12v1h-12zM551 220h1v1h-1zM553 220h1v1h-1zM538 221h11v1h-11zM550 221h1v1h-1zM552 221h1v1h-1zM539 222h10v1h-10zM550 222h1v1h-1zM552 222h1v1h-1zM539 223h10v1h-10zM551 223h1v1h-1zM539 224h10v1h-10zM551 224h1v1h-1zM539 225h9v1h-9zM550 225h1v1h-1zM539 226h9v1h-9zM550 226h1v1h-1zM540 227h8v1h-8zM540 228h8v1h-8zM565 228h3v1h-3zM575 228h2v1h-2zM534 229h1v1h-1zM540 229h8v1h-8zM564 229h1v1h-1zM568 229h1v1h-1zM574 229h1v1h-1zM534 230h4v1h-4zM540 230h7v1h-7zM564 230h1v1h-1zM569 230h1v1h-1zM574 230h1v1h-1zM530 231h5v1h-5zM536 231h1v1h-1zM538 231h1v1h-1zM541 231h6v1h-6zM563 231h1v1h-1zM569 231h1v1h-1zM573 231h1v1h-1zM526 232h1v1h-1zM528 232h12v1h-12zM541 232h6v1h-6zM563 232h2v1h-2zM567 232h2v1h-2zM570 232h1v1h-1zM572 232h2v1h-2zM519 233h1v1h-1zM522 233h4v1h-4zM527 233h13v1h-13zM541 233h4v1h-4zM546 233h1v1h-1zM557 233h1v1h-1zM561 233h16v1h-16zM510 234h1v1h-1zM513 234h1v1h-1zM518 234h23v1h-23zM542 234h5v1h-5zM555 234h22v1h-22zM510 235h5v1h-5zM516 235h25v1h-25zM542 235h2v1h-2zM545 235h1v1h-1zM551 235h26v1h-26zM508 236h34v1h-34zM543 236h1v1h-1zM545 236h1v1h-1zM550 236h27v1h-27zM508 237h34v1h-34zM543 237h1v1h-1zM545 237h1v1h-1zM549 237h28v1h-28zM508 238h34v1h-34zM543 238h1v1h-1zM545 238h1v1h-1zM548 238h29v1h-29zM508 239h37v1h-37zM547 239h30v1h-30zM508 240h35v1h-35zM544 240h1v1h-1zM547 240h30v1h-30zM508 241h36v1h-36zM546 241h31v1h-31zM508 242h27v1h-27zM536 242h8v1h-8zM546 242h31v1h-31zM508 243h36v1h-36zM545 243h24v1h-24zM570 243h7v1h-7zM508 244h20v1h-20zM531 244h2v1h-2zM537 244h40v1h-40zM508 245h16v1h-16zM525 245h2v1h-2zM538 245h20v1h-20zM559 245h6v1h-6zM566 245h1v1h-1zM568 245h3v1h-3zM572 245h3v1h-3zM508 246h12v1h-12zM521 246h2v1h-2zM524 246h1v1h-1zM538 246h16v1h-16zM556 246h3v1h-3zM561 246h1v1h-1zM565 246h1v1h-1zM567 246h5v1h-5zM573 246h1v1h-1zM575 246h2v1h-2zM508 247h9v1h-9zM518 247h1v1h-1zM520 247h2v1h-2zM523 247h1v1h-1zM539 247h18v1h-18zM558 247h3v1h-3zM566 247h3v1h-3zM574 247h2v1h-2zM508 248h1v1h-1zM510 248h5v1h-5zM516 248h1v1h-1zM539 248h14v1h-14zM559 248h1v1h-1zM567 248h1v1h-1zM508 249h2v1h-2zM511 249h1v1h-1zM515 249h1v1h-1zM539 249h13v1h-13zM560 249h1v1h-1zM566 249h1v1h-1zM540 250h10v1h-10zM561 250h2v1h-2zM564 250h2v1h-2zM540 251h9v1h-9zM563 251h1v1h-1zM541 252h8v1h-8zM541 253h7v1h-7zM542 254h6v1h-6zM543 255h5v1h-5zM209 256h1v1h-1zM544 256h3v1h-3zM210 257h1v1h-1zM208 258h1v1h-1zM215 259h1v1h-1zM210 260h2v1h-2zM218 260h1v1h-1zM206 261h2v1h-2zM212 261h3v1h-3zM220 261h2v1h-2zM211 262h2v1h-2zM214 262h1v1h-1zM216 262h2v1h-2zM222 262h1v1h-1zM224 262h1v1h-1zM200 263h1v1h-1zM205 263h1v1h-1zM218 263h1v1h-1zM221 263h1v1h-1zM226 263h1v1h-1zM214 264h1v1h-1zM216 264h1v1h-1zM223 264h1v1h-1zM207 265h1v1h-1zM212 265h1v1h-1zM218 265h1v1h-1zM227 265h1v1h-1zM208 266h1v1h-1zM210 266h2v1h-2zM214 266h1v1h-1zM216 266h1v1h-1zM220 266h1v1h-1zM224 266h2v1h-2zM203 267h2v1h-2zM209 267h1v1h-1zM211 267h1v1h-1zM213 267h1v1h-1zM215 267h1v1h-1zM219 267h1v1h-1zM198 268h1v1h-1zM213 268h2v1h-2zM216 268h1v1h-1zM199 269h1v1h-1zM201 269h1v1h-1zM203 269h1v1h-1zM205 269h1v1h-1zM215 269h1v1h-1zM221 269h3v1h-3zM209 270h2v1h-2zM217 270h1v1h-1zM219 270h1v1h-1zM194 271h1v1h-1zM199 271h2v1h-2zM202 271h1v1h-1zM205 271h1v1h-1zM212 271h1v1h-1zM214 271h1v1h-1zM217 271h1v1h-1zM221 271h1v1h-1zM224 271h1v1h-1zM203 272h2v1h-2zM207 272h1v1h-1zM209 272h1v1h-1zM215 272h1v1h-1zM217 272h1v1h-1zM209 273h2v1h-2zM213 273h2v1h-2zM199 274h1v1h-1zM203 274h7v1h-7zM211 274h1v1h-1zM227 274h1v1h-1zM187 275h1v1h-1zM198 275h1v1h-1zM200 275h2v1h-2zM204 275h1v1h-1zM207 275h1v1h-1zM216 275h1v1h-1zM223 275h1v1h-1zM204 276h1v1h-1zM206 276h1v1h-1zM209 276h2v1h-2zM220 276h1v1h-1zM222 276h1v1h-1zM224 276h1v1h-1zM197 277h1v1h-1zM199 277h1v1h-1zM203 277h1v1h-1zM207 277h2v1h-2zM210 277h1v1h-1zM217 277h2v1h-2zM221 277h1v1h-1zM191 278h1v1h-1zM198 278h5v1h-5zM205 278h1v1h-1zM207 278h1v1h-1zM210 278h1v1h-1zM214 278h2v1h-2zM218 278h1v1h-1zM196 279h1v1h-1zM199 279h2v1h-2zM202 279h1v1h-1zM208 279h1v1h-1zM217 279h2v1h-2zM195 280h1v1h-1zM200 280h2v1h-2zM204 280h1v1h-1zM206 280h2v1h-2zM217 280h1v1h-1zM201 281h1v1h-1zM203 281h1v1h-1zM206 281h5v1h-5zM212 281h1v1h-1zM215 281h1v1h-1zM217 281h1v1h-1zM223 281h1v1h-1zM191 282h1v1h-1zM202 282h4v1h-4zM208 282h3v1h-3zM214 282h1v1h-1zM216 282h1v1h-1zM197 283h1v1h-1zM199 283h1v1h-1zM201 283h3v1h-3zM205 283h4v1h-4zM210 283h1v1h-1zM212 283h1v1h-1zM217 283h1v1h-1zM192 284h1v1h-1zM197 284h4v1h-4zM202 284h4v1h-4zM208 284h2v1h-2zM212 284h2v1h-2zM218 284h1v1h-1zM199 285h1v1h-1zM201 285h1v1h-1zM203 285h1v1h-1zM205 285h2v1h-2zM208 285h1v1h-1zM210 285h3v1h-3zM215 285h1v1h-1zM218 285h1v1h-1zM227 285h1v1h-1zM192 286h1v1h-1zM199 286h3v1h-3zM203 286h3v1h-3zM207 286h1v1h-1zM210 286h3v1h-3zM191 287h3v1h-3zM195 287h1v1h-1zM197 287h1v1h-1zM199 287h2v1h-2zM203 287h3v1h-3zM208 287h2v1h-2zM211 287h3v1h-3zM215 287h2v1h-2zM219 287h1v1h-1zM186 288h1v1h-1zM191 288h1v1h-1zM196 288h2v1h-2zM202 288h2v1h-2zM205 288h3v1h-3zM209 288h1v1h-1zM215 288h1v1h-1zM217 288h2v1h-2zM221 288h1v1h-1zM197 289h2v1h-2zM201 289h1v1h-1zM203 289h5v1h-5zM211 289h3v1h-3zM191 290h1v1h-1zM196 290h2v1h-2zM200 290h2v1h-2zM205 290h2v1h-2zM208 290h2v1h-2zM211 290h2v1h-2zM192 291h3v1h-3zM199 291h2v1h-2zM202 291h1v1h-1zM208 291h1v1h-1zM210 291h2v1h-2zM191 292h3v1h-3zM195 292h1v1h-1zM197 292h9v1h-9zM207 292h3v1h-3zM211 292h5v1h-5zM185 293h1v1h-1zM191 293h1v1h-1zM193 293h1v1h-1zM195 293h6v1h-6zM203 293h1v1h-1zM206 293h1v1h-1zM208 293h1v1h-1zM211 293h1v1h-1zM216 293h1v1h-1zM184 294h1v1h-1zM189 294h2v1h-2zM192 294h1v1h-1zM196 294h1v1h-1zM198 294h2v1h-2zM201 294h2v1h-2zM204 294h2v1h-2zM207 294h4v1h-4zM212 294h1v1h-1zM215 294h1v1h-1zM186 295h1v1h-1zM193 295h3v1h-3zM197 295h4v1h-4zM202 295h2v1h-2zM205 295h2v1h-2zM208 295h2v1h-2zM211 295h1v1h-1zM214 295h1v1h-1zM189 296h2v1h-2zM192 296h1v1h-1zM194 296h2v1h-2zM198 296h2v1h-2zM201 296h1v1h-1zM204 296h5v1h-5zM210 296h1v1h-1zM213 296h1v1h-1zM185 297h1v1h-1zM189 297h3v1h-3zM194 297h1v1h-1zM196 297h7v1h-7zM204 297h2v1h-2zM207 297h1v1h-1zM209 297h1v1h-1zM211 297h2v1h-2zM214 297h1v1h-1zM224 297h1v1h-1zM185 298h1v1h-1zM188 298h1v1h-1zM191 298h1v1h-1zM193 298h8v1h-8zM202 298h4v1h-4zM207 298h4v1h-4zM213 298h3v1h-3zM217 298h1v1h-1zM223 298h1v1h-1zM225 298h1v1h-1zM183 299h1v1h-1zM188 299h1v1h-1zM190 299h8v1h-8zM199 299h2v1h-2zM202 299h2v1h-2zM205 299h2v1h-2zM208 299h1v1h-1zM211 299h1v1h-1zM213 299h1v1h-1zM187 300h1v1h-1zM191 300h1v1h-1zM193 300h4v1h-4zM198 300h3v1h-3zM202 300h4v1h-4zM207 300h2v1h-2zM178 301h1v1h-1zM180 301h1v1h-1zM188 301h1v1h-1zM191 301h1v1h-1zM193 301h1v1h-1zM195 301h4v1h-4zM200 301h2v1h-2zM203 301h3v1h-3zM210 301h1v1h-1zM214 301h1v1h-1zM187 302h1v1h-1zM192 302h3v1h-3zM196 302h11v1h-11zM209 302h1v1h-1zM215 302h1v1h-1zM186 303h1v1h-1zM188 303h1v1h-1zM190 303h4v1h-4zM196 303h6v1h-6zM205 303h3v1h-3zM209 303h1v1h-1zM185 304h1v1h-1zM188 304h9v1h-9zM198 304h1v1h-1zM200 304h5v1h-5zM206 304h2v1h-2zM212 304h1v1h-1zM216 304h1v1h-1zM184 305h1v1h-1zM188 305h2v1h-2zM192 305h12v1h-12zM206 305h2v1h-2zM209 305h1v1h-1zM173 306h1v1h-1zM182 306h1v1h-1zM187 306h2v1h-2zM190 306h1v1h-1zM192 306h7v1h-7zM200 306h2v1h-2zM203 306h6v1h-6zM185 307h1v1h-1zM188 307h1v1h-1zM191 307h15v1h-15zM207 307h1v1h-1zM209 307h1v1h-1zM212 307h1v1h-1zM214 307h2v1h-2zM183 308h1v1h-1zM188 308h1v1h-1zM190 308h8v1h-8zM199 308h10v1h-10zM210 308h1v1h-1zM216 308h2v1h-2zM181 309h1v1h-1zM185 309h1v1h-1zM187 309h3v1h-3zM191 309h4v1h-4zM196 309h8v1h-8zM205 309h1v1h-1zM207 309h1v1h-1zM172 310h1v1h-1zM181 310h1v1h-1zM187 310h14v1h-14zM202 310h1v1h-1zM204 310h1v1h-1zM206 310h1v1h-1zM181 311h1v1h-1zM187 311h1v1h-1zM192 311h6v1h-6zM199 311h4v1h-4zM204 311h3v1h-3zM208 311h1v1h-1zM182 312h2v1h-2zM186 312h7v1h-7zM194 312h11v1h-11zM179 313h1v1h-1zM182 313h1v1h-1zM184 313h6v1h-6zM192 313h9v1h-9zM202 313h2v1h-2zM206 313h2v1h-2zM209 313h1v1h-1zM212 313h1v1h-1zM174 314h1v1h-1zM178 314h1v1h-1zM186 314h2v1h-2zM189 314h6v1h-6zM196 314h7v1h-7zM204 314h2v1h-2zM207 314h2v1h-2zM173 315h1v1h-1zM179 315h1v1h-1zM185 315h1v1h-1zM188 315h12v1h-12zM202 315h3v1h-3zM175 316h1v1h-1zM180 316h2v1h-2zM183 316h2v1h-2zM187 316h18v1h-18zM210 316h1v1h-1zM177 317h1v1h-1zM180 317h1v1h-1zM183 317h1v1h-1zM185 317h18v1h-18zM204 317h3v1h-3zM208 317h1v1h-1zM211 317h1v1h-1zM171 318h1v1h-1zM180 318h2v1h-2zM183 318h2v1h-2zM186 318h8v1h-8zM195 318h10v1h-10zM206 318h1v1h-1zM211 318h1v1h-1zM175 319h1v1h-1zM177 319h1v1h-1zM179 319h8v1h-8zM188 319h2v1h-2zM191 319h8v1h-8zM202 319h3v1h-3zM207 319h1v1h-1zM209 319h1v1h-1zM176 320h1v1h-1zM179 320h1v1h-1zM181 320h3v1h-3zM186 320h2v1h-2zM189 320h10v1h-10zM200 320h2v1h-2zM204 320h1v1h-1zM176 321h1v1h-1zM179 321h1v1h-1zM182 321h4v1h-4zM187 321h4v1h-4zM192 321h8v1h-8zM201 321h2v1h-2zM207 321h2v1h-2zM176 322h1v1h-1zM179 322h4v1h-4zM185 322h8v1h-8zM194 322h6v1h-6zM201 322h3v1h-3zM176 323h2v1h-2zM179 323h7v1h-7zM187 323h1v1h-1zM189 323h10v1h-10zM200 323h4v1h-4zM208 323h1v1h-1zM210 323h1v1h-1zM175 324h2v1h-2zM179 324h1v1h-1zM181 324h10v1h-10zM192 324h1v1h-1zM195 324h5v1h-5zM205 324h1v1h-1zM208 324h2v1h-2zM173 325h1v1h-1zM177 325h1v1h-1zM179 325h1v1h-1zM182 325h1v1h-1zM184 325h3v1h-3zM188 325h9v1h-9zM198 325h5v1h-5zM204 325h1v1h-1zM210 325h1v1h-1zM178 326h17v1h-17zM197 326h5v1h-5zM207 326h1v1h-1zM171 327h1v1h-1zM177 327h23v1h-23zM201 327h4v1h-4zM206 327h1v1h-1zM172 328h2v1h-2zM175 328h2v1h-2zM178 328h1v1h-1zM180 328h4v1h-4zM186 328h12v1h-12zM203 328h1v1h-1zM207 328h2v1h-2zM172 329h3v1h-3zM176 329h2v1h-2zM181 329h16v1h-16zM199 329h2v1h-2zM202 329h1v1h-1zM205 329h1v1h-1zM208 329h1v1h-1zM174 330h2v1h-2zM177 330h5v1h-5zM183 330h9v1h-9zM193 330h8v1h-8zM211 330h1v1h-1zM177 331h1v1h-1zM179 331h17v1h-17zM197 331h4v1h-4zM205 331h1v1h-1zM174 332h2v1h-2zM177 332h1v1h-1zM179 332h10v1h-10zM191 332h3v1h-3zM195 332h4v1h-4zM200 332h1v1h-1zM203 332h1v1h-1zM169 333h1v1h-1zM175 333h1v1h-1zM177 333h1v1h-1zM179 333h10v1h-10zM190 333h7v1h-7zM199 333h2v1h-2zM204 333h1v1h-1zM206 333h1v1h-1zM165 334h1v1h-1zM174 334h1v1h-1zM177 334h2v1h-2zM180 334h9v1h-9zM190 334h7v1h-7zM198 334h1v1h-1zM202 334h2v1h-2zM175 335h1v1h-1zM177 335h12v1h-12zM190 335h5v1h-5zM199 335h1v1h-1zM201 335h1v1h-1zM205 335h1v1h-1zM164 336h1v1h-1zM171 336h5v1h-5zM177 336h18v1h-18zM196 336h2v1h-2zM199 336h4v1h-4zM206 336h1v1h-1zM179 337h2v1h-2zM182 337h8v1h-8zM192 337h2v1h-2zM196 337h4v1h-4zM201 337h1v1h-1zM206 337h1v1h-1zM166 338h1v1h-1zM173 338h20v1h-20zM195 338h4v1h-4zM200 338h1v1h-1zM202 338h1v1h-1zM171 339h5v1h-5zM178 339h17v1h-17zM196 339h1v1h-1zM198 339h2v1h-2zM201 339h1v1h-1zM170 340h1v1h-1zM172 340h2v1h-2zM175 340h19v1h-19zM195 340h5v1h-5zM167 341h1v1h-1zM169 341h1v1h-1zM172 341h6v1h-6zM179 341h7v1h-7zM187 341h4v1h-4zM192 341h1v1h-1zM201 341h1v1h-1zM157 342h1v1h-1zM160 342h1v1h-1zM172 342h5v1h-5zM178 342h4v1h-4zM184 342h13v1h-13zM198 342h1v1h-1zM168 343h3v1h-3zM172 343h1v1h-1zM174 343h4v1h-4zM179 343h5v1h-5zM185 343h1v1h-1zM187 343h6v1h-6zM195 343h1v1h-1zM200 343h1v1h-1zM166 344h2v1h-2zM172 344h1v1h-1zM175 344h5v1h-5zM181 344h9v1h-9zM191 344h1v1h-1zM193 344h1v1h-1zM197 344h1v1h-1zM162 345h1v1h-1zM168 345h1v1h-1zM171 345h9v1h-9zM181 345h2v1h-2zM184 345h4v1h-4zM189 345h4v1h-4zM194 345h1v1h-1zM196 345h1v1h-1zM200 345h1v1h-1zM163 346h1v1h-1zM165 346h1v1h-1zM168 346h2v1h-2zM173 346h8v1h-8zM182 346h9v1h-9zM192 346h3v1h-3zM169 347h3v1h-3zM175 347h8v1h-8zM184 347h2v1h-2zM187 347h4v1h-4zM192 347h1v1h-1zM194 347h1v1h-1zM160 348h1v1h-1zM172 348h2v1h-2zM175 348h3v1h-3zM179 348h1v1h-1zM181 348h13v1h-13zM165 349h1v1h-1zM169 349h1v1h-1zM171 349h1v1h-1zM173 349h5v1h-5zM179 349h7v1h-7zM187 349h6v1h-6zM200 349h1v1h-1zM167 350h1v1h-1zM171 350h1v1h-1zM173 350h3v1h-3zM177 350h8v1h-8zM186 350h3v1h-3zM190 350h3v1h-3zM195 350h1v1h-1zM164 351h1v1h-1zM167 351h1v1h-1zM169 351h3v1h-3zM173 351h7v1h-7zM181 351h5v1h-5zM187 351h5v1h-5zM193 351h1v1h-1zM195 351h2v1h-2zM198 351h1v1h-1zM158 352h1v1h-1zM166 352h1v1h-1zM169 352h1v1h-1zM173 352h11v1h-11zM187 352h2v1h-2zM192 352h2v1h-2zM167 353h1v1h-1zM170 353h4v1h-4zM176 353h6v1h-6zM183 353h2v1h-2zM186 353h1v1h-1zM188 353h1v1h-1zM190 353h1v1h-1zM198 353h1v1h-1zM200 353h1v1h-1zM162 354h1v1h-1zM168 354h1v1h-1zM172 354h2v1h-2zM175 354h1v1h-1zM179 354h2v1h-2zM182 354h4v1h-4zM187 354h1v1h-1zM189 354h3v1h-3zM193 354h1v1h-1zM195 354h1v1h-1zM201 354h1v1h-1zM161 355h1v1h-1zM163 355h1v1h-1zM169 355h2v1h-2zM173 355h4v1h-4zM178 355h2v1h-2zM181 355h1v1h-1zM183 355h4v1h-4zM189 355h2v1h-2zM168 356h1v1h-1zM172 356h6v1h-6zM180 356h5v1h-5zM186 356h5v1h-5zM165 357h1v1h-1zM167 357h1v1h-1zM169 357h1v1h-1zM171 357h8v1h-8zM180 357h4v1h-4zM185 357h2v1h-2zM188 357h2v1h-2zM164 358h1v1h-1zM167 358h1v1h-1zM170 358h4v1h-4zM175 358h8v1h-8zM184 358h3v1h-3zM188 358h2v1h-2zM193 358h1v1h-1zM163 359h2v1h-2zM173 359h1v1h-1zM175 359h5v1h-5zM182 359h5v1h-5zM190 359h2v1h-2zM196 359h1v1h-1zM159 360h2v1h-2zM163 360h2v1h-2zM170 360h1v1h-1zM174 360h4v1h-4zM179 360h2v1h-2zM184 360h3v1h-3zM166 361h1v1h-1zM169 361h1v1h-1zM171 361h10v1h-10zM182 361h3v1h-3zM186 361h1v1h-1zM191 361h2v1h-2zM167 362h2v1h-2zM170 362h1v1h-1zM173 362h2v1h-2zM177 362h7v1h-7zM186 362h2v1h-2zM189 362h1v1h-1zM191 362h1v1h-1zM162 363h1v1h-1zM164 363h1v1h-1zM169 363h3v1h-3zM173 363h5v1h-5zM180 363h4v1h-4zM188 363h1v1h-1zM190 363h1v1h-1zM193 363h1v1h-1zM162 364h1v1h-1zM166 364h3v1h-3zM171 364h2v1h-2zM175 364h2v1h-2zM178 364h5v1h-5zM185 364h4v1h-4zM191 364h1v1h-1zM162 365h1v1h-1zM168 365h3v1h-3zM172 365h2v1h-2zM175 365h1v1h-1zM177 365h1v1h-1zM180 365h3v1h-3zM189 365h1v1h-1zM192 365h1v1h-1zM169 366h2v1h-2zM173 366h1v1h-1zM176 366h1v1h-1zM180 366h1v1h-1zM183 366h1v1h-1zM161 367h1v1h-1zM167 367h1v1h-1zM171 367h3v1h-3zM175 367h1v1h-1zM179 367h1v1h-1zM183 367h1v1h-1zM188 367h1v1h-1zM168 368h1v1h-1zM172 368h6v1h-6zM179 368h4v1h-4zM155 369h1v1h-1zM161 369h1v1h-1zM170 369h4v1h-4zM176 369h1v1h-1zM187 369h1v1h-1zM158 370h1v1h-1zM165 370h2v1h-2zM169 370h1v1h-1zM171 370h2v1h-2zM176 370h1v1h-1zM180 370h1v1h-1zM182 370h1v1h-1zM162 371h1v1h-1zM169 371h2v1h-2zM173 371h1v1h-1zM180 371h1v1h-1zM184 371h1v1h-1zM187 371h1v1h-1zM159 372h1v1h-1zM164 372h1v1h-1zM169 372h3v1h-3zM186 372h2v1h-2zM191 372h1v1h-1zM168 373h2v1h-2zM172 373h1v1h-1zM175 373h2v1h-2zM180 373h1v1h-1zM154 374h1v1h-1zM158 374h2v1h-2zM161 374h1v1h-1zM164 374h1v1h-1zM171 374h1v1h-1zM174 374h3v1h-3zM179 374h1v1h-1zM187 374h1v1h-1zM163 375h1v1h-1zM169 375h1v1h-1zM171 375h4v1h-4zM176 375h1v1h-1zM178 375h2v1h-2zM181 375h1v1h-1zM149 376h1v1h-1zM162 376h1v1h-1zM164 376h1v1h-1zM170 376h1v1h-1zM172 376h2v1h-2zM177 376h1v1h-1zM163 377h2v1h-2zM171 377h2v1h-2zM174 377h1v1h-1zM179 377h2v1h-2zM186 377h1v1h-1zM161 378h2v1h-2zM170 378h1v1h-1zM175 378h2v1h-2zM178 378h1v1h-1zM158 379h1v1h-1zM166 379h1v1h-1zM169 379h1v1h-1zM172 379h1v1h-1zM175 379h1v1h-1zM183 379h1v1h-1zM162 380h1v1h-1zM169 380h1v1h-1zM171 380h1v1h-1zM175 380h2v1h-2zM178 380h1v1h-1zM156 381h1v1h-1zM162 381h1v1h-1zM172 381h1v1h-1zM166 382h3v1h-3zM172 382h1v1h-1zM175 382h1v1h-1zM177 382h1v1h-1zM182 382h1v1h-1zM165 383h2v1h-2zM168 383h1v1h-1zM171 383h3v1h-3zM184 383h1v1h-1zM160 384h3v1h-3zM167 384h1v1h-1zM170 384h2v1h-2zM178 384h1v1h-1zM153 385h1v1h-1zM162 385h3v1h-3zM172 385h1v1h-1zM176 385h1v1h-1zM156 386h1v1h-1zM167 386h1v1h-1zM192 386h1v1h-1zM155 387h2v1h-2zM161 387h2v1h-2zM164 387h2v1h-2zM167 387h1v1h-1zM169 387h1v1h-1zM173 387h1v1h-1zM182 387h1v1h-1zM155 388h1v1h-1zM157 388h1v1h-1zM159 388h1v1h-1zM166 388h2v1h-2zM170 388h1v1h-1zM161 389h1v1h-1zM164 389h1v1h-1zM166 389h1v1h-1zM171 389h2v1h-2zM161 390h1v1h-1zM163 390h1v1h-1zM165 390h3v1h-3zM151 391h1v1h-1zM161 391h1v1h-1zM165 391h1v1h-1zM168 391h1v1h-1zM180 391h1v1h-1zM161 392h1v1h-1zM163 392h1v1h-1zM168 392h2v1h-2zM171 392h1v1h-1zM174 392h2v1h-2zM157 393h1v1h-1zM160 393h2v1h-2zM169 393h1v1h-1zM162 394h1v1h-1zM164 394h2v1h-2zM168 394h2v1h-2zM174 394h1v1h-1zM152 395h1v1h-1zM156 395h1v1h-1zM163 395h1v1h-1zM166 395h1v1h-1zM169 395h1v1h-1zM171 395h1v1h-1zM154 396h1v1h-1zM161 396h1v1h-1zM155 397h1v1h-1zM157 397h2v1h-2zM161 397h1v1h-1zM166 397h1v1h-1zM151 398h1v1h-1zM161 398h1v1h-1zM168 398h1v1h-1zM158 399h1v1h-1zM175 399h1v1h-1zM151 400h1v1h-1zM156 400h1v1h-1zM170 400h1v1h-1zM148 401h1v1h-1zM150 401h1v1h-1zM154 401h1v1h-1zM156 401h1v1h-1zM169 401h1v1h-1zM176 401h1v1h-1zM142 403h1v1h-1zM174 403h1v1h-1zM151 404h1v1h-1zM167 404h1v1h-1zM172 404h1v1h-1zM152 405h2v1h-2zM159 406h1v1h-1zM170 406h1v1h-1zM166 407h1v1h-1zM168 407h1v1h-1zM175 408h1v1h-1zM159 411h1v1h-1zM154 412h1v1h-1zM156 412h1v1h-1zM148 413h1v1h-1zM159 413h1v1h-1zM155 414h1v1h-1zM159 414h1v1h-1zM164 415h1v1h-1zM152 416h1v1h-1zM157 416h1v1h-1zM161 416h1v1h-1zM163 416h1v1h-1zM143 417h1v1h-1zM154 417h2v1h-2zM170 417h1v1h-1zM148 419h1v1h-1zM152 421h1v1h-1zM145 422h1v1h-1zM148 422h1v1h-1zM169 423h1v1h-1zM150 424h1v1h-1zM166 428h1v1h-1z"/><path fill="#33ff00" d="M637 123h1v1h-1zM645 123h2v1h-2zM650 123h2v1h-2zM632 124h1v1h-1zM634 124h2v1h-2zM637 124h4v1h-4zM642 124h10v1h-10zM627 125h12v1h-12zM640 125h8v1h-8zM649 125h3v1h-3zM603 126h6v1h-6zM626 126h1v1h-1zM630 126h12v1h-12zM643 126h9v1h-9zM595 127h2v1h-2zM599 127h4v1h-4zM604 127h2v1h-2zM607 127h3v1h-3zM625 127h1v1h-1zM627 127h25v1h-25zM590 128h2v1h-2zM595 128h1v1h-1zM597 128h14v1h-14zM624 128h1v1h-1zM626 128h26v1h-26zM584 129h4v1h-4zM589 129h22v1h-22zM623 129h29v1h-29zM226 130h1v1h-1zM584 130h28v1h-28zM622 130h30v1h-30zM224 131h1v1h-1zM226 131h2v1h-2zM232 131h1v1h-1zM584 131h29v1h-29zM622 131h30v1h-30zM224 132h1v1h-1zM227 132h2v1h-2zM584 132h30v1h-30zM621 132h31v1h-31zM216 133h1v1h-1zM220 133h1v1h-1zM223 133h2v1h-2zM229 133h1v1h-1zM584 133h30v1h-30zM621 133h31v1h-31zM220 134h3v1h-3zM224 134h3v1h-3zM230 134h1v1h-1zM233 134h1v1h-1zM584 134h31v1h-31zM621 134h11v1h-11zM633 134h12v1h-12zM647 134h1v1h-1zM650 134h2v1h-2zM221 135h4v1h-4zM226 135h1v1h-1zM228 135h5v1h-5zM584 135h31v1h-31zM620 135h10v1h-10zM632 135h2v1h-2zM635 135h2v1h-2zM641 135h11v1h-11zM221 136h2v1h-2zM224 136h5v1h-5zM230 136h2v1h-2zM584 136h33v1h-33zM619 136h9v1h-9zM630 136h6v1h-6zM637 136h11v1h-11zM650 136h1v1h-1zM215 137h1v1h-1zM218 137h1v1h-1zM220 137h12v1h-12zM233 137h1v1h-1zM584 137h19v1h-19zM604 137h22v1h-22zM629 137h2v1h-2zM634 137h1v1h-1zM636 137h3v1h-3zM640 137h1v1h-1zM643 137h1v1h-1zM648 137h4v1h-4zM217 138h14v1h-14zM232 138h2v1h-2zM584 138h6v1h-6zM591 138h5v1h-5zM597 138h2v1h-2zM600 138h26v1h-26zM627 138h3v1h-3zM644 138h1v1h-1zM650 138h1v1h-1zM215 139h1v1h-1zM217 139h14v1h-14zM232 139h1v1h-1zM234 139h1v1h-1zM586 139h2v1h-2zM589 139h5v1h-5zM595 139h5v1h-5zM601 139h1v1h-1zM603 139h1v1h-1zM609 139h16v1h-16zM626 139h1v1h-1zM645 139h5v1h-5zM215 140h17v1h-17zM584 140h1v1h-1zM586 140h3v1h-3zM591 140h3v1h-3zM595 140h1v1h-1zM597 140h1v1h-1zM609 140h1v1h-1zM611 140h12v1h-12zM624 140h2v1h-2zM213 141h20v1h-20zM585 141h1v1h-1zM588 141h3v1h-3zM594 141h1v1h-1zM596 141h1v1h-1zM610 141h16v1h-16zM213 142h20v1h-20zM584 142h1v1h-1zM610 142h1v1h-1zM612 142h13v1h-13zM212 143h1v1h-1zM214 143h18v1h-18zM234 143h2v1h-2zM610 143h1v1h-1zM613 143h11v1h-11zM212 144h2v1h-2zM215 144h18v1h-18zM611 144h1v1h-1zM613 144h11v1h-11zM206 145h1v1h-1zM211 145h24v1h-24zM611 145h1v1h-1zM613 145h3v1h-3zM617 145h6v1h-6zM208 146h26v1h-26zM612 146h1v1h-1zM614 146h6v1h-6zM621 146h2v1h-2zM206 147h1v1h-1zM209 147h26v1h-26zM612 147h1v1h-1zM615 147h4v1h-4zM621 147h2v1h-2zM205 148h1v1h-1zM208 148h25v1h-25zM234 148h1v1h-1zM613 148h3v1h-3zM617 148h1v1h-1zM619 148h3v1h-3zM207 149h26v1h-26zM616 149h6v1h-6zM205 150h30v1h-30zM618 150h1v1h-1zM621 150h1v1h-1zM202 151h1v1h-1zM204 151h29v1h-29zM234 151h1v1h-1zM619 151h2v1h-2zM204 152h15v1h-15zM220 152h3v1h-3zM224 152h10v1h-10zM236 152h1v1h-1zM204 153h29v1h-29zM202 154h31v1h-31zM202 155h31v1h-31zM200 156h33v1h-33zM198 157h3v1h-3zM202 157h32v1h-32zM199 158h32v1h-32zM232 158h1v1h-1zM592 158h3v1h-3zM644 158h2v1h-2zM197 159h1v1h-1zM199 159h35v1h-35zM591 159h1v1h-1zM595 159h1v1h-1zM641 159h3v1h-3zM646 159h3v1h-3zM197 160h36v1h-36zM590 160h1v1h-1zM596 160h1v1h-1zM640 160h1v1h-1zM649 160h1v1h-1zM197 161h36v1h-36zM590 161h1v1h-1zM596 161h1v1h-1zM638 161h2v1h-2zM650 161h2v1h-2zM197 162h16v1h-16zM214 162h19v1h-19zM589 162h1v1h-1zM597 162h1v1h-1zM601 162h1v1h-1zM608 162h1v1h-1zM631 162h2v1h-2zM637 162h1v1h-1zM196 163h36v1h-36zM584 163h6v1h-6zM595 163h5v1h-5zM601 163h2v1h-2zM604 163h4v1h-4zM609 163h1v1h-1zM626 163h1v1h-1zM631 163h1v1h-1zM633 163h1v1h-1zM635 163h2v1h-2zM646 163h4v1h-4zM196 164h35v1h-35zM233 164h1v1h-1zM586 164h1v1h-1zM588 164h3v1h-3zM592 164h3v1h-3zM596 164h5v1h-5zM602 164h2v1h-2zM605 164h9v1h-9zM626 164h3v1h-3zM630 164h1v1h-1zM634 164h6v1h-6zM642 164h4v1h-4zM650 164h2v1h-2zM195 165h35v1h-35zM231 165h2v1h-2zM234 165h1v1h-1zM585 165h1v1h-1zM587 165h19v1h-19zM607 165h5v1h-5zM614 165h1v1h-1zM624 165h2v1h-2zM629 165h3v1h-3zM634 165h1v1h-1zM636 165h8v1h-8zM646 165h1v1h-1zM648 165h4v1h-4zM195 166h37v1h-37zM584 166h31v1h-31zM623 166h1v1h-1zM625 166h1v1h-1zM627 166h1v1h-1zM629 166h3v1h-3zM633 166h7v1h-7zM641 166h11v1h-11zM195 167h36v1h-36zM232 167h1v1h-1zM584 167h32v1h-32zM620 167h2v1h-2zM623 167h29v1h-29zM193 168h37v1h-37zM231 168h1v1h-1zM584 168h32v1h-32zM618 168h1v1h-1zM620 168h1v1h-1zM622 168h30v1h-30zM192 169h38v1h-38zM584 169h34v1h-34zM619 169h1v1h-1zM621 169h1v1h-1zM623 169h29v1h-29zM192 170h39v1h-39zM584 170h37v1h-37zM622 170h30v1h-30zM192 171h37v1h-37zM584 171h68v1h-68zM189 172h1v1h-1zM192 172h40v1h-40zM584 172h68v1h-68zM191 173h41v1h-41zM584 173h68v1h-68zM190 174h40v1h-40zM584 174h3v1h-3zM588 174h3v1h-3zM592 174h1v1h-1zM594 174h2v1h-2zM597 174h8v1h-8zM606 174h2v1h-2zM609 174h33v1h-33zM643 174h1v1h-1zM646 174h4v1h-4zM651 174h1v1h-1zM190 175h18v1h-18zM209 175h1v1h-1zM211 175h20v1h-20zM584 175h1v1h-1zM586 175h4v1h-4zM591 175h3v1h-3zM596 175h2v1h-2zM599 175h1v1h-1zM604 175h2v1h-2zM608 175h1v1h-1zM612 175h15v1h-15zM629 175h5v1h-5zM635 175h5v1h-5zM641 175h5v1h-5zM647 175h4v1h-4zM191 176h18v1h-18zM211 176h21v1h-21zM585 176h2v1h-2zM590 176h1v1h-1zM612 176h15v1h-15zM629 176h4v1h-4zM634 176h2v1h-2zM639 176h1v1h-1zM642 176h1v1h-1zM644 176h3v1h-3zM649 176h1v1h-1zM187 177h2v1h-2zM190 177h19v1h-19zM211 177h18v1h-18zM584 177h1v1h-1zM613 177h12v1h-12zM626 177h4v1h-4zM631 177h1v1h-1zM633 177h1v1h-1zM635 177h1v1h-1zM640 177h2v1h-2zM643 177h1v1h-1zM650 177h2v1h-2zM188 178h40v1h-40zM615 178h8v1h-8zM624 178h2v1h-2zM628 178h1v1h-1zM632 178h1v1h-1zM634 178h1v1h-1zM640 178h1v1h-1zM642 178h1v1h-1zM188 179h34v1h-34zM223 179h5v1h-5zM229 179h1v1h-1zM615 179h6v1h-6zM622 179h2v1h-2zM625 179h1v1h-1zM628 179h1v1h-1zM632 179h2v1h-2zM635 179h2v1h-2zM640 179h2v1h-2zM188 180h41v1h-41zM616 180h2v1h-2zM621 180h2v1h-2zM625 180h3v1h-3zM637 180h3v1h-3zM188 181h40v1h-40zM616 181h2v1h-2zM620 181h2v1h-2zM185 182h23v1h-23zM209 182h20v1h-20zM617 182h3v1h-3zM621 182h1v1h-1zM187 183h1v1h-1zM189 183h20v1h-20zM210 183h10v1h-10zM221 183h6v1h-6zM228 183h1v1h-1zM618 183h1v1h-1zM621 183h1v1h-1zM187 184h41v1h-41zM619 184h2v1h-2zM187 185h40v1h-40zM186 186h41v1h-41zM186 187h42v1h-42zM183 188h1v1h-1zM185 188h41v1h-41zM227 188h1v1h-1zM183 189h41v1h-41zM225 189h3v1h-3zM184 190h41v1h-41zM226 190h1v1h-1zM184 191h1v1h-1zM186 191h12v1h-12zM199 191h27v1h-27zM184 192h2v1h-2zM187 192h38v1h-38zM226 192h1v1h-1zM184 193h40v1h-40zM183 194h23v1h-23zM207 194h2v1h-2zM210 194h13v1h-13zM225 194h1v1h-1zM181 195h1v1h-1zM184 195h39v1h-39zM225 195h1v1h-1zM184 196h39v1h-39zM224 196h1v1h-1zM182 197h1v1h-1zM184 197h11v1h-11zM196 197h28v1h-28zM181 198h1v1h-1zM184 198h40v1h-40zM630 198h1v1h-1zM181 199h1v1h-1zM184 199h38v1h-38zM628 199h2v1h-2zM631 199h2v1h-2zM648 199h1v1h-1zM651 199h1v1h-1zM180 200h1v1h-1zM182 200h1v1h-1zM185 200h36v1h-36zM223 200h2v1h-2zM625 200h6v1h-6zM632 200h2v1h-2zM642 200h2v1h-2zM645 200h2v1h-2zM648 200h3v1h-3zM182 201h1v1h-1zM185 201h2v1h-2zM188 201h34v1h-34zM588 201h1v1h-1zM599 201h1v1h-1zM606 201h2v1h-2zM609 201h4v1h-4zM624 201h1v1h-1zM627 201h6v1h-6zM634 201h18v1h-18zM181 202h1v1h-1zM183 202h4v1h-4zM188 202h31v1h-31zM584 202h1v1h-1zM586 202h2v1h-2zM589 202h1v1h-1zM592 202h3v1h-3zM596 202h2v1h-2zM599 202h3v1h-3zM603 202h8v1h-8zM613 202h1v1h-1zM623 202h1v1h-1zM626 202h26v1h-26zM183 203h1v1h-1zM185 203h21v1h-21zM207 203h11v1h-11zM221 203h1v1h-1zM584 203h28v1h-28zM613 203h1v1h-1zM622 203h30v1h-30zM182 204h34v1h-34zM217 204h1v1h-1zM220 204h1v1h-1zM584 204h31v1h-31zM620 204h32v1h-32zM181 205h1v1h-1zM183 205h1v1h-1zM185 205h33v1h-33zM584 205h31v1h-31zM616 205h1v1h-1zM619 205h1v1h-1zM621 205h31v1h-31zM182 206h1v1h-1zM184 206h34v1h-34zM584 206h35v1h-35zM621 206h31v1h-31zM185 207h30v1h-30zM216 207h1v1h-1zM218 207h1v1h-1zM584 207h34v1h-34zM620 207h32v1h-32zM183 208h1v1h-1zM185 208h31v1h-31zM217 208h1v1h-1zM584 208h33v1h-33zM618 208h34v1h-34zM180 209h1v1h-1zM183 209h1v1h-1zM186 209h30v1h-30zM584 209h68v1h-68zM183 210h1v1h-1zM186 210h29v1h-29zM584 210h60v1h-60zM645 210h7v1h-7zM184 211h2v1h-2zM187 211h26v1h-26zM214 211h1v1h-1zM584 211h6v1h-6zM591 211h14v1h-14zM606 211h28v1h-28zM635 211h2v1h-2zM638 211h3v1h-3zM642 211h1v1h-1zM644 211h5v1h-5zM650 211h2v1h-2zM185 212h1v1h-1zM187 212h27v1h-27zM584 212h7v1h-7zM592 212h6v1h-6zM600 212h4v1h-4zM609 212h18v1h-18zM628 212h1v1h-1zM630 212h1v1h-1zM632 212h1v1h-1zM635 212h1v1h-1zM642 212h3v1h-3zM647 212h1v1h-1zM188 213h1v1h-1zM190 213h22v1h-22zM213 213h1v1h-1zM584 213h1v1h-1zM587 213h2v1h-2zM590 213h1v1h-1zM594 213h3v1h-3zM600 213h1v1h-1zM603 213h1v1h-1zM605 213h1v1h-1zM607 213h2v1h-2zM610 213h1v1h-1zM612 213h18v1h-18zM185 214h2v1h-2zM188 214h16v1h-16zM205 214h5v1h-5zM585 214h2v1h-2zM589 214h1v1h-1zM604 214h1v1h-1zM606 214h1v1h-1zM612 214h12v1h-12zM626 214h1v1h-1zM187 215h20v1h-20zM208 215h3v1h-3zM613 215h10v1h-10zM626 215h1v1h-1zM189 216h1v1h-1zM191 216h15v1h-15zM208 216h1v1h-1zM210 216h1v1h-1zM614 216h9v1h-9zM625 216h1v1h-1zM188 217h1v1h-1zM190 217h1v1h-1zM192 217h2v1h-2zM195 217h6v1h-6zM204 217h1v1h-1zM207 217h1v1h-1zM615 217h7v1h-7zM624 217h1v1h-1zM186 218h2v1h-2zM191 218h1v1h-1zM194 218h4v1h-4zM199 218h2v1h-2zM202 218h4v1h-4zM615 218h1v1h-1zM617 218h4v1h-4zM623 218h1v1h-1zM187 219h3v1h-3zM192 219h1v1h-1zM194 219h8v1h-8zM204 219h1v1h-1zM208 219h1v1h-1zM616 219h1v1h-1zM619 219h1v1h-1zM622 219h1v1h-1zM188 220h3v1h-3zM192 220h1v1h-1zM194 220h1v1h-1zM197 220h4v1h-4zM202 220h1v1h-1zM616 220h1v1h-1zM621 220h1v1h-1zM185 221h1v1h-1zM192 221h2v1h-2zM195 221h1v1h-1zM617 221h1v1h-1zM621 221h1v1h-1zM195 222h1v1h-1zM618 222h3v1h-3zM193 223h1v1h-1zM198 223h1v1h-1zM201 223h1v1h-1zM191 224h1v1h-1zM602 235h2v1h-2zM636 235h3v1h-3zM646 235h4v1h-4zM598 236h1v1h-1zM602 236h1v1h-1zM604 236h1v1h-1zM607 236h2v1h-2zM634 236h3v1h-3zM638 236h2v1h-2zM645 236h1v1h-1zM650 236h2v1h-2zM588 237h2v1h-2zM592 237h2v1h-2zM595 237h1v1h-1zM597 237h1v1h-1zM599 237h1v1h-1zM601 237h9v1h-9zM612 237h1v1h-1zM629 237h2v1h-2zM633 237h3v1h-3zM638 237h7v1h-7zM646 237h6v1h-6zM584 238h11v1h-11zM596 238h5v1h-5zM602 238h12v1h-12zM626 238h1v1h-1zM629 238h23v1h-23zM584 239h29v1h-29zM614 239h1v1h-1zM626 239h10v1h-10zM637 239h15v1h-15zM584 240h33v1h-33zM625 240h27v1h-27zM584 241h32v1h-32zM617 241h1v1h-1zM623 241h29v1h-29zM584 242h33v1h-33zM618 242h1v1h-1zM623 242h29v1h-29zM584 243h35v1h-35zM622 243h30v1h-30zM584 244h68v1h-68zM584 245h68v1h-68zM584 246h68v1h-68zM584 247h12v1h-12zM597 247h1v1h-1zM599 247h3v1h-3zM603 247h4v1h-4zM608 247h44v1h-44zM584 248h1v1h-1zM586 248h18v1h-18zM605 248h1v1h-1zM608 248h26v1h-26zM635 248h11v1h-11zM650 248h1v1h-1zM584 249h4v1h-4zM589 249h2v1h-2zM593 249h1v1h-1zM596 249h1v1h-1zM598 249h1v1h-1zM606 249h2v1h-2zM612 249h18v1h-18zM633 249h6v1h-6zM640 249h1v1h-1zM643 249h2v1h-2zM648 249h2v1h-2zM584 250h1v1h-1zM588 250h1v1h-1zM613 250h14v1h-14zM628 250h1v1h-1zM634 250h1v1h-1zM639 250h3v1h-3zM645 250h4v1h-4zM614 251h12v1h-12zM642 251h4v1h-4zM614 252h10v1h-10zM615 253h8v1h-8zM617 254h2v1h-2zM620 254h2v1h-2zM619 255h1v1h-1z"/><path fill="#8a00ff" d="M492 124h1v1h-1zM459 125h1v1h-1zM478 125h3v1h-3zM482 125h1v1h-1zM484 125h1v1h-1zM491 125h1v1h-1zM493 125h1v1h-1zM449 126h2v1h-2zM452 126h1v1h-1zM455 126h1v1h-1zM457 126h2v1h-2zM460 126h3v1h-3zM477 126h5v1h-5zM483 126h1v1h-1zM485 126h6v1h-6zM494 126h2v1h-2zM499 126h3v1h-3zM445 127h4v1h-4zM451 127h1v1h-1zM453 127h2v1h-2zM456 127h8v1h-8zM476 127h3v1h-3zM481 127h3v1h-3zM485 127h1v1h-1zM488 127h2v1h-2zM491 127h11v1h-11zM439 128h3v1h-3zM443 128h2v1h-2zM448 128h1v1h-1zM450 128h15v1h-15zM471 128h6v1h-6zM478 128h1v1h-1zM480 128h22v1h-22zM433 129h4v1h-4zM438 129h1v1h-1zM440 129h1v1h-1zM442 129h1v1h-1zM444 129h22v1h-22zM470 129h1v1h-1zM472 129h3v1h-3zM476 129h26v1h-26zM433 130h3v1h-3zM437 130h3v1h-3zM441 130h26v1h-26zM469 130h1v1h-1zM471 130h2v1h-2zM474 130h28v1h-28zM433 131h36v1h-36zM471 131h31v1h-31zM433 132h69v1h-69zM433 133h69v1h-69zM433 134h69v1h-69zM433 135h69v1h-69zM433 136h27v1h-27zM461 136h41v1h-41zM433 137h21v1h-21zM455 137h1v1h-1zM458 137h1v1h-1zM460 137h1v1h-1zM462 137h20v1h-20zM483 137h3v1h-3zM487 137h1v1h-1zM493 137h4v1h-4zM499 137h1v1h-1zM501 137h1v1h-1zM433 138h10v1h-10zM444 138h6v1h-6zM452 138h3v1h-3zM458 138h1v1h-1zM462 138h1v1h-1zM464 138h12v1h-12zM477 138h3v1h-3zM481 138h1v1h-1zM485 138h2v1h-2zM494 138h1v1h-1zM434 139h6v1h-6zM445 139h2v1h-2zM459 139h1v1h-1zM465 139h12v1h-12zM478 139h1v1h-1zM480 139h1v1h-1zM482 139h1v1h-1zM493 139h1v1h-1zM434 140h1v1h-1zM437 140h1v1h-1zM460 140h1v1h-1zM465 140h9v1h-9zM478 140h1v1h-1zM483 140h1v1h-1zM492 140h1v1h-1zM433 141h1v1h-1zM461 141h1v1h-1zM466 141h7v1h-7zM477 141h1v1h-1zM484 141h1v1h-1zM490 141h2v1h-2zM462 142h4v1h-4zM467 142h5v1h-5zM476 142h1v1h-1zM485 142h5v1h-5zM468 143h1v1h-1zM470 143h1v1h-1zM475 143h1v1h-1zM469 144h1v1h-1zM473 144h2v1h-2zM470 145h3v1h-3zM254 152h1v1h-1zM234 154h1v1h-1zM246 154h1v1h-1zM253 154h4v1h-4zM250 155h1v1h-1zM252 155h2v1h-2zM242 156h1v1h-1zM247 156h2v1h-2zM250 156h1v1h-1zM253 156h1v1h-1zM244 157h1v1h-1zM247 157h2v1h-2zM251 157h2v1h-2zM242 158h3v1h-3zM246 158h1v1h-1zM248 158h2v1h-2zM242 159h4v1h-4zM247 159h5v1h-5zM256 159h1v1h-1zM238 160h1v1h-1zM242 160h1v1h-1zM246 160h2v1h-2zM249 160h2v1h-2zM253 160h3v1h-3zM257 160h1v1h-1zM236 161h1v1h-1zM239 161h1v1h-1zM243 161h3v1h-3zM247 161h5v1h-5zM254 161h1v1h-1zM473 161h3v1h-3zM239 162h3v1h-3zM244 162h5v1h-5zM250 162h3v1h-3zM257 162h1v1h-1zM472 162h1v1h-1zM476 162h1v1h-1zM490 162h5v1h-5zM496 162h1v1h-1zM498 162h1v1h-1zM239 163h8v1h-8zM248 163h4v1h-4zM255 163h1v1h-1zM262 163h1v1h-1zM454 163h2v1h-2zM459 163h1v1h-1zM471 163h1v1h-1zM475 163h9v1h-9zM485 163h17v1h-17zM237 164h1v1h-1zM239 164h16v1h-16zM433 164h3v1h-3zM438 164h8v1h-8zM448 164h1v1h-1zM451 164h13v1h-13zM471 164h1v1h-1zM474 164h28v1h-28zM236 165h1v1h-1zM238 165h4v1h-4zM243 165h11v1h-11zM255 165h2v1h-2zM259 165h2v1h-2zM433 165h5v1h-5zM439 165h26v1h-26zM470 165h2v1h-2zM473 165h29v1h-29zM235 166h18v1h-18zM254 166h1v1h-1zM257 166h1v1h-1zM433 166h33v1h-33zM470 166h32v1h-32zM234 167h2v1h-2zM237 167h18v1h-18zM256 167h2v1h-2zM433 167h33v1h-33zM469 167h33v1h-33zM230 168h1v1h-1zM232 168h1v1h-1zM235 168h19v1h-19zM257 168h1v1h-1zM261 168h1v1h-1zM433 168h69v1h-69zM234 169h21v1h-21zM258 169h1v1h-1zM433 169h69v1h-69zM231 170h1v1h-1zM234 170h5v1h-5zM240 170h16v1h-16zM257 170h1v1h-1zM433 170h69v1h-69zM233 171h18v1h-18zM252 171h1v1h-1zM254 171h1v1h-1zM256 171h1v1h-1zM433 171h69v1h-69zM233 172h20v1h-20zM256 172h1v1h-1zM433 172h22v1h-22zM456 172h25v1h-25zM485 172h7v1h-7zM497 172h2v1h-2zM501 172h1v1h-1zM233 173h20v1h-20zM254 173h2v1h-2zM433 173h9v1h-9zM444 173h1v1h-1zM446 173h3v1h-3zM450 173h6v1h-6zM457 173h21v1h-21zM479 173h1v1h-1zM488 173h2v1h-2zM500 173h1v1h-1zM230 174h13v1h-13zM244 174h11v1h-11zM434 174h1v1h-1zM436 174h1v1h-1zM438 174h2v1h-2zM452 174h1v1h-1zM458 174h3v1h-3zM462 174h11v1h-11zM476 174h4v1h-4zM485 174h3v1h-3zM490 174h1v1h-1zM499 174h1v1h-1zM232 175h3v1h-3zM236 175h12v1h-12zM249 175h5v1h-5zM255 175h2v1h-2zM259 175h1v1h-1zM433 175h1v1h-1zM459 175h1v1h-1zM463 175h1v1h-1zM465 175h7v1h-7zM476 175h1v1h-1zM480 175h5v1h-5zM491 175h2v1h-2zM497 175h2v1h-2zM232 176h9v1h-9zM242 176h4v1h-4zM247 176h9v1h-9zM460 176h1v1h-1zM464 176h1v1h-1zM466 176h5v1h-5zM476 176h1v1h-1zM493 176h4v1h-4zM229 177h25v1h-25zM258 177h1v1h-1zM461 177h1v1h-1zM465 177h5v1h-5zM475 177h1v1h-1zM228 178h10v1h-10zM239 178h3v1h-3zM243 178h8v1h-8zM252 178h2v1h-2zM461 178h2v1h-2zM466 178h2v1h-2zM469 178h1v1h-1zM474 178h1v1h-1zM228 179h1v1h-1zM231 179h23v1h-23zM257 179h1v1h-1zM463 179h3v1h-3zM470 179h4v1h-4zM229 180h2v1h-2zM232 180h7v1h-7zM240 180h1v1h-1zM243 180h13v1h-13zM228 181h8v1h-8zM237 181h2v1h-2zM241 181h14v1h-14zM256 181h1v1h-1zM229 182h7v1h-7zM237 182h3v1h-3zM241 182h12v1h-12zM227 183h1v1h-1zM230 183h8v1h-8zM241 183h12v1h-12zM228 184h8v1h-8zM237 184h1v1h-1zM239 184h2v1h-2zM242 184h10v1h-10zM228 185h10v1h-10zM239 185h1v1h-1zM241 185h10v1h-10zM252 185h1v1h-1zM255 185h1v1h-1zM227 186h11v1h-11zM240 186h13v1h-13zM228 187h10v1h-10zM239 187h13v1h-13zM226 188h1v1h-1zM228 188h10v1h-10zM239 188h10v1h-10zM251 188h1v1h-1zM224 189h1v1h-1zM228 189h20v1h-20zM249 189h3v1h-3zM225 190h1v1h-1zM227 190h21v1h-21zM226 191h22v1h-22zM253 191h1v1h-1zM225 192h1v1h-1zM227 192h10v1h-10zM238 192h11v1h-11zM224 193h1v1h-1zM226 193h24v1h-24zM223 194h1v1h-1zM227 194h19v1h-19zM248 194h1v1h-1zM226 195h16v1h-16zM243 195h6v1h-6zM223 196h1v1h-1zM225 196h20v1h-20zM246 196h1v1h-1zM248 196h2v1h-2zM225 197h22v1h-22zM225 198h19v1h-19zM495 198h1v1h-1zM225 199h16v1h-16zM243 199h1v1h-1zM462 199h1v1h-1zM474 199h2v1h-2zM480 199h1v1h-1zM489 199h1v1h-1zM494 199h3v1h-3zM225 200h17v1h-17zM245 200h2v1h-2zM433 200h1v1h-1zM436 200h1v1h-1zM442 200h3v1h-3zM447 200h3v1h-3zM451 200h9v1h-9zM461 200h1v1h-1zM463 200h2v1h-2zM471 200h3v1h-3zM475 200h18v1h-18zM494 200h1v1h-1zM496 200h2v1h-2zM500 200h2v1h-2zM226 201h14v1h-14zM242 201h2v1h-2zM433 201h16v1h-16zM450 201h21v1h-21zM474 201h2v1h-2zM477 201h9v1h-9zM487 201h2v1h-2zM490 201h2v1h-2zM493 201h9v1h-9zM220 202h5v1h-5zM226 202h10v1h-10zM237 202h1v1h-1zM239 202h3v1h-3zM244 202h2v1h-2zM433 202h7v1h-7zM441 202h26v1h-26zM470 202h9v1h-9zM480 202h7v1h-7zM488 202h14v1h-14zM220 203h1v1h-1zM225 203h1v1h-1zM227 203h1v1h-1zM229 203h10v1h-10zM243 203h1v1h-1zM245 203h1v1h-1zM433 203h37v1h-37zM472 203h30v1h-30zM223 204h3v1h-3zM227 204h8v1h-8zM236 204h2v1h-2zM240 204h1v1h-1zM433 204h69v1h-69zM225 205h1v1h-1zM229 205h13v1h-13zM433 205h69v1h-69zM225 206h4v1h-4zM230 206h2v1h-2zM235 206h1v1h-1zM237 206h1v1h-1zM433 206h69v1h-69zM217 207h1v1h-1zM225 207h2v1h-2zM229 207h2v1h-2zM232 207h1v1h-1zM236 207h1v1h-1zM240 207h1v1h-1zM433 207h69v1h-69zM224 208h1v1h-1zM226 208h4v1h-4zM231 208h3v1h-3zM433 208h69v1h-69zM224 209h1v1h-1zM228 209h2v1h-2zM237 209h1v1h-1zM433 209h69v1h-69zM227 210h1v1h-1zM234 210h1v1h-1zM433 210h22v1h-22zM457 210h42v1h-42zM500 210h2v1h-2zM233 211h1v1h-1zM236 211h1v1h-1zM433 211h3v1h-3zM438 211h4v1h-4zM444 211h2v1h-2zM449 211h1v1h-1zM451 211h6v1h-6zM461 211h2v1h-2zM464 211h13v1h-13zM478 211h2v1h-2zM485 211h2v1h-2zM488 211h1v1h-1zM490 211h3v1h-3zM494 211h2v1h-2zM497 211h2v1h-2zM434 212h5v1h-5zM441 212h1v1h-1zM444 212h1v1h-1zM462 212h11v1h-11zM474 212h4v1h-4zM479 212h1v1h-1zM487 212h3v1h-3zM491 212h4v1h-4zM497 212h1v1h-1zM499 212h3v1h-3zM224 213h1v1h-1zM228 213h1v1h-1zM230 213h1v1h-1zM236 213h1v1h-1zM465 213h7v1h-7zM473 213h2v1h-2zM478 213h1v1h-1zM489 213h1v1h-1zM491 213h1v1h-1zM495 213h2v1h-2zM500 213h1v1h-1zM219 214h1v1h-1zM228 214h1v1h-1zM470 214h1v1h-1zM472 214h2v1h-2zM490 214h2v1h-2zM495 214h1v1h-1zM498 214h2v1h-2zM471 215h1v1h-1zM492 215h6v1h-6zM462 231h1v1h-1zM461 232h1v1h-1zM463 232h1v1h-1zM455 233h1v1h-1zM457 233h1v1h-1zM459 233h2v1h-2zM464 233h1v1h-1zM452 234h3v1h-3zM456 234h7v1h-7zM464 234h1v1h-1zM449 235h1v1h-1zM452 235h1v1h-1zM454 235h10v1h-10zM465 235h1v1h-1zM492 235h1v1h-1zM494 235h1v1h-1zM501 235h1v1h-1zM445 236h21v1h-21zM481 236h1v1h-1zM483 236h2v1h-2zM488 236h14v1h-14zM441 237h1v1h-1zM443 237h23v1h-23zM477 237h25v1h-25zM434 238h2v1h-2zM438 238h29v1h-29zM475 238h27v1h-27zM433 239h34v1h-34zM473 239h29v1h-29zM433 240h34v1h-34zM472 240h30v1h-30zM433 241h35v1h-35zM471 241h31v1h-31zM433 242h35v1h-35zM471 242h31v1h-31zM433 243h27v1h-27zM461 243h7v1h-7zM470 243h32v1h-32zM433 244h24v1h-24zM462 244h40v1h-40zM433 245h21v1h-21zM462 245h17v1h-17zM480 245h2v1h-2zM483 245h13v1h-13zM497 245h5v1h-5zM433 246h11v1h-11zM445 246h5v1h-5zM463 246h21v1h-21zM485 246h3v1h-3zM489 246h6v1h-6zM497 246h4v1h-4zM433 247h9v1h-9zM443 247h4v1h-4zM463 247h14v1h-14zM478 247h5v1h-5zM485 247h2v1h-2zM489 247h1v1h-1zM491 247h1v1h-1zM493 247h2v1h-2zM496 247h1v1h-1zM433 248h8v1h-8zM464 248h1v1h-1zM466 248h10v1h-10zM477 248h2v1h-2zM486 248h4v1h-4zM491 248h1v1h-1zM494 248h2v1h-2zM438 249h2v1h-2zM464 249h14v1h-14zM487 249h1v1h-1zM489 249h1v1h-1zM492 249h2v1h-2zM464 250h9v1h-9zM474 250h1v1h-1zM487 250h2v1h-2zM492 250h2v1h-2zM465 251h9v1h-9zM465 252h8v1h-8zM467 253h4v1h-4zM472 253h1v1h-1zM467 254h3v1h-3zM471 254h1v1h-1zM468 255h1v1h-1zM470 255h1v1h-1z"/><path fill="#33ff00" d="M605 288h2v1h-2zM628 288h3v1h-3zM602 289h6v1h-6zM626 289h7v1h-7zM599 290h11v1h-11zM625 290h10v1h-10zM596 291h1v1h-1zM598 291h12v1h-12zM625 291h12v1h-12zM583 292h4v1h-4zM588 292h2v1h-2zM591 292h19v1h-19zM624 292h16v1h-16zM641 292h1v1h-1zM643 292h1v1h-1zM645 292h1v1h-1zM649 292h2v1h-2zM583 293h28v1h-28zM624 293h28v1h-28zM583 294h28v1h-28zM623 294h29v1h-29zM583 295h28v1h-28zM623 295h29v1h-29zM583 296h29v1h-29zM623 296h29v1h-29zM583 297h29v1h-29zM623 297h29v1h-29zM583 298h29v1h-29zM622 298h30v1h-30zM583 299h29v1h-29zM622 299h30v1h-30zM583 300h30v1h-30zM622 300h30v1h-30zM583 301h30v1h-30zM622 301h30v1h-30zM583 302h30v1h-30zM622 302h30v1h-30zM583 303h30v1h-30zM621 303h31v1h-31zM583 304h30v1h-30zM621 304h31v1h-31zM583 305h31v1h-31zM621 305h31v1h-31zM583 306h31v1h-31zM621 306h31v1h-31zM583 307h31v1h-31zM620 307h32v1h-32zM586 308h3v1h-3zM592 308h3v1h-3zM598 308h3v1h-3zM604 308h3v1h-3zM610 308h3v1h-3zM622 308h3v1h-3zM628 308h3v1h-3zM634 308h3v1h-3zM640 308h3v1h-3zM646 308h3v1h-3zM583 309h32v1h-32zM620 309h32v1h-32zM583 310h32v1h-32zM620 310h32v1h-32zM583 311h32v1h-32zM619 311h33v1h-33zM583 312h32v1h-32zM619 312h33v1h-33zM583 313h32v1h-32zM619 313h33v1h-33zM584 315h65v1h-65zM584 316h1v1h-1zM648 316h1v1h-1zM584 317h1v1h-1zM648 317h1v1h-1zM584 318h1v1h-1zM648 318h1v1h-1zM584 319h1v1h-1zM648 319h1v1h-1zM584 320h1v1h-1zM648 320h1v1h-1zM584 321h1v1h-1zM648 321h1v1h-1zM584 322h1v1h-1zM648 322h1v1h-1zM584 323h1v1h-1zM648 323h1v1h-1zM584 324h1v1h-1zM648 324h1v1h-1zM584 325h1v1h-1zM648 325h1v1h-1zM584 326h1v1h-1zM648 326h1v1h-1zM584 327h1v1h-1zM648 327h1v1h-1zM584 328h1v1h-1zM648 328h1v1h-1zM584 329h65v1h-65z"/><path fill="#ffffff" d="M457 289h4v1h-4zM471 289h2v1h-2zM479 289h3v1h-3zM490 289h3v1h-3zM513 289h2v1h-2zM457 290h4v1h-4zM471 290h2v1h-2zM479 290h3v1h-3zM490 290h3v1h-3zM513 290h2v1h-2zM457 291h4v1h-4zM471 291h2v1h-2zM479 291h3v1h-3zM490 291h3v1h-3zM513 291h2v1h-2zM457 292h4v1h-4zM471 292h2v1h-2zM479 292h3v1h-3zM490 292h3v1h-3zM513 292h2v1h-2zM457 293h4v1h-4zM471 293h2v1h-2zM479 293h3v1h-3zM490 293h3v1h-3zM513 293h2v1h-2zM457 294h4v1h-4zM471 294h2v1h-2zM479 294h3v1h-3zM490 294h3v1h-3zM513 294h2v1h-2zM516 294h2v1h-2zM524 294h2v1h-2zM457 295h4v1h-4zM471 295h2v1h-2zM479 295h3v1h-3zM490 295h3v1h-3zM513 295h2v1h-2zM516 295h2v1h-2zM524 295h2v1h-2zM532 295h2v1h-2zM457 296h4v1h-4zM471 296h2v1h-2zM479 296h3v1h-3zM490 296h3v1h-3zM514 296h1v1h-1zM524 296h2v1h-2zM534 296h2v1h-2zM457 297h4v1h-4zM471 297h2v1h-2zM479 297h3v1h-3zM490 297h3v1h-3zM513 297h2v1h-2zM516 297h2v1h-2zM522 297h6v1h-6zM530 297h6v1h-6zM546 297h3v1h-3zM559 297h2v1h-2zM459 298h2v1h-2zM471 298h2v1h-2zM479 298h1v1h-1zM490 298h2v1h-2zM513 298h2v1h-2zM516 298h2v1h-2zM522 298h6v1h-6zM530 298h6v1h-6zM546 298h4v1h-4zM559 298h2v1h-2zM568 298h2v1h-2zM457 299h4v1h-4zM471 299h2v1h-2zM479 299h3v1h-3zM490 299h3v1h-3zM513 299h2v1h-2zM516 299h4v1h-4zM522 299h6v1h-6zM530 299h6v1h-6zM538 299h2v1h-2zM544 299h1v1h-1zM546 299h4v1h-4zM559 299h2v1h-2zM568 299h2v1h-2zM573 299h3v1h-3zM442 300h8v1h-8zM452 300h9v1h-9zM463 300h5v1h-5zM471 300h2v1h-2zM474 300h4v1h-4zM479 300h3v1h-3zM484 300h4v1h-4zM490 300h3v1h-3zM494 300h3v1h-3zM499 300h4v1h-4zM512 300h3v1h-3zM516 300h20v1h-20zM538 300h4v1h-4zM544 300h1v1h-1zM546 300h4v1h-4zM556 300h5v1h-5zM568 300h12v1h-12zM442 301h8v1h-8zM452 301h9v1h-9zM463 301h5v1h-5zM471 301h2v1h-2zM474 301h4v1h-4zM479 301h3v1h-3zM484 301h4v1h-4zM490 301h3v1h-3zM494 301h3v1h-3zM499 301h4v1h-4zM512 301h24v1h-24zM538 301h7v1h-7zM546 301h4v1h-4zM556 301h5v1h-5zM568 301h12v1h-12zM442 302h8v1h-8zM452 302h9v1h-9zM463 302h5v1h-5zM471 302h2v1h-2zM474 302h4v1h-4zM479 302h3v1h-3zM484 302h4v1h-4zM490 302h3v1h-3zM494 302h3v1h-3zM499 302h4v1h-4zM512 302h24v1h-24zM538 302h7v1h-7zM546 302h15v1h-15zM568 302h12v1h-12zM442 303h8v1h-8zM452 303h9v1h-9zM463 303h5v1h-5zM471 303h2v1h-2zM474 303h4v1h-4zM479 303h3v1h-3zM484 303h4v1h-4zM490 303h3v1h-3zM494 303h3v1h-3zM499 303h4v1h-4zM512 303h24v1h-24zM538 303h7v1h-7zM546 303h21v1h-21zM568 303h12v1h-12zM442 304h8v1h-8zM452 304h9v1h-9zM463 304h5v1h-5zM471 304h2v1h-2zM474 304h4v1h-4zM479 304h3v1h-3zM484 304h4v1h-4zM490 304h3v1h-3zM494 304h3v1h-3zM499 304h4v1h-4zM512 304h33v1h-33zM546 304h34v1h-34zM442 305h8v1h-8zM452 305h9v1h-9zM463 305h5v1h-5zM471 305h2v1h-2zM474 305h4v1h-4zM479 305h3v1h-3zM484 305h4v1h-4zM490 305h3v1h-3zM494 305h3v1h-3zM499 305h4v1h-4zM512 305h33v1h-33zM546 305h34v1h-34zM442 306h8v1h-8zM452 306h9v1h-9zM463 306h5v1h-5zM471 306h2v1h-2zM474 306h4v1h-4zM479 306h3v1h-3zM484 306h4v1h-4zM490 306h3v1h-3zM494 306h3v1h-3zM499 306h4v1h-4zM512 306h68v1h-68zM442 307h8v1h-8zM452 307h9v1h-9zM463 307h5v1h-5zM471 307h2v1h-2zM474 307h4v1h-4zM479 307h3v1h-3zM484 307h4v1h-4zM490 307h3v1h-3zM494 307h3v1h-3zM499 307h4v1h-4zM512 307h68v1h-68zM442 308h8v1h-8zM452 308h9v1h-9zM463 308h5v1h-5zM471 308h2v1h-2zM474 308h4v1h-4zM479 308h3v1h-3zM484 308h4v1h-4zM490 308h3v1h-3zM494 308h3v1h-3zM499 308h4v1h-4zM512 308h68v1h-68zM442 309h8v1h-8zM452 309h9v1h-9zM463 309h5v1h-5zM471 309h2v1h-2zM474 309h4v1h-4zM479 309h3v1h-3zM484 309h4v1h-4zM490 309h3v1h-3zM494 309h3v1h-3zM499 309h4v1h-4zM512 309h68v1h-68zM442 310h8v1h-8zM452 310h9v1h-9zM463 310h5v1h-5zM471 310h2v1h-2zM474 310h4v1h-4zM479 310h3v1h-3zM484 310h4v1h-4zM490 310h3v1h-3zM494 310h3v1h-3zM499 310h4v1h-4zM512 310h68v1h-68zM442 311h8v1h-8zM452 311h9v1h-9zM463 311h5v1h-5zM471 311h2v1h-2zM474 311h4v1h-4zM479 311h3v1h-3zM484 311h4v1h-4zM490 311h3v1h-3zM494 311h3v1h-3zM499 311h4v1h-4zM512 311h68v1h-68zM442 312h8v1h-8zM452 312h9v1h-9zM463 312h5v1h-5zM471 312h2v1h-2zM474 312h4v1h-4zM479 312h3v1h-3zM484 312h4v1h-4zM490 312h3v1h-3zM494 312h3v1h-3zM499 312h4v1h-4zM512 312h68v1h-68zM294 313h69v1h-69zM366 313h69v1h-69zM438 313h69v1h-69zM511 313h69v1h-69zM294 341h69v1h-69zM366 341h69v1h-69zM438 341h69v1h-69zM296 342h1v1h-1zM301 342h1v1h-1zM306 342h1v1h-1zM311 342h1v1h-1zM316 342h1v1h-1zM321 342h1v1h-1zM326 342h1v1h-1zM331 342h1v1h-1zM336 342h1v1h-1zM341 342h1v1h-1zM346 342h1v1h-1zM351 342h1v1h-1zM356 342h1v1h-1zM361 342h1v1h-1zM368 342h1v1h-1zM373 342h1v1h-1zM378 342h1v1h-1zM383 342h1v1h-1zM388 342h1v1h-1zM393 342h1v1h-1zM398 342h1v1h-1zM403 342h1v1h-1zM408 342h1v1h-1zM413 342h1v1h-1zM418 342h1v1h-1zM423 342h1v1h-1zM428 342h1v1h-1zM433 342h1v1h-1zM440 342h1v1h-1zM445 342h1v1h-1zM450 342h1v1h-1zM455 342h1v1h-1zM460 342h1v1h-1zM465 342h1v1h-1zM470 342h1v1h-1zM475 342h1v1h-1zM480 342h1v1h-1zM485 342h1v1h-1zM490 342h1v1h-1zM495 342h1v1h-1zM500 342h1v1h-1zM505 342h1v1h-1zM313 346h3v1h-3zM341 346h4v1h-4zM355 346h3v1h-3zM359 346h2v1h-2zM313 347h3v1h-3zM341 347h4v1h-4zM355 347h3v1h-3zM359 347h2v1h-2zM313 348h3v1h-3zM341 348h4v1h-4zM355 348h3v1h-3zM359 348h2v1h-2zM313 349h3v1h-3zM341 349h4v1h-4zM355 349h3v1h-3zM359 349h2v1h-2zM313 350h3v1h-3zM341 350h4v1h-4zM355 350h3v1h-3zM359 350h2v1h-2zM313 351h3v1h-3zM341 351h4v1h-4zM355 351h3v1h-3zM359 351h2v1h-2zM313 352h3v1h-3zM341 352h4v1h-4zM355 352h3v1h-3zM359 352h2v1h-2zM313 353h3v1h-3zM341 353h4v1h-4zM355 353h3v1h-3zM359 353h2v1h-2zM313 354h3v1h-3zM341 354h4v1h-4zM355 354h3v1h-3zM359 354h2v1h-2zM313 355h3v1h-3zM341 355h4v1h-4zM355 355h3v1h-3zM359 355h2v1h-2zM313 356h3v1h-3zM341 356h4v1h-4zM355 356h3v1h-3zM359 356h2v1h-2zM313 357h3v1h-3zM341 357h4v1h-4zM355 357h3v1h-3zM359 357h2v1h-2zM298 358h2v1h-2zM303 358h3v1h-3zM310 358h2v1h-2zM315 358h3v1h-3zM321 358h3v1h-3zM333 358h1v1h-1zM335 358h1v1h-1zM340 358h2v1h-2zM345 358h1v1h-1zM347 358h1v1h-1zM351 358h3v1h-3zM357 358h3v1h-3zM298 359h10v1h-10zM310 359h10v1h-10zM321 359h4v1h-4zM331 359h3v1h-3zM335 359h1v1h-1zM337 359h1v1h-1zM340 359h6v1h-6zM347 359h7v1h-7zM355 359h6v1h-6zM298 360h10v1h-10zM310 360h10v1h-10zM321 360h4v1h-4zM331 360h3v1h-3zM335 360h1v1h-1zM337 360h1v1h-1zM340 360h6v1h-6zM347 360h7v1h-7zM355 360h6v1h-6zM298 361h10v1h-10zM310 361h10v1h-10zM321 361h4v1h-4zM331 361h3v1h-3zM335 361h1v1h-1zM337 361h1v1h-1zM340 361h6v1h-6zM347 361h7v1h-7zM355 361h6v1h-6zM298 362h10v1h-10zM310 362h10v1h-10zM321 362h4v1h-4zM331 362h3v1h-3zM335 362h1v1h-1zM337 362h1v1h-1zM340 362h6v1h-6zM347 362h7v1h-7zM355 362h6v1h-6zM298 363h10v1h-10zM310 363h10v1h-10zM321 363h4v1h-4zM331 363h3v1h-3zM335 363h1v1h-1zM337 363h1v1h-1zM340 363h6v1h-6zM347 363h7v1h-7zM355 363h6v1h-6zM298 364h10v1h-10zM310 364h10v1h-10zM321 364h4v1h-4zM331 364h3v1h-3zM335 364h1v1h-1zM337 364h1v1h-1zM340 364h6v1h-6zM347 364h7v1h-7zM355 364h6v1h-6zM298 365h10v1h-10zM310 365h10v1h-10zM321 365h4v1h-4zM331 365h3v1h-3zM335 365h1v1h-1zM337 365h1v1h-1zM340 365h6v1h-6zM347 365h7v1h-7zM355 365h6v1h-6zM298 366h10v1h-10zM310 366h10v1h-10zM321 366h4v1h-4zM331 366h3v1h-3zM335 366h1v1h-1zM337 366h1v1h-1zM340 366h6v1h-6zM347 366h7v1h-7zM355 366h6v1h-6zM298 367h10v1h-10zM310 367h10v1h-10zM321 367h4v1h-4zM331 367h3v1h-3zM335 367h1v1h-1zM337 367h1v1h-1zM340 367h6v1h-6zM347 367h7v1h-7zM355 367h6v1h-6zM298 368h10v1h-10zM310 368h10v1h-10zM321 368h4v1h-4zM331 368h3v1h-3zM335 368h1v1h-1zM337 368h1v1h-1zM340 368h6v1h-6zM347 368h7v1h-7zM355 368h6v1h-6zM294 369h69v1h-69zM366 369h69v1h-69zM296 370h1v1h-1zM301 370h1v1h-1zM306 370h1v1h-1zM311 370h1v1h-1zM316 370h1v1h-1zM321 370h1v1h-1zM326 370h1v1h-1zM331 370h1v1h-1zM336 370h1v1h-1zM341 370h1v1h-1zM346 370h1v1h-1zM351 370h1v1h-1zM356 370h1v1h-1zM361 370h1v1h-1zM368 370h1v1h-1zM373 370h1v1h-1zM378 370h1v1h-1zM383 370h1v1h-1zM388 370h1v1h-1zM393 370h1v1h-1zM398 370h1v1h-1zM403 370h1v1h-1zM408 370h1v1h-1zM413 370h1v1h-1zM418 370h1v1h-1zM423 370h1v1h-1zM428 370h1v1h-1zM433 370h1v1h-1zM297 373h4v1h-4zM315 373h3v1h-3zM297 374h4v1h-4zM305 374h3v1h-3zM315 374h3v1h-3zM297 375h4v1h-4zM305 375h3v1h-3zM315 375h3v1h-3zM297 376h4v1h-4zM303 376h5v1h-5zM315 376h3v1h-3zM297 377h4v1h-4zM303 377h5v1h-5zM315 377h3v1h-3zM297 378h4v1h-4zM303 378h5v1h-5zM315 378h3v1h-3zM297 379h4v1h-4zM303 379h5v1h-5zM312 379h6v1h-6zM336 379h4v1h-4zM358 379h4v1h-4zM297 380h4v1h-4zM303 380h5v1h-5zM312 380h6v1h-6zM327 380h1v1h-1zM329 380h11v1h-11zM358 380h4v1h-4zM297 381h4v1h-4zM303 381h5v1h-5zM312 381h6v1h-6zM327 381h1v1h-1zM329 381h11v1h-11zM345 381h4v1h-4zM353 381h9v1h-9zM297 382h4v1h-4zM303 382h5v1h-5zM312 382h6v1h-6zM327 382h1v1h-1zM329 382h11v1h-11zM342 382h20v1h-20zM297 383h11v1h-11zM312 383h6v1h-6zM323 383h5v1h-5zM329 383h11v1h-11zM342 383h20v1h-20zM297 384h11v1h-11zM312 384h6v1h-6zM320 384h8v1h-8zM329 384h33v1h-33zM294 385h14v1h-14zM312 385h6v1h-6zM320 385h8v1h-8zM329 385h33v1h-33zM294 386h34v1h-34zM329 386h33v1h-33zM294 387h34v1h-34zM329 387h33v1h-33zM294 388h34v1h-34zM329 388h33v1h-33zM294 389h34v1h-34zM329 389h33v1h-33zM294 390h34v1h-34zM329 390h33v1h-33zM297 391h2v1h-2zM302 391h2v1h-2zM307 391h2v1h-2zM312 391h2v1h-2zM317 391h2v1h-2zM322 391h2v1h-2zM327 391h1v1h-1zM332 391h2v1h-2zM337 391h2v1h-2zM342 391h2v1h-2zM347 391h2v1h-2zM352 391h2v1h-2zM357 391h2v1h-2zM294 392h34v1h-34zM329 392h33v1h-33zM294 393h34v1h-34zM329 393h33v1h-33zM294 394h34v1h-34zM329 394h33v1h-33zM294 395h34v1h-34zM329 395h33v1h-33zM294 396h34v1h-34zM329 396h33v1h-33zM294 397h68v1h-68z"/><path fill="#606060" d="M511 296h3v1h-3zM516 296h3v1h-3zM521 296h3v1h-3zM526 296h3v1h-3zM531 296h3v1h-3zM536 296h3v1h-3zM541 296h3v1h-3zM546 296h3v1h-3zM551 296h3v1h-3zM556 296h3v1h-3zM561 296h3v1h-3zM566 296h3v1h-3zM571 296h3v1h-3zM576 296h3v1h-3zM438 298h3v1h-3zM444 298h3v1h-3zM450 298h3v1h-3zM456 298h3v1h-3zM462 298h3v1h-3zM468 298h3v1h-3zM474 298h3v1h-3zM480 298h3v1h-3zM486 298h3v1h-3zM492 298h3v1h-3zM498 298h3v1h-3zM504 298h3v1h-3zM583 308h3v1h-3zM589 308h3v1h-3zM595 308h3v1h-3zM601 308h3v1h-3zM607 308h3v1h-3zM613 308h3v1h-3zM619 308h3v1h-3zM625 308h3v1h-3zM631 308h3v1h-3zM637 308h3v1h-3zM643 308h3v1h-3zM649 308h3v1h-3zM511 341h3v1h-3zM516 341h3v1h-3zM521 341h3v1h-3zM526 341h3v1h-3zM531 341h3v1h-3zM536 341h3v1h-3zM541 341h3v1h-3zM546 341h3v1h-3zM551 341h3v1h-3zM556 341h3v1h-3zM561 341h3v1h-3zM566 341h3v1h-3zM571 341h3v1h-3zM576 341h3v1h-3zM294 358h3v1h-3zM300 358h3v1h-3zM306 358h3v1h-3zM312 358h3v1h-3zM318 358h3v1h-3zM324 358h3v1h-3zM330 358h3v1h-3zM336 358h3v1h-3zM342 358h3v1h-3zM348 358h3v1h-3zM354 358h3v1h-3zM360 358h3v1h-3zM438 369h3v1h-3zM443 369h3v1h-3zM448 369h3v1h-3zM453 369h3v1h-3zM458 369h3v1h-3zM463 369h3v1h-3zM468 369h3v1h-3zM473 369h3v1h-3zM478 369h3v1h-3zM483 369h3v1h-3zM488 369h3v1h-3zM493 369h3v1h-3zM498 369h3v1h-3zM503 369h3v1h-3zM294 391h3v1h-3zM299 391h3v1h-3zM304 391h3v1h-3zM309 391h3v1h-3zM314 391h3v1h-3zM319 391h3v1h-3zM324 391h3v1h-3zM329 391h3v1h-3zM334 391h3v1h-3zM339 391h3v1h-3zM344 391h3v1h-3zM349 391h3v1h-3zM354 391h3v1h-3zM359 391h3v1h-3zM366 397h3v1h-3zM371 397h3v1h-3zM376 397h3v1h-3zM381 397h3v1h-3zM386 397h3v1h-3zM391 397h3v1h-3zM396 397h3v1h-3zM401 397h3v1h-3zM406 397h3v1h-3zM411 397h3v1h-3zM416 397h3v1h-3zM421 397h3v1h-3zM426 397h3v1h-3zM431 397h3v1h-3z"/><path fill="#ff3300" d="M540 318h2v1h-2zM549 318h1v1h-1zM540 319h2v1h-2zM548 319h2v1h-2zM540 320h2v1h-2zM548 320h2v1h-2zM540 321h2v1h-2zM548 321h2v1h-2zM540 322h2v1h-2zM548 322h2v1h-2zM540 323h2v1h-2zM548 323h2v1h-2zM540 324h2v1h-2zM548 324h2v1h-2zM540 325h2v1h-2zM548 325h2v1h-2zM539 326h3v1h-3zM548 326h2v1h-2zM539 327h3v1h-3zM548 327h2v1h-2zM539 328h3v1h-3zM548 328h3v1h-3zM538 329h4v1h-4zM548 329h3v1h-3zM538 330h4v1h-4zM548 330h3v1h-3zM538 331h4v1h-4zM548 331h3v1h-3zM538 332h4v1h-4zM548 332h4v1h-4zM537 333h5v1h-5zM548 333h4v1h-4zM536 334h6v1h-6zM548 334h5v1h-5zM535 335h7v1h-7zM548 335h7v1h-7zM533 336h9v1h-9zM548 336h8v1h-8zM532 337h10v1h-10zM548 337h10v1h-10zM527 338h15v1h-15zM548 338h13v1h-13zM522 339h20v1h-20zM548 339h21v1h-21zM511 340h68v1h-68zM514 341h2v1h-2zM519 341h2v1h-2zM524 341h2v1h-2zM529 341h2v1h-2zM534 341h2v1h-2zM539 341h2v1h-2zM544 341h2v1h-2zM549 341h2v1h-2zM554 341h2v1h-2zM559 341h2v1h-2zM564 341h2v1h-2zM569 341h2v1h-2zM574 341h2v1h-2zM512 343h65v1h-65zM512 344h1v1h-1zM576 344h1v1h-1zM512 345h1v1h-1zM576 345h1v1h-1zM512 346h1v1h-1zM576 346h1v1h-1zM512 347h1v1h-1zM576 347h1v1h-1zM512 348h1v1h-1zM576 348h1v1h-1zM512 349h1v1h-1zM576 349h1v1h-1zM512 350h1v1h-1zM576 350h1v1h-1zM512 351h1v1h-1zM576 351h1v1h-1zM512 352h1v1h-1zM576 352h1v1h-1zM512 353h1v1h-1zM576 353h1v1h-1zM512 354h1v1h-1zM576 354h1v1h-1zM512 355h1v1h-1zM576 355h1v1h-1zM512 356h1v1h-1zM576 356h1v1h-1zM512 357h65v1h-65z"/><path fill="#9000ff" d="M467 345h1v1h-1zM475 345h1v1h-1zM467 346h2v1h-2zM475 346h2v1h-2zM467 347h2v1h-2zM475 347h2v1h-2zM467 348h2v1h-2zM475 348h2v1h-2zM467 349h2v1h-2zM475 349h2v1h-2zM467 350h2v1h-2zM475 350h2v1h-2zM467 351h2v1h-2zM475 351h2v1h-2zM467 352h2v1h-2zM475 352h2v1h-2zM467 353h2v1h-2zM475 353h3v1h-3zM467 354h2v1h-2zM475 354h3v1h-3zM466 355h3v1h-3zM475 355h3v1h-3zM466 356h3v1h-3zM475 356h3v1h-3zM466 357h3v1h-3zM475 357h3v1h-3zM466 358h3v1h-3zM475 358h3v1h-3zM465 359h4v1h-4zM475 359h3v1h-3zM464 360h5v1h-5zM475 360h4v1h-4zM463 361h6v1h-6zM475 361h5v1h-5zM463 362h6v1h-6zM475 362h6v1h-6zM463 363h6v1h-6zM475 363h7v1h-7zM460 364h9v1h-9zM475 364h9v1h-9zM458 365h1v1h-1zM460 365h9v1h-9zM475 365h12v1h-12zM454 366h1v1h-1zM456 366h13v1h-13zM475 366h13v1h-13zM489 366h1v1h-1zM448 367h21v1h-21zM475 367h20v1h-20zM496 367h1v1h-1zM438 368h68v1h-68zM441 369h2v1h-2zM446 369h2v1h-2zM451 369h2v1h-2zM456 369h2v1h-2zM461 369h2v1h-2zM466 369h2v1h-2zM471 369h2v1h-2zM476 369h2v1h-2zM481 369h2v1h-2zM486 369h2v1h-2zM491 369h2v1h-2zM496 369h2v1h-2zM501 369h2v1h-2zM439 370h65v1h-65zM439 371h1v1h-1zM503 371h1v1h-1zM439 372h1v1h-1zM503 372h1v1h-1zM439 373h1v1h-1zM503 373h1v1h-1zM439 374h1v1h-1zM503 374h1v1h-1zM439 375h1v1h-1zM503 375h1v1h-1zM439 376h1v1h-1zM503 376h1v1h-1zM439 377h1v1h-1zM503 377h1v1h-1zM439 378h1v1h-1zM503 378h1v1h-1zM439 379h1v1h-1zM503 379h1v1h-1zM439 380h1v1h-1zM503 380h1v1h-1zM439 381h1v1h-1zM503 381h1v1h-1zM439 382h1v1h-1zM503 382h1v1h-1zM439 383h1v1h-1zM503 383h1v1h-1zM439 384h65v1h-65z"/><path fill="#ffee00" d="M395 374h2v1h-2zM403 374h1v1h-1zM395 375h2v1h-2zM403 375h2v1h-2zM395 376h2v1h-2zM403 376h2v1h-2zM395 377h2v1h-2zM403 377h2v1h-2zM395 378h2v1h-2zM403 378h2v1h-2zM395 379h2v1h-2zM403 379h2v1h-2zM395 380h2v1h-2zM403 380h2v1h-2zM395 381h2v1h-2zM403 381h2v1h-2zM394 382h3v1h-3zM403 382h2v1h-2zM394 383h3v1h-3zM403 383h3v1h-3zM394 384h3v1h-3zM403 384h3v1h-3zM394 385h3v1h-3zM403 385h3v1h-3zM394 386h3v1h-3zM403 386h3v1h-3zM393 387h4v1h-4zM403 387h3v1h-3zM392 388h5v1h-5zM403 388h4v1h-4zM392 389h5v1h-5zM403 389h5v1h-5zM391 390h6v1h-6zM403 390h6v1h-6zM389 391h8v1h-8zM403 391h8v1h-8zM389 392h8v1h-8zM403 392h8v1h-8zM386 393h11v1h-11zM403 393h11v1h-11zM415 393h1v1h-1zM380 394h17v1h-17zM403 394h16v1h-16zM370 395h2v1h-2zM373 395h24v1h-24zM403 395h24v1h-24zM429 395h1v1h-1zM366 396h68v1h-68zM369 397h2v1h-2zM374 397h2v1h-2zM379 397h2v1h-2zM384 397h2v1h-2zM389 397h2v1h-2zM394 397h2v1h-2zM399 397h2v1h-2zM404 397h2v1h-2zM409 397h2v1h-2zM414 397h2v1h-2zM419 397h2v1h-2zM424 397h2v1h-2zM429 397h2v1h-2zM367 399h65v1h-65zM367 400h1v1h-1zM431 400h1v1h-1zM367 401h1v1h-1zM431 401h1v1h-1zM367 402h1v1h-1zM431 402h1v1h-1zM367 403h1v1h-1zM431 403h1v1h-1zM367 404h1v1h-1zM431 404h1v1h-1zM367 405h1v1h-1zM431 405h1v1h-1zM367 406h1v1h-1zM431 406h1v1h-1zM367 407h1v1h-1zM431 407h1v1h-1zM367 408h1v1h-1zM431 408h1v1h-1zM367 409h1v1h-1zM431 409h1v1h-1zM367 410h1v1h-1zM431 410h1v1h-1zM367 411h1v1h-1zM431 411h1v1h-1zM367 412h65v1h-65z"/><path fill="#00d0ff" d="M324 401h1v1h-1zM323 402h2v1h-2zM331 402h2v1h-2zM323 403h2v1h-2zM331 403h2v1h-2zM323 404h2v1h-2zM331 404h2v1h-2zM323 405h2v1h-2zM331 405h2v1h-2zM323 406h2v1h-2zM331 406h2v1h-2zM323 407h2v1h-2zM331 407h2v1h-2zM323 408h2v1h-2zM331 408h2v1h-2zM323 409h2v1h-2zM331 409h2v1h-2zM323 410h2v1h-2zM331 410h2v1h-2zM323 411h2v1h-2zM331 411h3v1h-3zM322 412h3v1h-3zM331 412h3v1h-3zM322 413h3v1h-3zM331 413h3v1h-3zM367 413h65v1h-65zM321 414h4v1h-4zM331 414h4v1h-4zM367 414h1v1h-1zM431 414h1v1h-1zM321 415h4v1h-4zM331 415h4v1h-4zM367 415h1v1h-1zM431 415h1v1h-1zM321 416h4v1h-4zM331 416h4v1h-4zM367 416h1v1h-1zM431 416h1v1h-1zM320 417h5v1h-5zM331 417h4v1h-4zM367 417h1v1h-1zM431 417h1v1h-1zM320 418h5v1h-5zM331 418h6v1h-6zM367 418h1v1h-1zM431 418h1v1h-1zM319 419h6v1h-6zM331 419h7v1h-7zM367 419h1v1h-1zM431 419h1v1h-1zM315 420h10v1h-10zM331 420h9v1h-9zM367 420h1v1h-1zM431 420h1v1h-1zM315 421h10v1h-10zM331 421h13v1h-13zM367 421h1v1h-1zM431 421h1v1h-1zM308 422h17v1h-17zM331 422h15v1h-15zM367 422h1v1h-1zM431 422h1v1h-1zM302 423h23v1h-23zM331 423h24v1h-24zM367 423h1v1h-1zM431 423h1v1h-1zM294 424h68v1h-68zM367 424h1v1h-1zM431 424h1v1h-1zM294 425h68v1h-68zM367 425h1v1h-1zM431 425h1v1h-1zM367 426h65v1h-65z"/></svg><div class="t" style="left:290px;top:258px;font-size:12px;color:#fff">2</div><div class="t" style="left:365px;top:258px;font-size:12px;color:#fff">6</div><div class="t" style="left:440.5px;top:258px;font-size:12px;color:#fff">9</div><div class="t" style="left:516px;top:258px;font-size:12px;color:#fff">10</div><div class="t" style="left:590.5px;top:258px;font-size:12px;color:#fff">17</div><div class="t" style="left:283px;top:294px;font-size:11px;color:#fff">17</div><div class="t" style="left:283px;top:322px;font-size:11px;color:#fff">10</div><div class="t" style="left:283px;top:350px;font-size:11px;color:#fff">9</div><div class="t" style="left:283px;top:379px;font-size:11px;color:#fff">6</div><div class="t" style="left:283px;top:406px;font-size:11px;color:#fff">2</div><div class="t" style="left:324.5px;top:426px;font-size:11px;color:#fff">2</div><div class="t" style="left:396.5px;top:426px;font-size:11px;color:#fff">6</div><div class="t" style="left:468.5px;top:426px;font-size:11px;color:#fff">9</div><div class="t" style="left:537px;top:426px;font-size:11px;color:#fff">10</div><div class="t" style="left:609px;top:426px;font-size:11px;color:#fff">17</div><div class="t" style="left:584px;width:65px;text-align:center;top:318px;font-size:11px;letter-spacing:1.2px;text-indent:1px;color:#fff">8.49</div><div class="t" style="left:512px;width:65px;text-align:center;top:346px;font-size:11px;letter-spacing:1.2px;text-indent:1px;color:#fff">0.86</div><div class="t" style="left:439px;width:65px;text-align:center;top:373px;font-size:11px;letter-spacing:1.2px;text-indent:1px;color:#fff">0.90</div><div class="t" style="left:367px;width:65px;text-align:center;top:402px;font-size:11px;letter-spacing:1.2px;text-indent:1px;color:#fff">2.51</div><div class="t" style="left:367px;width:65px;text-align:center;top:416px;font-size:11px;letter-spacing:1.2px;text-indent:1px;color:#fff">0.51</div></body></html>
